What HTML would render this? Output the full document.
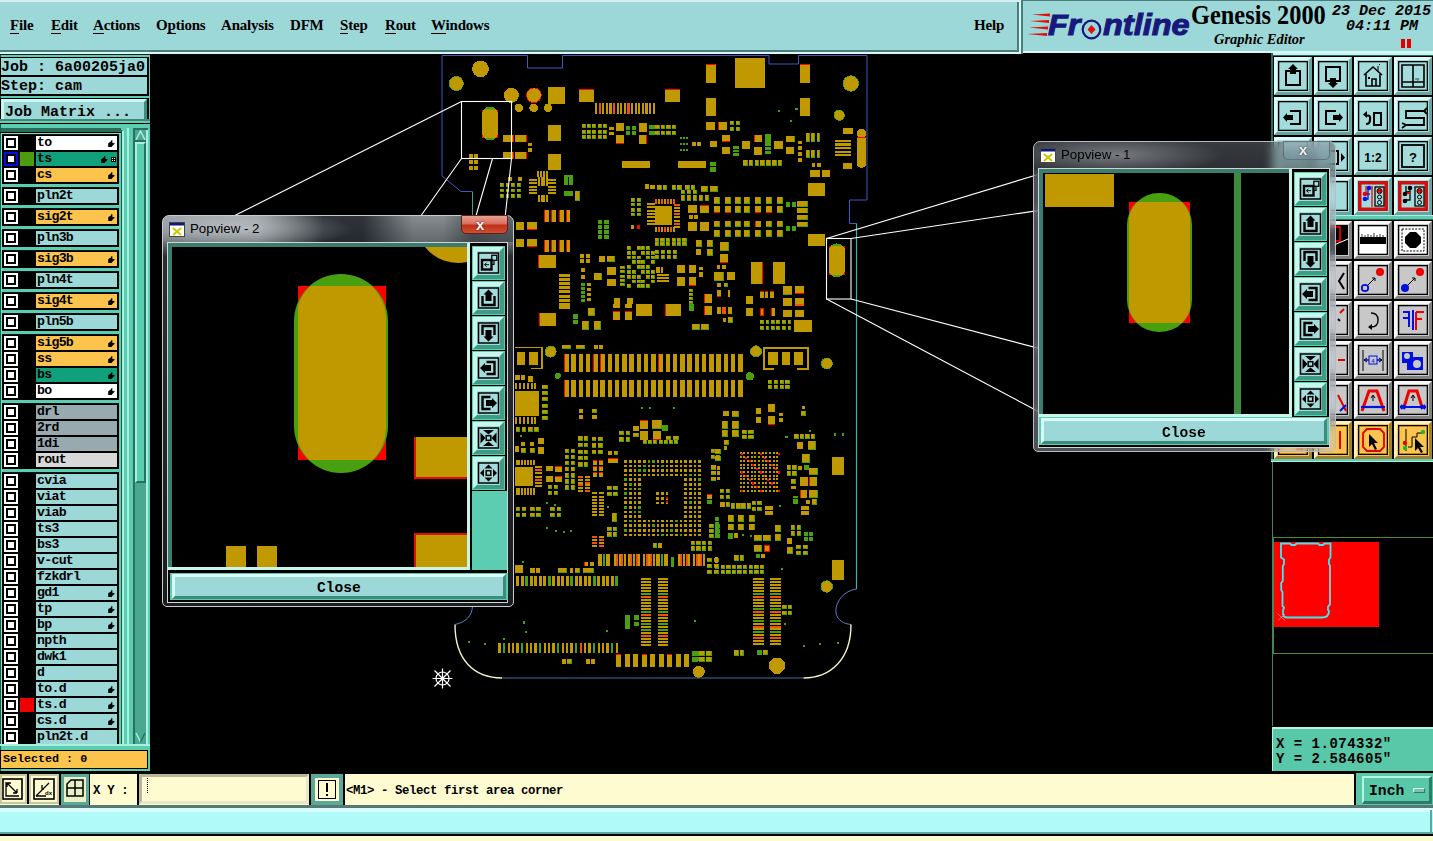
<!DOCTYPE html>
<html><head><meta charset="utf-8">
<style>

*{margin:0;padding:0;box-sizing:border-box}
html,body{width:1433px;height:841px;overflow:hidden;background:#000;position:relative}
.a{position:absolute}
.mono{font-family:"Liberation Mono",monospace;font-weight:bold}
.serif{font-family:"Liberation Serif",serif;font-weight:bold}
.menu span{position:absolute;top:17px;font-size:15px;color:#000;font-family:"Liberation Serif",serif;font-weight:bold;letter-spacing:-0.2px}
.menu u{text-decoration:none;border-bottom:1px solid #000}
.grp{position:absolute;left:2px;width:117px;background:#000;border-top:1px solid #111}
.row{position:absolute;left:0;width:117px;height:14px}
.cb{position:absolute;left:2px;top:0;width:14px;height:14px;background:#fff}
.cb:after{content:"";position:absolute;left:2px;top:2px;width:10px;height:10px;border:2px solid #000;box-sizing:border-box;background:#fff}
.sw{position:absolute;left:18px;top:0;width:14px;height:14px}
.nm{position:absolute;left:34px;top:0;width:81px;height:14px;font-family:"Liberation Mono",monospace;font-weight:bold;font-size:13.2px;letter-spacing:-0.7px;line-height:14px;padding-left:1px;color:#000}
.o{background:#fcc44c}.g{background:#10a07c}.w{background:#fff}.c{background:#9cd8d8}.gr{background:#98aab0}.lg{background:#d8d8d8}
.hand{position:absolute;right:2px;top:4px;width:7px;height:7px}
.tb{position:absolute;width:38px;height:38px;background:#a4dcd8;border-top:3px solid #e4fcfc;border-left:3px solid #e4fcfc;border-right:3px solid #4c9890;border-bottom:3px solid #4c9890}
.tb .in{position:absolute;left:2px;top:2px;width:28px;height:28px;border:2px solid #000}
.pvb{position:absolute;width:34px;height:34px;background:#5ccfb0;border-top:3px solid #c8fcf0;border-left:3px solid #c8fcf0;border-right:3px solid #2c8870;border-bottom:3px solid #2c8870}
.pvb .in{position:absolute;left:3px;top:3px;width:22px;height:22px;background:#a4dcdc;border:2px solid #000}

</style></head><body>


<!-- MENUBAR -->
<div class="a" style="left:0;top:0;width:1019px;height:54px;background:#9dd8d8;border-top:2px solid #d4f0f0"></div>
<div class="a" style="left:0;top:50px;width:1019px;height:2px;background:#4c7c7c"></div>
<div class="a" style="left:0;top:52px;width:1019px;height:2px;background:#d8f8f8"></div>
<div class="a" style="left:1017px;top:2px;width:2px;height:50px;background:#4c7c7c"></div>
<div class="a" style="left:1019px;top:0;width:2px;height:54px;background:#d8f8f8"></div>
<div class="a" style="left:1021px;top:0;width:2px;height:54px;background:#4c7c7c"></div>
<div class="menu">
<span style="left:10px"><u>F</u>ile</span>
<span style="left:51px"><u>E</u>dit</span>
<span style="left:93px"><u>A</u>ctions</span>
<span style="left:156px">O<u>p</u>tions</span>
<span style="left:221px">Analysis</span>
<span style="left:290px">DFM</span>
<span style="left:340px"><u>S</u>tep</span>
<span style="left:385px"><u>R</u>out</span>
<span style="left:431px"><u>W</u>indows</span>
<span style="left:974px">Help</span>
</div>


<!-- LOGO PANEL -->
<div class="a" style="left:1023px;top:0;width:410px;height:53px;background:#9dd8d8;border-top:1px solid #4c7c7c"></div>
<div class="a" style="left:1023px;top:51px;width:410px;height:2px;background:#d8f8f8"></div>
<svg class="a" style="left:1026px;top:12px" width="26" height="26" viewBox="0 0 26 26">
<path d="M6 2.5 L24 1.5 L24 4.5 Z" fill="#e01010"/>
<path d="M4 9 L23 8 L23 11 Z" fill="#e01010"/>
<path d="M3 15.5 L22 14.5 L22 17.5 Z" fill="#e01010"/>
<path d="M1 22 L21 21 L21 24 Z" fill="#e01010"/>
</svg>
<div class="a" style="left:1048px;top:8px;font-family:'Liberation Sans';font-weight:bold;font-style:italic;font-size:30px;color:#18187c;letter-spacing:0px;white-space:pre;-webkit-text-stroke:1.1px #18187c;transform-origin:0 0;transform:scaleX(1.08)">Fr<span style="display:inline-block;width:21px"></span>ntline</div>
<svg class="a" style="left:1080px;top:18px" width="23" height="23" viewBox="0 0 23 23"><circle cx="11.5" cy="11.5" r="8.8" fill="none" stroke="#18187c" stroke-width="2.2"/><path d="M11.5 7 L15.5 11.5 L11.5 16 L7.5 11.5 Z" fill="#e01010"/></svg>
<div class="a serif" style="left:1191px;top:0px;font-size:26.5px;color:#000;white-space:pre;transform-origin:0 0;transform:scaleX(0.92)">Genesis 2000</div>
<div class="a" style="left:1214px;top:31px;font-family:'Liberation Serif';font-weight:bold;font-style:italic;font-size:14.5px;color:#000;white-space:pre">Graphic Editor</div>
<div class="a" style="left:1332px;top:3px;font-family:'Liberation Mono';font-weight:bold;font-style:italic;font-size:15px;color:#000;white-space:pre">23 Dec 2015</div>
<div class="a" style="left:1346px;top:18px;font-family:'Liberation Mono';font-weight:bold;font-style:italic;font-size:15px;color:#000;white-space:pre">04:11 PM</div>
<div class="a" style="left:1401px;top:39px;width:4px;height:9px;background:#e00000"></div>
<div class="a" style="left:1407px;top:39px;width:4px;height:9px;background:#e00000"></div>

<!-- LEFT PANEL -->
<div class="a" style="left:0;top:54px;width:150px;height:717px;background:#5ccdb0"></div>
<div class="a" style="left:0;top:54px;width:1px;height:717px;background:#1c5c4c"></div>
<div class="a" style="left:0;top:54px;width:150px;height:1px;background:#102020"></div>
<!-- job/step -->
<div class="a" style="left:0;top:57px;width:149px;height:39px;background:#000"></div>
<div class="a mono" style="left:1px;top:58px;width:146px;height:17px;background:#9cd8d8;font-size:15px;line-height:19px;color:#000;white-space:pre">Job : 6a00205ja0</div>
<div class="a mono" style="left:1px;top:77px;width:146px;height:17px;background:#9cd8d8;font-size:15px;line-height:19px;color:#000;white-space:pre;overflow:hidden">Step: cam</div>
<!-- job matrix button -->
<div class="a" style="left:0;top:98px;width:149px;height:25px;background:#000"></div>
<div class="a mono" style="left:1px;top:99px;width:146px;height:23px;background:#9cd8d8;border-top:3px solid #c8f8f4;border-left:3px solid #c8f8f4;border-right:3px solid #3c8c80;border-bottom:3px solid #3c8c80;font-size:15px;line-height:21px;padding-left:1px;color:#000;white-space:pre;overflow:hidden">Job Matrix ...</div>
<!-- list frame -->
<div class="a" style="left:0;top:119px;width:150px;height:2px;background:#3c8a78"></div>
<div class="a" style="left:0;top:121px;width:150px;height:2px;background:#70c8b0"></div>
<div class="a" style="left:0;top:123px;width:150px;height:1px;background:#000"></div>
<div class="a" style="left:1px;top:128px;width:120px;height:4px;background:#2a6c58"></div>
<div class="a" style="left:0;top:132px;width:121px;height:1px;background:#000"></div>
<div class="a" style="left:1px;top:133px;width:120px;height:1px;background:#80d8c0"></div>
<div class="a" style="left:1px;top:133px;width:1px;height:611px;background:#80d8c0"></div>
<!-- separator strips -->
<div class="a" style="left:121px;top:130px;width:1px;height:614px;background:#1c5c4c"></div>
<div class="a" style="left:122px;top:131px;width:2px;height:613px;background:#a8f0e0"></div>
<div class="a" style="left:127px;top:128px;width:2px;height:616px;background:#a8f0e0"></div>
<div class="a" style="left:133px;top:128px;width:2px;height:616px;background:#2a7060"></div>
<div class="a" style="left:133px;top:128px;width:15px;height:2px;background:#2a7060"></div>
<div class="a" style="left:135px;top:130px;width:11px;height:614px;background:#48a890"></div>
<div class="a" style="left:146px;top:130px;width:2px;height:614px;background:#a8f0e0"></div>
<div class="a" style="left:0;top:744px;width:150px;height:2px;background:#a8f0e0"></div>
<!-- up arrow -->
<svg class="a" style="left:135px;top:130px" width="11" height="12" viewBox="0 0 11 12"><rect width="11" height="12" fill="#48a890"/><path d="M1 10 L5.5 1 L10 10" fill="none" stroke="#a8f0e0" stroke-width="1.5"/><rect x="0" y="10" width="11" height="2" fill="#2a7060"/></svg>
<!-- thumb -->
<div class="a" style="left:135px;top:142px;width:11px;height:341px;background:#5ccdb0;border-top:2px solid #a8f0e0;border-left:2px solid #a8f0e0;border-right:2px solid #2a7060;border-bottom:2px solid #2a7060"></div>
<!-- down arrow -->
<svg class="a" style="left:135px;top:731px" width="11" height="13" viewBox="0 0 11 13"><rect width="11" height="13" fill="#48a890"/><path d="M1 2 L5.5 11" stroke="#a8f0e0" stroke-width="1.5"/><path d="M5.5 11 L10 2" stroke="#2a7060" stroke-width="1.5"/></svg>
<!-- selected -->
<div class="a mono" style="left:0;top:750px;width:148px;height:19px;background:#fcc44c;border:1px solid #000;font-size:11.7px;line-height:17px;padding-left:2px;color:#000;white-space:pre">Selected : 0</div>
<div class="a" style="left:0;top:771px;width:150px;height:2px;background:#000"></div>

<div class="a" style="left:0;top:128px;width:150px;height:616px;overflow:hidden">
<div class="grp" style="top:6px;height:50px">
<div class="row" style="top:1px"><div class="cb"></div><div class="nm w">to<svg class="hand" viewBox="0 0 7 7"><path d="M0.2 3.3 L2.8 1.4 L3.6 0 L4.4 0.3 L4.3 2.7 L7 3.4 L5 5.3 L3.6 7 L0.2 7 Z" fill="#000"/></svg></div></div>
<div class="row" style="top:17px"><div class="cb" style="background:#0010e0"></div><div class="sw" style="background:#4c9c10"></div><div class="nm g">ts<svg class="hand" style="right:9px" viewBox="0 0 7 7"><path d="M0.2 3.3 L2.8 1.4 L3.6 0 L4.4 0.3 L4.3 2.7 L7 3.4 L5 5.3 L3.6 7 L0.2 7 Z" fill="#000"/></svg><div class="a" style="right:1px;top:5px;width:5px;height:5px;background:#000"><div class="a" style="left:1px;top:1px;width:1px;height:1px;background:#fff"></div><div class="a" style="left:3px;top:1px;width:1px;height:1px;background:#fff"></div><div class="a" style="left:1px;top:3px;width:1px;height:1px;background:#fff"></div><div class="a" style="left:3px;top:3px;width:1px;height:1px;background:#fff"></div></div></div></div>
<div class="row" style="top:33px"><div class="cb"></div><div class="nm o">cs<svg class="hand" viewBox="0 0 7 7"><path d="M0.2 3.3 L2.8 1.4 L3.6 0 L4.4 0.3 L4.3 2.7 L7 3.4 L5 5.3 L3.6 7 L0.2 7 Z" fill="#000"/></svg></div></div>
</div>
<div class="grp" style="top:59px;height:18px">
<div class="row" style="top:1px"><div class="cb"></div><div class="nm c">pln2t</div></div>
</div>
<div class="grp" style="top:80px;height:18px">
<div class="row" style="top:1px"><div class="cb"></div><div class="nm o">sig2t<svg class="hand" viewBox="0 0 7 7"><path d="M0.2 3.3 L2.8 1.4 L3.6 0 L4.4 0.3 L4.3 2.7 L7 3.4 L5 5.3 L3.6 7 L0.2 7 Z" fill="#000"/></svg></div></div>
</div>
<div class="grp" style="top:101px;height:18px">
<div class="row" style="top:1px"><div class="cb"></div><div class="nm c">pln3b</div></div>
</div>
<div class="grp" style="top:122px;height:18px">
<div class="row" style="top:1px"><div class="cb"></div><div class="nm o">sig3b<svg class="hand" viewBox="0 0 7 7"><path d="M0.2 3.3 L2.8 1.4 L3.6 0 L4.4 0.3 L4.3 2.7 L7 3.4 L5 5.3 L3.6 7 L0.2 7 Z" fill="#000"/></svg></div></div>
</div>
<div class="grp" style="top:143px;height:18px">
<div class="row" style="top:1px"><div class="cb"></div><div class="nm c">pln4t</div></div>
</div>
<div class="grp" style="top:164px;height:18px">
<div class="row" style="top:1px"><div class="cb"></div><div class="nm o">sig4t<svg class="hand" viewBox="0 0 7 7"><path d="M0.2 3.3 L2.8 1.4 L3.6 0 L4.4 0.3 L4.3 2.7 L7 3.4 L5 5.3 L3.6 7 L0.2 7 Z" fill="#000"/></svg></div></div>
</div>
<div class="grp" style="top:185px;height:18px">
<div class="row" style="top:1px"><div class="cb"></div><div class="nm c">pln5b</div></div>
</div>
<div class="grp" style="top:206px;height:66px">
<div class="row" style="top:1px"><div class="cb"></div><div class="nm o">sig5b<svg class="hand" viewBox="0 0 7 7"><path d="M0.2 3.3 L2.8 1.4 L3.6 0 L4.4 0.3 L4.3 2.7 L7 3.4 L5 5.3 L3.6 7 L0.2 7 Z" fill="#000"/></svg></div></div>
<div class="row" style="top:17px"><div class="cb"></div><div class="nm o">ss<svg class="hand" viewBox="0 0 7 7"><path d="M0.2 3.3 L2.8 1.4 L3.6 0 L4.4 0.3 L4.3 2.7 L7 3.4 L5 5.3 L3.6 7 L0.2 7 Z" fill="#000"/></svg></div></div>
<div class="row" style="top:33px"><div class="cb"></div><div class="nm g">bs<svg class="hand" viewBox="0 0 7 7"><path d="M0.2 3.3 L2.8 1.4 L3.6 0 L4.4 0.3 L4.3 2.7 L7 3.4 L5 5.3 L3.6 7 L0.2 7 Z" fill="#000"/></svg></div></div>
<div class="row" style="top:49px"><div class="cb"></div><div class="nm w">bo<svg class="hand" viewBox="0 0 7 7"><path d="M0.2 3.3 L2.8 1.4 L3.6 0 L4.4 0.3 L4.3 2.7 L7 3.4 L5 5.3 L3.6 7 L0.2 7 Z" fill="#000"/></svg></div></div>
</div>
<div class="grp" style="top:275px;height:66px">
<div class="row" style="top:1px"><div class="cb"></div><div class="nm gr">drl</div></div>
<div class="row" style="top:17px"><div class="cb"></div><div class="nm gr">2rd</div></div>
<div class="row" style="top:33px"><div class="cb"></div><div class="nm gr">1di</div></div>
<div class="row" style="top:49px"><div class="cb"></div><div class="nm lg">rout</div></div>
</div>
<div class="grp" style="top:344px;height:274px">
<div class="row" style="top:1px"><div class="cb"></div><div class="nm c">cvia</div></div>
<div class="row" style="top:17px"><div class="cb"></div><div class="nm c">viat</div></div>
<div class="row" style="top:33px"><div class="cb"></div><div class="nm c">viab</div></div>
<div class="row" style="top:49px"><div class="cb"></div><div class="nm c">ts3</div></div>
<div class="row" style="top:65px"><div class="cb"></div><div class="nm c">bs3</div></div>
<div class="row" style="top:81px"><div class="cb"></div><div class="nm c">v-cut</div></div>
<div class="row" style="top:97px"><div class="cb"></div><div class="nm c">fzkdrl</div></div>
<div class="row" style="top:113px"><div class="cb"></div><div class="nm c">gd1<svg class="hand" viewBox="0 0 7 7"><path d="M0.2 3.3 L2.8 1.4 L3.6 0 L4.4 0.3 L4.3 2.7 L7 3.4 L5 5.3 L3.6 7 L0.2 7 Z" fill="#000"/></svg></div></div>
<div class="row" style="top:129px"><div class="cb"></div><div class="nm c">tp<svg class="hand" viewBox="0 0 7 7"><path d="M0.2 3.3 L2.8 1.4 L3.6 0 L4.4 0.3 L4.3 2.7 L7 3.4 L5 5.3 L3.6 7 L0.2 7 Z" fill="#000"/></svg></div></div>
<div class="row" style="top:145px"><div class="cb"></div><div class="nm c">bp<svg class="hand" viewBox="0 0 7 7"><path d="M0.2 3.3 L2.8 1.4 L3.6 0 L4.4 0.3 L4.3 2.7 L7 3.4 L5 5.3 L3.6 7 L0.2 7 Z" fill="#000"/></svg></div></div>
<div class="row" style="top:161px"><div class="cb"></div><div class="nm c">npth</div></div>
<div class="row" style="top:177px"><div class="cb"></div><div class="nm c">dwk1</div></div>
<div class="row" style="top:193px"><div class="cb"></div><div class="nm c">d</div></div>
<div class="row" style="top:209px"><div class="cb"></div><div class="nm c">to.d<svg class="hand" viewBox="0 0 7 7"><path d="M0.2 3.3 L2.8 1.4 L3.6 0 L4.4 0.3 L4.3 2.7 L7 3.4 L5 5.3 L3.6 7 L0.2 7 Z" fill="#000"/></svg></div></div>
<div class="row" style="top:225px"><div class="cb"></div><div class="sw" style="background:#f00000"></div><div class="nm c">ts.d<svg class="hand" viewBox="0 0 7 7"><path d="M0.2 3.3 L2.8 1.4 L3.6 0 L4.4 0.3 L4.3 2.7 L7 3.4 L5 5.3 L3.6 7 L0.2 7 Z" fill="#000"/></svg></div></div>
<div class="row" style="top:241px"><div class="cb"></div><div class="nm c">cs.d<svg class="hand" viewBox="0 0 7 7"><path d="M0.2 3.3 L2.8 1.4 L3.6 0 L4.4 0.3 L4.3 2.7 L7 3.4 L5 5.3 L3.6 7 L0.2 7 Z" fill="#000"/></svg></div></div>
<div class="row" style="top:257px"><div class="cb"></div><div class="nm c">pln2t.d</div></div>
</div>
</div>
<!-- PCB -->
<svg class="a" style="left:0;top:0" width="1433" height="841" viewBox="0 0 1433 841" shape-rendering="crispEdges"><circle cx="480.5" cy="68.9" r="8.4" fill="#c09800"/><circle cx="456.3" cy="83.5" r="7.5" fill="#48a010"/><circle cx="456.3" cy="83.5" r="6.7" fill="#c09800"/><circle cx="511.4" cy="95.3" r="7.5" fill="#c09800"/><circle cx="533.9" cy="95.3" r="7.8" fill="#ff0000"/><circle cx="533.9" cy="95.3" r="7" fill="#c09800"/><rect x="548" y="87" width="17" height="16.6" fill="#c09800"/><rect x="579" y="89" width="15" height="12.6" fill="#c09800"/><rect x="579" y="89" width="15" height="1" fill="#ff0000"/><circle cx="518.8" cy="107.8" r="4" fill="#c09800"/><circle cx="533.6" cy="107.8" r="4.3" fill="#c09800"/><circle cx="548" cy="107.8" r="4" fill="#c09800"/><rect x="595" y="103" width="2" height="11" fill="#c09800"/><rect x="599" y="103" width="2" height="11" fill="#f05010"/><rect x="602" y="103" width="2" height="11" fill="#c09800"/><rect x="606" y="103" width="2" height="11" fill="#c09800"/><rect x="609" y="103" width="3" height="11" fill="#c09800"/><rect x="613" y="103" width="2" height="11" fill="#f05010"/><rect x="617" y="103" width="2" height="11" fill="#c09800"/><rect x="620" y="103" width="2" height="11" fill="#c09800"/><rect x="624" y="103" width="2" height="11" fill="#c09800"/><rect x="627" y="103" width="3" height="11" fill="#f05010"/><rect x="631" y="103" width="2" height="11" fill="#c09800"/><rect x="635" y="103" width="2" height="11" fill="#c09800"/><rect x="638" y="103" width="2" height="11" fill="#c09800"/><rect x="642" y="103" width="2" height="11" fill="#c09800"/><rect x="645" y="103" width="3" height="11" fill="#c09800"/><rect x="649" y="103" width="2" height="11" fill="#c09800"/><rect x="653" y="103" width="2" height="11" fill="#c09800"/><rect x="503" y="134.9" width="11" height="6.9" fill="#c09800"/><rect x="513" y="134.9" width="1" height="6.9" fill="#ff0000"/><rect x="515" y="134.9" width="12" height="6.9" fill="#c09800"/><rect x="526" y="134.9" width="1" height="6.9" fill="#ff0000"/><rect x="503" y="152" width="11" height="6.7" fill="#c09800"/><rect x="513" y="152" width="1" height="6.7" fill="#ff0000"/><rect x="515" y="152" width="12" height="6.7" fill="#c09800"/><rect x="526" y="152" width="1" height="6.7" fill="#ff0000"/><rect x="528" y="143" width="4" height="3" fill="#c09800"/><rect x="528" y="148" width="4" height="4" fill="#c09800"/><rect x="548" y="125" width="12.8" height="16" fill="#c09800"/><rect x="548" y="153.9" width="12.8" height="16.1" fill="#c09800"/><rect x="469" y="154" width="4" height="4" fill="#c09800"/><rect x="474" y="154" width="4" height="4" fill="#c09800"/><rect x="469" y="160" width="4" height="4" fill="#c09800"/><rect x="474" y="160" width="4" height="4" fill="#c09800"/><rect x="469" y="166" width="4" height="4" fill="#c09800"/><rect x="474" y="166" width="4" height="4" fill="#c09800"/><rect x="582" y="124" width="4" height="4" fill="#48a010"/><rect x="582" y="124" width="3.1" height="3.1" fill="#c09800"/><rect x="587" y="124" width="4" height="4" fill="#48a010"/><rect x="587" y="124" width="3.1" height="3.1" fill="#c09800"/><rect x="592" y="124" width="4" height="4" fill="#48a010"/><rect x="592" y="124" width="3.1" height="3.1" fill="#c09800"/><rect x="598" y="124" width="4" height="4" fill="#48a010"/><rect x="598" y="124" width="3.1" height="3.1" fill="#c09800"/><rect x="603" y="124" width="4" height="4" fill="#48a010"/><rect x="603" y="124" width="3.1" height="3.1" fill="#c09800"/><rect x="582" y="130" width="4" height="4" fill="#48a010"/><rect x="582" y="130" width="3.1" height="3.1" fill="#c09800"/><rect x="587" y="130" width="4" height="4" fill="#48a010"/><rect x="587" y="130" width="3.1" height="3.1" fill="#c09800"/><rect x="592" y="130" width="4" height="4" fill="#48a010"/><rect x="592" y="130" width="3.1" height="3.1" fill="#c09800"/><rect x="598" y="130" width="4" height="4" fill="#48a010"/><rect x="598" y="130" width="3.1" height="3.1" fill="#c09800"/><rect x="603" y="130" width="4" height="4" fill="#48a010"/><rect x="603" y="130" width="3.1" height="3.1" fill="#c09800"/><rect x="582" y="135" width="4" height="4" fill="#48a010"/><rect x="582" y="135" width="3.1" height="3.1" fill="#c09800"/><rect x="587" y="135" width="4" height="4" fill="#48a010"/><rect x="587" y="135" width="3.1" height="3.1" fill="#c09800"/><rect x="592" y="135" width="4" height="4" fill="#48a010"/><rect x="592" y="135" width="3.1" height="3.1" fill="#c09800"/><rect x="598" y="135" width="4" height="4" fill="#48a010"/><rect x="598" y="135" width="3.1" height="3.1" fill="#c09800"/><rect x="603" y="135" width="4" height="4" fill="#48a010"/><rect x="603" y="135" width="3.1" height="3.1" fill="#c09800"/><rect x="609" y="127" width="5" height="3" fill="#c09800"/><rect x="609" y="132" width="5" height="3" fill="#c09800"/><rect x="616.4" y="123.2" width="7.6" height="7.6" fill="#c09800"/><rect x="616.4" y="135.3" width="7.6" height="8.3" fill="#c09800"/><rect x="616.4" y="142.6" width="7.6" height="1" fill="#ff0000"/><rect x="626" y="126" width="4" height="4" fill="#48a010"/><rect x="632" y="126" width="4" height="4" fill="#48a010"/><rect x="626" y="131" width="4" height="4" fill="#48a010"/><rect x="632" y="131" width="4" height="4" fill="#48a010"/><rect x="639" y="123" width="8" height="9.3" fill="#c09800"/><rect x="639" y="135.3" width="8" height="8.3" fill="#c09800"/><rect x="646" y="135.3" width="1" height="8.3" fill="#ff0000"/><rect x="649" y="125" width="6" height="4" fill="#48a010"/><rect x="649" y="131" width="6" height="4" fill="#48a010"/><rect x="622" y="161.4" width="27.9" height="6.4" fill="#c09800"/><rect x="537" y="171" width="2" height="6" fill="#c09800"/><rect x="540" y="171" width="2" height="6" fill="#c09800"/><rect x="543" y="171" width="2" height="6" fill="#c09800"/><rect x="546" y="171" width="2" height="6" fill="#c09800"/><rect x="564" y="175" width="9" height="2" fill="#48a010"/><rect x="706" y="64.3" width="10.2" height="18.7" fill="#c09800"/><rect x="706" y="64.3" width="10.2" height="1" fill="#ff0000"/><rect x="735" y="57.9" width="30" height="29.8" fill="#c09800"/><rect x="800" y="64.3" width="10" height="18.7" fill="#c09800"/><rect x="800" y="64.3" width="10" height="1" fill="#ff0000"/><circle cx="850.8" cy="83.5" r="8.2" fill="#48a010"/><circle cx="850.8" cy="83.5" r="7.4" fill="#c09800"/><rect x="665" y="89" width="15" height="12.6" fill="#c09800"/><rect x="665" y="89" width="15" height="1" fill="#ff0000"/><rect x="706" y="98" width="10.2" height="18" fill="#c09800"/><rect x="800" y="98" width="10" height="18" fill="#c09800"/><circle cx="839.2" cy="115.2" r="5.6" fill="#48a010"/><circle cx="839.2" cy="115.2" r="4.8" fill="#c09800"/><rect x="778" y="110" width="2" height="2" fill="#48a010"/><rect x="795" y="108" width="3" height="2" fill="#48a010"/><rect x="790" y="120" width="2" height="2" fill="#48a010"/><rect x="655" y="125" width="5" height="4" fill="#48a010"/><rect x="655" y="125" width="4.1" height="3.1" fill="#c09800"/><rect x="661" y="125" width="4" height="4" fill="#48a010"/><rect x="661" y="125" width="3.1" height="3.1" fill="#c09800"/><rect x="666" y="125" width="5" height="4" fill="#48a010"/><rect x="666" y="125" width="4.1" height="3.1" fill="#c09800"/><rect x="672" y="125" width="4" height="4" fill="#48a010"/><rect x="672" y="125" width="3.1" height="3.1" fill="#c09800"/><rect x="655" y="131" width="5" height="4" fill="#48a010"/><rect x="655" y="131" width="4.1" height="3.1" fill="#c09800"/><rect x="661" y="131" width="4" height="4" fill="#48a010"/><rect x="661" y="131" width="3.1" height="3.1" fill="#c09800"/><rect x="666" y="131" width="5" height="4" fill="#48a010"/><rect x="666" y="131" width="4.1" height="3.1" fill="#c09800"/><rect x="672" y="131" width="4" height="4" fill="#48a010"/><rect x="672" y="131" width="3.1" height="3.1" fill="#c09800"/><rect x="706" y="122" width="9" height="8" fill="#c09800"/><rect x="718" y="122" width="9" height="8" fill="#c09800"/><rect x="718" y="122" width="1" height="8" fill="#ff0000"/><rect x="730" y="121" width="4" height="4" fill="#48a010"/><rect x="730" y="121" width="3.1" height="3.1" fill="#c09800"/><rect x="736" y="121" width="4" height="4" fill="#48a010"/><rect x="736" y="121" width="3.1" height="3.1" fill="#c09800"/><rect x="730" y="127" width="4" height="4" fill="#48a010"/><rect x="730" y="127" width="3.1" height="3.1" fill="#c09800"/><rect x="736" y="127" width="4" height="4" fill="#48a010"/><rect x="736" y="127" width="3.1" height="3.1" fill="#c09800"/><rect x="680" y="137" width="2" height="2" fill="#48a010"/><rect x="683" y="137" width="2" height="2" fill="#48a010"/><rect x="686" y="137" width="2" height="2" fill="#48a010"/><rect x="680" y="143" width="2" height="2" fill="#48a010"/><rect x="683" y="143" width="2" height="2" fill="#48a010"/><rect x="686" y="143" width="2" height="2" fill="#48a010"/><rect x="680" y="149" width="2" height="2" fill="#48a010"/><rect x="683" y="149" width="2" height="2" fill="#48a010"/><rect x="686" y="149" width="2" height="2" fill="#48a010"/><rect x="692" y="142" width="4" height="4" fill="#c09800"/><rect x="697" y="142" width="4" height="4" fill="#c09800"/><rect x="710" y="141" width="7" height="6" fill="#c09800"/><rect x="722" y="135" width="8" height="7" fill="#c09800"/><rect x="722" y="141" width="8" height="1" fill="#ff0000"/><rect x="722" y="147" width="8" height="7" fill="#c09800"/><rect x="733" y="146" width="6" height="3" fill="#48a010"/><rect x="733" y="150" width="6" height="2" fill="#48a010"/><rect x="733" y="153" width="6" height="3" fill="#48a010"/><rect x="742" y="141" width="8" height="8" fill="#c09800"/><rect x="754" y="135" width="8" height="7" fill="#c09800"/><rect x="754" y="135" width="1" height="7" fill="#ff0000"/><rect x="754" y="147" width="8" height="7.6" fill="#c09800"/><rect x="765" y="134" width="6" height="4" fill="#48a010"/><rect x="765" y="138" width="6" height="4" fill="#48a010"/><rect x="765" y="142" width="6" height="4" fill="#48a010"/><rect x="765" y="147" width="6" height="3" fill="#48a010"/><rect x="765" y="151" width="6" height="3" fill="#48a010"/><rect x="774" y="141" width="8.6" height="8" fill="#c09800"/><rect x="786" y="136" width="9" height="6.4" fill="#48a010"/><rect x="786" y="136" width="8.1" height="5.5" fill="#c09800"/><rect x="786" y="147" width="8" height="7" fill="#c09800"/><rect x="798" y="141" width="4" height="3" fill="#c09800"/><rect x="798" y="146" width="4" height="4" fill="#c09800"/><rect x="798" y="152" width="4" height="4" fill="#c09800"/><rect x="798" y="158" width="4" height="4" fill="#c09800"/><rect x="806" y="133" width="4" height="9" fill="#48a010"/><rect x="806" y="133" width="3.1" height="8.1" fill="#c09800"/><rect x="811" y="133" width="4" height="9" fill="#48a010"/><rect x="811" y="133" width="3.1" height="8.1" fill="#c09800"/><rect x="817" y="133" width="3" height="9" fill="#48a010"/><rect x="817" y="133" width="2.1" height="8.1" fill="#c09800"/><rect x="806" y="150" width="4" height="8" fill="#48a010"/><rect x="806" y="150" width="3.1" height="7.1" fill="#c09800"/><rect x="811" y="150" width="4" height="8" fill="#48a010"/><rect x="811" y="150" width="3.1" height="7.1" fill="#c09800"/><rect x="817" y="150" width="3" height="8" fill="#48a010"/><rect x="817" y="150" width="2.1" height="7.1" fill="#c09800"/><rect x="843" y="128" width="9.5" height="5.8" fill="#c09800"/><rect x="835" y="140" width="16" height="2" fill="#c09800"/><rect x="835" y="143" width="16" height="3" fill="#c09800"/><rect x="835" y="147" width="16" height="2" fill="#c09800"/><rect x="835" y="151" width="16" height="2" fill="#c09800"/><rect x="835" y="154" width="16" height="2" fill="#c09800"/><circle cx="861.5" cy="133.5" r="4.9" fill="#c09800"/><rect x="856.6" y="136.5" width="9.8" height="24.5" fill="#c09800"/><rect x="856.6" y="136.5" width="9.8" height="1" fill="#ff0000"/><circle cx="861.5" cy="163" r="4.9" fill="#c09800"/><rect x="843" y="162.5" width="9" height="6.5" fill="#c09800"/><rect x="812" y="163" width="3" height="4" fill="#c09800"/><rect x="817" y="163" width="4" height="4" fill="#c09800"/><rect x="810" y="170" width="10" height="7" fill="#c09800"/><rect x="822" y="170" width="8" height="7" fill="#c09800"/><rect x="678" y="161" width="27.6" height="6.8" fill="#c09800"/><rect x="710" y="162" width="6" height="4" fill="#48a010"/><rect x="710" y="167" width="6" height="4.5" fill="#48a010"/><rect x="743" y="160" width="4.5" height="5.5" fill="#48a010"/><rect x="743" y="160" width="3.6" height="4.6" fill="#c09800"/><rect x="748.8" y="160" width="4.5" height="5.5" fill="#48a010"/><rect x="748.8" y="160" width="3.6" height="4.6" fill="#c09800"/><rect x="754.6" y="160" width="4.5" height="5.5" fill="#48a010"/><rect x="754.6" y="160" width="3.6" height="4.6" fill="#c09800"/><rect x="760.4" y="160" width="4.5" height="5.5" fill="#48a010"/><rect x="760.4" y="160" width="3.6" height="4.6" fill="#c09800"/><rect x="766.2" y="160" width="4.5" height="5.5" fill="#48a010"/><rect x="766.2" y="160" width="3.6" height="4.6" fill="#c09800"/><rect x="772" y="160" width="4.5" height="5.5" fill="#48a010"/><rect x="772" y="160" width="3.6" height="4.6" fill="#c09800"/><rect x="777.8" y="160" width="4.5" height="5.5" fill="#48a010"/><rect x="777.8" y="160" width="3.6" height="4.6" fill="#c09800"/><rect x="500" y="183" width="4" height="4" fill="#48a010"/><rect x="500" y="183" width="3.1" height="3.1" fill="#c09800"/><rect x="506" y="183" width="3" height="4" fill="#48a010"/><rect x="506" y="183" width="2.1" height="3.1" fill="#c09800"/><rect x="511" y="183" width="4" height="4" fill="#48a010"/><rect x="511" y="183" width="3.1" height="3.1" fill="#c09800"/><rect x="517" y="183" width="4" height="4" fill="#48a010"/><rect x="517" y="183" width="3.1" height="3.1" fill="#c09800"/><rect x="500" y="189" width="4" height="3" fill="#48a010"/><rect x="500" y="189" width="3.1" height="2.1" fill="#c09800"/><rect x="506" y="189" width="3" height="3" fill="#48a010"/><rect x="506" y="189" width="2.1" height="2.1" fill="#c09800"/><rect x="511" y="189" width="4" height="3" fill="#48a010"/><rect x="511" y="189" width="3.1" height="2.1" fill="#c09800"/><rect x="517" y="189" width="4" height="3" fill="#48a010"/><rect x="517" y="189" width="3.1" height="2.1" fill="#c09800"/><rect x="500" y="194" width="4" height="4" fill="#48a010"/><rect x="500" y="194" width="3.1" height="3.1" fill="#c09800"/><rect x="506" y="194" width="3" height="4" fill="#48a010"/><rect x="506" y="194" width="2.1" height="3.1" fill="#c09800"/><rect x="511" y="194" width="4" height="4" fill="#48a010"/><rect x="511" y="194" width="3.1" height="3.1" fill="#c09800"/><rect x="517" y="194" width="4" height="4" fill="#48a010"/><rect x="517" y="194" width="3.1" height="3.1" fill="#c09800"/><rect x="508" y="177" width="4" height="4" fill="#c09800"/><rect x="518" y="177" width="4" height="4" fill="#c09800"/><rect x="529" y="179" width="8" height="2" fill="#c09800"/><rect x="529" y="182" width="8" height="2" fill="#c09800"/><rect x="529" y="186" width="8" height="2" fill="#c09800"/><rect x="529" y="189" width="8" height="2" fill="#c09800"/><rect x="529" y="192" width="8" height="2" fill="#c09800"/><rect x="538" y="177" width="2" height="9" fill="#c09800"/><rect x="541" y="177" width="2" height="9" fill="#c09800"/><rect x="543" y="177" width="2" height="9" fill="#c09800"/><rect x="546" y="177" width="2" height="9" fill="#c09800"/><rect x="538" y="195" width="2" height="7" fill="#c09800"/><rect x="541" y="195" width="2" height="7" fill="#c09800"/><rect x="543" y="195" width="2" height="7" fill="#c09800"/><rect x="546" y="195" width="2" height="7" fill="#c09800"/><rect x="548" y="179" width="8" height="2" fill="#c09800"/><rect x="548" y="182" width="8" height="2" fill="#c09800"/><rect x="548" y="186" width="8" height="2" fill="#c09800"/><rect x="548" y="189" width="8" height="2" fill="#c09800"/><rect x="548" y="192" width="8" height="2" fill="#c09800"/><rect x="564" y="177" width="4" height="4" fill="#48a010"/><rect x="569" y="177" width="4" height="4" fill="#48a010"/><rect x="564" y="181" width="4" height="4" fill="#48a010"/><rect x="569" y="181" width="4" height="4" fill="#48a010"/><rect x="564" y="191" width="9" height="5" fill="#48a010"/><rect x="575" y="191" width="5" height="10" fill="#48a010"/><rect x="575" y="191" width="4.1" height="9.1" fill="#c09800"/><rect x="544" y="210" width="4.6" height="12" fill="#c09800"/><rect x="544" y="210" width="1" height="12" fill="#ff0000"/><rect x="551.4" y="210" width="4.6" height="12" fill="#c09800"/><rect x="551.4" y="210" width="1" height="12" fill="#ff0000"/><rect x="559" y="210" width="4.6" height="12" fill="#c09800"/><rect x="559" y="210" width="1" height="12" fill="#ff0000"/><rect x="565.6" y="210" width="4.6" height="12" fill="#c09800"/><rect x="565.6" y="210" width="1" height="12" fill="#ff0000"/><rect x="544" y="240.4" width="4.6" height="12" fill="#c09800"/><rect x="544" y="240.4" width="1" height="12" fill="#ff0000"/><rect x="551.4" y="240.4" width="4.6" height="12" fill="#c09800"/><rect x="551.4" y="240.4" width="1" height="12" fill="#ff0000"/><rect x="559" y="240.4" width="4.6" height="12" fill="#c09800"/><rect x="559" y="240.4" width="1" height="12" fill="#ff0000"/><rect x="565.6" y="240.4" width="4.6" height="12" fill="#c09800"/><rect x="565.6" y="240.4" width="1" height="12" fill="#ff0000"/><rect x="515.5" y="222" width="8.3" height="7.8" fill="#c09800"/><rect x="526.8" y="222" width="9.8" height="7.8" fill="#c09800"/><rect x="526.8" y="228.8" width="9.8" height="1" fill="#ff0000"/><rect x="515.5" y="239" width="8.3" height="8.2" fill="#c09800"/><rect x="526.8" y="239" width="9.8" height="8.2" fill="#c09800"/><rect x="526.8" y="246.2" width="9.8" height="1" fill="#ff0000"/><rect x="538" y="254.8" width="18" height="12.8" fill="#c09800"/><rect x="538" y="254.8" width="1" height="12.8" fill="#ff0000"/><rect x="559" y="274" width="11" height="3" fill="#c09800"/><rect x="559" y="278" width="11" height="3" fill="#c09800"/><rect x="559" y="282" width="11" height="3" fill="#c09800"/><rect x="559" y="286" width="11" height="3" fill="#c09800"/><rect x="559" y="290" width="11" height="3" fill="#c09800"/><rect x="559" y="295" width="11" height="3" fill="#c09800"/><rect x="559" y="299" width="11" height="3" fill="#c09800"/><rect x="559" y="303" width="11" height="3" fill="#c09800"/><rect x="598" y="220" width="4" height="4" fill="#48a010"/><rect x="604" y="220" width="5" height="4" fill="#48a010"/><rect x="598" y="225" width="4" height="4" fill="#48a010"/><rect x="604" y="225" width="5" height="4" fill="#48a010"/><rect x="598" y="230" width="4" height="4" fill="#48a010"/><rect x="604" y="230" width="5" height="4" fill="#48a010"/><rect x="598" y="235" width="4" height="4" fill="#48a010"/><rect x="604" y="235" width="5" height="4" fill="#48a010"/><rect x="580" y="254" width="4" height="4" fill="#c09800"/><rect x="586" y="254" width="4" height="4" fill="#c09800"/><rect x="580" y="259" width="4" height="4" fill="#c09800"/><rect x="586" y="259" width="4" height="4" fill="#c09800"/><rect x="581" y="268" width="4" height="4" fill="#c09800"/><rect x="581" y="275" width="4" height="4" fill="#c09800"/><rect x="581" y="283" width="4" height="3" fill="#48a010"/><rect x="581" y="287" width="4" height="3" fill="#48a010"/><rect x="581" y="291" width="4" height="3" fill="#48a010"/><rect x="581" y="295" width="4" height="3" fill="#48a010"/><rect x="581" y="299" width="4" height="3" fill="#48a010"/><rect x="587" y="283" width="4" height="3" fill="#c09800"/><rect x="587" y="288" width="4" height="3" fill="#c09800"/><rect x="587" y="293" width="4" height="3" fill="#c09800"/><rect x="587" y="298" width="4" height="3" fill="#c09800"/><rect x="594" y="273" width="8" height="7.4" fill="#48a010"/><rect x="594" y="273" width="7.1" height="6.5" fill="#c09800"/><rect x="599" y="255.5" width="6" height="6.1" fill="#c09800"/><rect x="607" y="255.5" width="8" height="6.1" fill="#48a010"/><rect x="607" y="255.5" width="7.1" height="5.2" fill="#c09800"/><rect x="606.8" y="266.8" width="9.2" height="8.2" fill="#c09800"/><rect x="606.8" y="279" width="9.2" height="6.7" fill="#c09800"/><rect x="620" y="266" width="5" height="3" fill="#48a010"/><rect x="620" y="266" width="4.1" height="2.1" fill="#c09800"/><rect x="620" y="270" width="5" height="3" fill="#48a010"/><rect x="620" y="270" width="4.1" height="2.1" fill="#c09800"/><rect x="620" y="275" width="5" height="3" fill="#48a010"/><rect x="620" y="275" width="4.1" height="2.1" fill="#c09800"/><rect x="620" y="279" width="5" height="3" fill="#48a010"/><rect x="620" y="279" width="4.1" height="2.1" fill="#c09800"/><rect x="620" y="283" width="5" height="3" fill="#48a010"/><rect x="620" y="283" width="4.1" height="2.1" fill="#c09800"/><rect x="627" y="246" width="4" height="4" fill="#48a010"/><rect x="627" y="246" width="3.1" height="3.1" fill="#c09800"/><rect x="637" y="246" width="4" height="4" fill="#48a010"/><rect x="637" y="246" width="3.1" height="3.1" fill="#c09800"/><rect x="641" y="246" width="4" height="4" fill="#48a010"/><rect x="641" y="246" width="3.1" height="3.1" fill="#c09800"/><rect x="646" y="246" width="4" height="4" fill="#48a010"/><rect x="646" y="246" width="3.1" height="3.1" fill="#c09800"/><rect x="627" y="251" width="4" height="4" fill="#48a010"/><rect x="627" y="251" width="3.1" height="3.1" fill="#c09800"/><rect x="632" y="251" width="4" height="4" fill="#48a010"/><rect x="632" y="251" width="3.1" height="3.1" fill="#c09800"/><rect x="641" y="251" width="4" height="4" fill="#48a010"/><rect x="641" y="251" width="3.1" height="3.1" fill="#c09800"/><rect x="646" y="251" width="4" height="4" fill="#48a010"/><rect x="646" y="251" width="3.1" height="3.1" fill="#c09800"/><rect x="651" y="251" width="4" height="4" fill="#48a010"/><rect x="651" y="251" width="3.1" height="3.1" fill="#c09800"/><rect x="627" y="256" width="4" height="3" fill="#48a010"/><rect x="627" y="256" width="3.1" height="2.1" fill="#c09800"/><rect x="632" y="256" width="4" height="3" fill="#48a010"/><rect x="632" y="256" width="3.1" height="2.1" fill="#c09800"/><rect x="637" y="256" width="4" height="3" fill="#48a010"/><rect x="637" y="256" width="3.1" height="2.1" fill="#c09800"/><rect x="646" y="256" width="4" height="3" fill="#48a010"/><rect x="646" y="256" width="3.1" height="2.1" fill="#c09800"/><rect x="651" y="256" width="4" height="3" fill="#48a010"/><rect x="651" y="256" width="3.1" height="2.1" fill="#c09800"/><rect x="632" y="260" width="4" height="4" fill="#48a010"/><rect x="632" y="260" width="3.1" height="3.1" fill="#c09800"/><rect x="637" y="260" width="4" height="4" fill="#48a010"/><rect x="637" y="260" width="3.1" height="3.1" fill="#c09800"/><rect x="641" y="260" width="4" height="4" fill="#48a010"/><rect x="641" y="260" width="3.1" height="3.1" fill="#c09800"/><rect x="651" y="260" width="4" height="4" fill="#48a010"/><rect x="651" y="260" width="3.1" height="3.1" fill="#c09800"/><rect x="627" y="265" width="4" height="4" fill="#48a010"/><rect x="627" y="265" width="3.1" height="3.1" fill="#c09800"/><rect x="637" y="265" width="4" height="4" fill="#48a010"/><rect x="637" y="265" width="3.1" height="3.1" fill="#c09800"/><rect x="641" y="265" width="4" height="4" fill="#48a010"/><rect x="641" y="265" width="3.1" height="3.1" fill="#c09800"/><rect x="646" y="265" width="4" height="4" fill="#48a010"/><rect x="646" y="265" width="3.1" height="3.1" fill="#c09800"/><rect x="627" y="270" width="4" height="4" fill="#48a010"/><rect x="627" y="270" width="3.1" height="3.1" fill="#c09800"/><rect x="632" y="270" width="4" height="4" fill="#48a010"/><rect x="632" y="270" width="3.1" height="3.1" fill="#c09800"/><rect x="641" y="270" width="4" height="4" fill="#48a010"/><rect x="641" y="270" width="3.1" height="3.1" fill="#c09800"/><rect x="646" y="270" width="4" height="4" fill="#48a010"/><rect x="646" y="270" width="3.1" height="3.1" fill="#c09800"/><rect x="651" y="270" width="4" height="4" fill="#48a010"/><rect x="651" y="270" width="3.1" height="3.1" fill="#c09800"/><rect x="627" y="275" width="4" height="4" fill="#48a010"/><rect x="627" y="275" width="3.1" height="3.1" fill="#c09800"/><rect x="632" y="275" width="4" height="4" fill="#48a010"/><rect x="632" y="275" width="3.1" height="3.1" fill="#c09800"/><rect x="637" y="275" width="4" height="4" fill="#48a010"/><rect x="637" y="275" width="3.1" height="3.1" fill="#c09800"/><rect x="646" y="275" width="4" height="4" fill="#48a010"/><rect x="646" y="275" width="3.1" height="3.1" fill="#c09800"/><rect x="651" y="275" width="4" height="4" fill="#48a010"/><rect x="651" y="275" width="3.1" height="3.1" fill="#c09800"/><rect x="632" y="280" width="4" height="3" fill="#48a010"/><rect x="632" y="280" width="3.1" height="2.1" fill="#c09800"/><rect x="637" y="280" width="4" height="3" fill="#48a010"/><rect x="637" y="280" width="3.1" height="2.1" fill="#c09800"/><rect x="641" y="280" width="4" height="3" fill="#48a010"/><rect x="641" y="280" width="3.1" height="2.1" fill="#c09800"/><rect x="651" y="280" width="4" height="3" fill="#48a010"/><rect x="651" y="280" width="3.1" height="2.1" fill="#c09800"/><rect x="627" y="284" width="4" height="4" fill="#48a010"/><rect x="627" y="284" width="3.1" height="3.1" fill="#c09800"/><rect x="637" y="284" width="4" height="4" fill="#48a010"/><rect x="637" y="284" width="3.1" height="3.1" fill="#c09800"/><rect x="641" y="284" width="4" height="4" fill="#48a010"/><rect x="641" y="284" width="3.1" height="3.1" fill="#c09800"/><rect x="646" y="284" width="4" height="4" fill="#48a010"/><rect x="646" y="284" width="3.1" height="3.1" fill="#c09800"/><rect x="631" y="198" width="4" height="4" fill="#48a010"/><rect x="631" y="198" width="3.1" height="3.1" fill="#c09800"/><rect x="637" y="198" width="4" height="4" fill="#48a010"/><rect x="637" y="198" width="3.1" height="3.1" fill="#c09800"/><rect x="631" y="203" width="4" height="3" fill="#48a010"/><rect x="631" y="203" width="3.1" height="2.1" fill="#c09800"/><rect x="637" y="203" width="4" height="3" fill="#48a010"/><rect x="637" y="203" width="3.1" height="2.1" fill="#c09800"/><rect x="631" y="208" width="4" height="4" fill="#48a010"/><rect x="631" y="208" width="3.1" height="3.1" fill="#c09800"/><rect x="637" y="208" width="4" height="4" fill="#48a010"/><rect x="637" y="208" width="3.1" height="3.1" fill="#c09800"/><rect x="631" y="213" width="4" height="3" fill="#48a010"/><rect x="631" y="213" width="3.1" height="2.1" fill="#c09800"/><rect x="637" y="213" width="4" height="3" fill="#48a010"/><rect x="637" y="213" width="3.1" height="2.1" fill="#c09800"/><rect x="631" y="225" width="3" height="4" fill="#c09800"/><rect x="637" y="225" width="3" height="4" fill="#ff0000"/><rect x="647" y="203" width="8" height="2" fill="#c09800"/><rect x="647" y="206" width="8" height="2" fill="#c09800"/><rect x="647" y="210" width="8" height="2" fill="#c09800"/><rect x="647" y="213" width="8" height="2" fill="#c09800"/><rect x="647" y="216" width="8" height="2" fill="#c09800"/><rect x="647" y="220" width="8" height="2" fill="#c09800"/><rect x="647" y="223" width="8" height="2" fill="#c09800"/><rect x="645" y="184" width="4" height="5" fill="#c09800"/><rect x="650" y="184.5" width="5" height="4.5" fill="#c09800"/><rect x="614" y="297.8" width="6" height="6.2" fill="#c09800"/><rect x="627" y="297.8" width="5.5" height="6.2" fill="#c09800"/><rect x="482" y="109.5" width="16" height="28.5" fill="#ff0000"/><rect x="482" y="106.6" width="16" height="34.0" rx="8.0" ry="8.0" fill="#48a010"/><clipPath id="st482"><rect x="482" y="109.5" width="16" height="28.5"/></clipPath><rect x="482" y="106.6" width="16" height="34.0" rx="8.0" ry="8.0" fill="#c09800" clip-path="url(#st482)"/><rect x="828.6" y="246" width="16.600000000000023" height="29" fill="#ff0000"/><rect x="828.6" y="243.4" width="16.600000000000023" height="33.99999999999997" rx="8.300000000000011" ry="8.300000000000011" fill="#48a010"/><clipPath id="st828"><rect x="828.6" y="246" width="16.600000000000023" height="29"/></clipPath><rect x="828.6" y="243.4" width="16.600000000000023" height="33.99999999999997" rx="8.300000000000011" ry="8.300000000000011" fill="#c09800" clip-path="url(#st828)"/><rect x="655" y="205.7" width="17" height="18.9" fill="#c09800"/><rect x="655" y="199" width="2" height="5" fill="#f05010"/><rect x="655" y="227" width="2" height="5" fill="#c09800"/><rect x="658" y="199" width="2" height="5" fill="#c09800"/><rect x="658" y="227" width="2" height="5" fill="#f05010"/><rect x="661" y="199" width="2" height="5" fill="#f05010"/><rect x="661" y="227" width="2" height="5" fill="#c09800"/><rect x="664" y="199" width="2" height="5" fill="#c09800"/><rect x="664" y="227" width="2" height="5" fill="#f05010"/><rect x="667" y="199" width="2" height="5" fill="#f05010"/><rect x="667" y="227" width="2" height="5" fill="#c09800"/><rect x="670" y="199" width="2" height="5" fill="#c09800"/><rect x="670" y="227" width="2" height="5" fill="#f05010"/><rect x="673" y="199" width="2" height="5" fill="#f05010"/><rect x="673" y="227" width="2" height="5" fill="#c09800"/><rect x="674" y="204" width="6" height="2" fill="#f05010"/><rect x="674" y="207" width="6" height="2" fill="#c09800"/><rect x="674" y="210" width="6" height="2" fill="#c09800"/><rect x="674" y="213" width="6" height="2" fill="#f05010"/><rect x="674" y="216" width="6" height="2" fill="#c09800"/><rect x="674" y="220" width="6" height="2" fill="#c09800"/><rect x="674" y="223" width="6" height="2" fill="#f05010"/><rect x="674" y="226" width="6" height="2" fill="#c09800"/><rect x="657" y="184.5" width="4.5" height="5" fill="#48a010"/><rect x="657" y="184.5" width="3.6" height="4.1" fill="#c09800"/><rect x="662.5" y="184.5" width="4.5" height="5" fill="#48a010"/><rect x="662.5" y="184.5" width="3.6" height="4.1" fill="#c09800"/><rect x="671.6" y="184.5" width="4.5" height="5" fill="#48a010"/><rect x="671.6" y="184.5" width="3.6" height="4.1" fill="#c09800"/><rect x="677.1" y="184.5" width="4.5" height="5" fill="#48a010"/><rect x="677.1" y="184.5" width="3.6" height="4.1" fill="#c09800"/><rect x="685" y="184.5" width="4.5" height="5" fill="#48a010"/><rect x="685" y="184.5" width="3.6" height="4.1" fill="#c09800"/><rect x="690.5" y="184.5" width="4.5" height="5" fill="#48a010"/><rect x="690.5" y="184.5" width="3.6" height="4.1" fill="#c09800"/><rect x="701" y="186" width="7" height="6" fill="#48a010"/><rect x="701" y="186" width="6.1" height="5.1" fill="#c09800"/><rect x="710" y="186" width="7.7" height="6" fill="#48a010"/><rect x="710" y="186" width="6.8" height="5.1" fill="#c09800"/><rect x="681" y="190" width="4" height="4" fill="#48a010"/><rect x="681" y="190" width="3.1" height="3.1" fill="#c09800"/><rect x="687" y="190" width="4" height="4" fill="#48a010"/><rect x="687" y="190" width="3.1" height="3.1" fill="#c09800"/><rect x="693" y="190" width="4" height="4" fill="#48a010"/><rect x="693" y="190" width="3.1" height="3.1" fill="#c09800"/><rect x="680.7" y="195" width="4.5" height="6" fill="#48a010"/><rect x="680.7" y="195" width="3.6" height="5.1" fill="#c09800"/><rect x="686.7" y="195" width="4.5" height="6" fill="#48a010"/><rect x="686.7" y="195" width="3.6" height="5.1" fill="#c09800"/><rect x="692.7" y="195" width="4.5" height="6" fill="#48a010"/><rect x="692.7" y="195" width="3.6" height="5.1" fill="#c09800"/><rect x="698.7" y="195" width="4.5" height="6" fill="#48a010"/><rect x="698.7" y="195" width="3.6" height="5.1" fill="#c09800"/><rect x="704.7" y="195" width="4.5" height="6" fill="#48a010"/><rect x="704.7" y="195" width="3.6" height="5.1" fill="#c09800"/><rect x="688" y="205" width="9" height="7.5" fill="#c09800"/><rect x="700" y="205" width="9.4" height="7.5" fill="#c09800"/><rect x="700" y="205" width="9.4" height="1" fill="#ff0000"/><rect x="688" y="222.3" width="9" height="8.3" fill="#c09800"/><rect x="700" y="222.3" width="9.4" height="8.3" fill="#c09800"/><rect x="689" y="215" width="4" height="4" fill="#c09800"/><rect x="694" y="215" width="4" height="4" fill="#c09800"/><rect x="714" y="197.4" width="6" height="6.8" fill="#48a010"/><rect x="714" y="197.4" width="5.1" height="5.9" fill="#c09800"/><rect x="714" y="205.7" width="6" height="7.5" fill="#c09800"/><rect x="714" y="212.2" width="6" height="1" fill="#ff0000"/><rect x="714" y="220.8" width="6" height="6" fill="#48a010"/><rect x="714" y="220.8" width="5.1" height="5.1" fill="#c09800"/><rect x="714" y="229.8" width="6" height="6.8" fill="#48a010"/><rect x="714" y="229.8" width="5.1" height="5.9" fill="#c09800"/><rect x="724.8" y="197.4" width="6" height="6.8" fill="#48a010"/><rect x="724.8" y="197.4" width="5.1" height="5.9" fill="#c09800"/><rect x="724.8" y="205.7" width="6" height="7.5" fill="#c09800"/><rect x="724.8" y="212.2" width="6" height="1" fill="#ff0000"/><rect x="724.8" y="220.8" width="6" height="6" fill="#48a010"/><rect x="724.8" y="220.8" width="5.1" height="5.1" fill="#c09800"/><rect x="724.8" y="229.8" width="6" height="6.8" fill="#48a010"/><rect x="724.8" y="229.8" width="5.1" height="5.9" fill="#c09800"/><rect x="735" y="197.4" width="6" height="6.8" fill="#48a010"/><rect x="735" y="197.4" width="5.1" height="5.9" fill="#c09800"/><rect x="735" y="205.7" width="6" height="7.5" fill="#48a010"/><rect x="735" y="205.7" width="5.1" height="6.6" fill="#c09800"/><rect x="735" y="220.8" width="6" height="6" fill="#48a010"/><rect x="735" y="220.8" width="5.1" height="5.1" fill="#c09800"/><rect x="735" y="229.8" width="6" height="6.8" fill="#48a010"/><rect x="735" y="229.8" width="5.1" height="5.9" fill="#c09800"/><rect x="744" y="197.4" width="6" height="6.8" fill="#48a010"/><rect x="744" y="197.4" width="5.1" height="5.9" fill="#c09800"/><rect x="744" y="205.7" width="6" height="7.5" fill="#48a010"/><rect x="744" y="205.7" width="5.1" height="6.6" fill="#c09800"/><rect x="744" y="220.8" width="6" height="6" fill="#48a010"/><rect x="744" y="220.8" width="5.1" height="5.1" fill="#c09800"/><rect x="744" y="229.8" width="6" height="6.8" fill="#48a010"/><rect x="744" y="229.8" width="5.1" height="5.9" fill="#c09800"/><rect x="754.7" y="197.4" width="6" height="6.8" fill="#48a010"/><rect x="754.7" y="197.4" width="5.1" height="5.9" fill="#c09800"/><rect x="754.7" y="205.7" width="6" height="7.5" fill="#c09800"/><rect x="754.7" y="212.2" width="6" height="1" fill="#ff0000"/><rect x="754.7" y="220.8" width="6" height="6" fill="#c09800"/><rect x="754.7" y="220.8" width="1" height="6" fill="#ff0000"/><rect x="754.7" y="229.8" width="6" height="6.8" fill="#48a010"/><rect x="754.7" y="229.8" width="5.1" height="5.9" fill="#c09800"/><rect x="766" y="197.4" width="6" height="6.8" fill="#48a010"/><rect x="766" y="197.4" width="5.1" height="5.9" fill="#c09800"/><rect x="766" y="205.7" width="6" height="7.5" fill="#c09800"/><rect x="766" y="212.2" width="6" height="1" fill="#ff0000"/><rect x="766" y="220.8" width="6" height="6" fill="#48a010"/><rect x="766" y="220.8" width="5.1" height="5.1" fill="#c09800"/><rect x="766" y="229.8" width="6" height="6.8" fill="#48a010"/><rect x="766" y="229.8" width="5.1" height="5.9" fill="#c09800"/><rect x="776.5" y="197.4" width="6" height="6.8" fill="#48a010"/><rect x="776.5" y="197.4" width="5.1" height="5.9" fill="#c09800"/><rect x="776.5" y="205.7" width="6" height="7.5" fill="#48a010"/><rect x="776.5" y="205.7" width="5.1" height="6.6" fill="#c09800"/><rect x="776.5" y="220.8" width="6" height="6" fill="#48a010"/><rect x="776.5" y="220.8" width="5.1" height="5.1" fill="#c09800"/><rect x="776.5" y="229.8" width="6" height="6.8" fill="#48a010"/><rect x="776.5" y="229.8" width="5.1" height="5.9" fill="#c09800"/><rect x="786" y="202" width="4" height="5" fill="#48a010"/><rect x="791.5" y="202" width="4.5" height="5" fill="#48a010"/><rect x="797" y="201" width="10.5" height="5.5" fill="#48a010"/><rect x="797" y="201" width="9.6" height="4.6" fill="#c09800"/><rect x="797" y="207.9" width="10.5" height="5.5" fill="#48a010"/><rect x="797" y="207.9" width="9.6" height="4.6" fill="#c09800"/><rect x="797" y="214.8" width="10.5" height="5.5" fill="#48a010"/><rect x="797" y="214.8" width="9.6" height="4.6" fill="#c09800"/><rect x="797" y="221.7" width="10.5" height="5.5" fill="#48a010"/><rect x="797" y="221.7" width="9.6" height="4.6" fill="#c09800"/><rect x="786" y="226" width="4" height="5" fill="#48a010"/><rect x="791.5" y="226" width="4.5" height="4.6" fill="#48a010"/><rect x="808" y="183" width="17" height="13" fill="#c09800"/><rect x="808" y="234" width="17" height="11.7" fill="#c09800"/><rect x="655" y="238" width="4" height="4" fill="#48a010"/><rect x="655" y="238" width="3.1" height="3.1" fill="#c09800"/><rect x="660" y="238" width="5" height="4" fill="#48a010"/><rect x="660" y="238" width="4.1" height="3.1" fill="#c09800"/><rect x="666" y="238" width="4" height="4" fill="#48a010"/><rect x="666" y="238" width="3.1" height="3.1" fill="#c09800"/><rect x="672" y="238" width="4" height="4" fill="#48a010"/><rect x="672" y="238" width="3.1" height="3.1" fill="#c09800"/><rect x="677" y="238" width="4" height="4" fill="#48a010"/><rect x="677" y="238" width="3.1" height="3.1" fill="#c09800"/><rect x="682" y="238" width="5" height="4" fill="#48a010"/><rect x="682" y="238" width="4.1" height="3.1" fill="#c09800"/><rect x="655" y="242" width="4" height="4" fill="#48a010"/><rect x="655" y="242" width="3.1" height="3.1" fill="#c09800"/><rect x="660" y="242" width="5" height="4" fill="#48a010"/><rect x="660" y="242" width="4.1" height="3.1" fill="#c09800"/><rect x="666" y="242" width="4" height="4" fill="#48a010"/><rect x="666" y="242" width="3.1" height="3.1" fill="#c09800"/><rect x="672" y="242" width="4" height="4" fill="#48a010"/><rect x="672" y="242" width="3.1" height="3.1" fill="#c09800"/><rect x="677" y="242" width="4" height="4" fill="#48a010"/><rect x="677" y="242" width="3.1" height="3.1" fill="#c09800"/><rect x="682" y="242" width="5" height="4" fill="#48a010"/><rect x="682" y="242" width="4.1" height="3.1" fill="#c09800"/><rect x="655" y="250" width="4" height="4" fill="#48a010"/><rect x="655" y="250" width="3.1" height="3.1" fill="#c09800"/><rect x="661" y="250" width="4" height="4" fill="#48a010"/><rect x="661" y="250" width="3.1" height="3.1" fill="#c09800"/><rect x="667" y="250" width="4" height="4" fill="#48a010"/><rect x="667" y="250" width="3.1" height="3.1" fill="#c09800"/><rect x="673" y="250" width="4" height="4" fill="#48a010"/><rect x="673" y="250" width="3.1" height="3.1" fill="#c09800"/><rect x="655" y="255" width="4" height="4" fill="#48a010"/><rect x="655" y="255" width="3.1" height="3.1" fill="#c09800"/><rect x="661" y="255" width="4" height="4" fill="#48a010"/><rect x="661" y="255" width="3.1" height="3.1" fill="#c09800"/><rect x="667" y="255" width="4" height="4" fill="#48a010"/><rect x="667" y="255" width="3.1" height="3.1" fill="#c09800"/><rect x="673" y="255" width="4" height="4" fill="#48a010"/><rect x="673" y="255" width="3.1" height="3.1" fill="#c09800"/><rect x="695.8" y="240" width="6" height="6.5" fill="#48a010"/><rect x="695.8" y="240" width="5.1" height="5.6" fill="#c09800"/><rect x="707" y="240" width="6" height="6.5" fill="#48a010"/><rect x="707" y="240" width="5.1" height="5.6" fill="#c09800"/><rect x="695.8" y="249" width="5.2" height="5.8" fill="#c09800"/><rect x="707" y="249" width="6" height="6.5" fill="#48a010"/><rect x="707" y="249" width="5.1" height="5.6" fill="#c09800"/><rect x="720" y="242" width="9" height="9" fill="#48a010"/><rect x="720" y="242" width="8.1" height="8.1" fill="#c09800"/><rect x="720" y="254" width="8" height="9" fill="#c09800"/><rect x="720" y="262" width="8" height="1" fill="#ff0000"/><rect x="656" y="267" width="2" height="6" fill="#c09800"/><rect x="658" y="267" width="2" height="6" fill="#c09800"/><rect x="661" y="267" width="2" height="6" fill="#c09800"/><rect x="657" y="274" width="12" height="2" fill="#c09800"/><rect x="657" y="277" width="12" height="2" fill="#c09800"/><rect x="657" y="280" width="12" height="2" fill="#c09800"/><rect x="677" y="265" width="7.5" height="8" fill="#c09800"/><rect x="689" y="265" width="7" height="8" fill="#c09800"/><rect x="677" y="276.6" width="7.5" height="9.1" fill="#c09800"/><rect x="689" y="276.6" width="7" height="9.1" fill="#c09800"/><rect x="689" y="284.7" width="7" height="1" fill="#ff0000"/><rect x="699" y="267" width="4" height="3" fill="#c09800"/><rect x="699" y="272" width="4" height="5" fill="#c09800"/><rect x="717" y="265" width="3" height="4" fill="#c09800"/><rect x="722" y="265" width="4" height="4" fill="#c09800"/><rect x="714" y="272" width="9.7" height="9" fill="#48a010"/><rect x="714" y="272" width="8.8" height="8.1" fill="#c09800"/><rect x="727" y="272" width="8" height="8" fill="#c09800"/><rect x="717" y="283" width="4" height="4" fill="#c09800"/><rect x="724" y="283" width="4" height="4" fill="#48a010"/><rect x="724" y="283" width="3.1" height="3.1" fill="#c09800"/><rect x="717" y="290" width="4" height="7" fill="#c09800"/><rect x="717" y="296" width="4" height="1" fill="#ff0000"/><rect x="728" y="290" width="2" height="7" fill="#c09800"/><rect x="689" y="289" width="4" height="3" fill="#48a010"/><rect x="689" y="289" width="3.1" height="2.1" fill="#c09800"/><rect x="689" y="293" width="4" height="3" fill="#48a010"/><rect x="689" y="293" width="3.1" height="2.1" fill="#c09800"/><rect x="689" y="297" width="4" height="3" fill="#48a010"/><rect x="689" y="297" width="3.1" height="2.1" fill="#c09800"/><rect x="689" y="301" width="4" height="3" fill="#48a010"/><rect x="689" y="301" width="3.1" height="2.1" fill="#c09800"/><rect x="704" y="294" width="7.6" height="9" fill="#c09800"/><rect x="704" y="294" width="1" height="9" fill="#ff0000"/><rect x="751" y="262" width="12" height="22" fill="#c09800"/><rect x="762" y="262" width="1" height="22" fill="#ff0000"/><rect x="773" y="262" width="12" height="22" fill="#c09800"/><rect x="760" y="291" width="4" height="7" fill="#c09800"/><rect x="760" y="291" width="4" height="1" fill="#ff0000"/><rect x="765" y="291" width="3" height="7" fill="#c09800"/><rect x="765" y="291" width="3" height="1" fill="#ff0000"/><rect x="770" y="291" width="4" height="7" fill="#c09800"/><rect x="770" y="291" width="4" height="1" fill="#ff0000"/><rect x="783" y="285.7" width="9.4" height="9.1" fill="#48a010"/><rect x="783" y="285.7" width="8.5" height="8.2" fill="#c09800"/><rect x="795" y="285.7" width="8.7" height="8.3" fill="#c09800"/><rect x="795" y="293" width="8.7" height="1" fill="#ff0000"/><rect x="783" y="297.8" width="9.4" height="6.2" fill="#c09800"/><rect x="795" y="297.8" width="8.7" height="6.2" fill="#c09800"/><rect x="745.6" y="296" width="7.4" height="8" fill="#c09800"/><rect x="559" y="304" width="10.5" height="4.5" fill="#c09800"/><rect x="538.5" y="313" width="17.5" height="13" fill="#c09800"/><rect x="538.5" y="313" width="1" height="13" fill="#ff0000"/><rect x="573" y="314" width="5" height="4.5" fill="#48a010"/><rect x="573" y="319.5" width="5" height="4.5" fill="#48a010"/><rect x="588" y="308" width="7" height="8" fill="#48a010"/><rect x="588" y="308" width="6.1" height="7.1" fill="#c09800"/><rect x="582" y="321" width="7" height="9" fill="#48a010"/><rect x="582" y="321" width="6.1" height="8.1" fill="#c09800"/><rect x="593.6" y="321" width="7.4" height="9" fill="#48a010"/><rect x="593.6" y="321" width="6.5" height="8.1" fill="#c09800"/><rect x="613" y="304" width="7" height="4" fill="#c09800"/><rect x="625" y="304" width="7" height="4" fill="#c09800"/><rect x="613" y="311" width="7" height="9" fill="#c09800"/><rect x="613" y="311" width="7" height="1" fill="#ff0000"/><rect x="625" y="311" width="7" height="9" fill="#c09800"/><rect x="625" y="311" width="7" height="1" fill="#ff0000"/><rect x="636" y="304" width="15.7" height="12" fill="#c09800"/><rect x="665" y="304" width="16" height="12" fill="#c09800"/><rect x="665" y="304" width="1" height="12" fill="#ff0000"/><rect x="688.7" y="304" width="5.3" height="7" fill="#48a010"/><rect x="704" y="306" width="8" height="8.6" fill="#c09800"/><rect x="704" y="306" width="1" height="8.6" fill="#ff0000"/><rect x="692" y="323.6" width="8" height="6.1" fill="#48a010"/><rect x="692" y="323.6" width="7.1" height="5.2" fill="#c09800"/><rect x="701" y="323.6" width="8" height="6.1" fill="#48a010"/><rect x="701" y="323.6" width="7.1" height="5.2" fill="#c09800"/><rect x="562" y="344.8" width="9" height="4.5" fill="#48a010"/><rect x="562" y="344.8" width="8.1" height="3.6" fill="#c09800"/><rect x="575.5" y="344.8" width="9" height="4.5" fill="#48a010"/><rect x="575.5" y="344.8" width="8.1" height="3.6" fill="#c09800"/><rect x="594" y="345" width="4" height="4" fill="#c09800"/><rect x="599" y="345" width="4" height="4" fill="#c09800"/><circle cx="550.6" cy="351.6" r="6" fill="#48a010"/><circle cx="550.6" cy="351.6" r="5.2" fill="#c09800"/><rect x="564" y="353.8" width="4.5" height="18.2" fill="#c09800"/><rect x="564" y="353.8" width="1" height="18.2" fill="#ff0000"/><rect x="564" y="380.2" width="4.5" height="16.7" fill="#c09800"/><rect x="564" y="380.2" width="1" height="16.7" fill="#ff0000"/><rect x="571.2" y="353.8" width="4.5" height="18.2" fill="#c09800"/><rect x="571.2" y="380.2" width="4.5" height="16.7" fill="#c09800"/><rect x="578.5" y="353.8" width="4.5" height="18.2" fill="#c09800"/><rect x="578.5" y="380.2" width="4.5" height="16.7" fill="#c09800"/><rect x="585.8" y="353.8" width="4.5" height="18.2" fill="#c09800"/><rect x="585.8" y="380.2" width="4.5" height="16.7" fill="#c09800"/><rect x="593" y="353.8" width="4.5" height="18.2" fill="#c09800"/><rect x="593" y="353.8" width="1" height="18.2" fill="#ff0000"/><rect x="593" y="380.2" width="4.5" height="16.7" fill="#c09800"/><rect x="600.2" y="353.8" width="4.5" height="18.2" fill="#c09800"/><rect x="600.2" y="353.8" width="1" height="18.2" fill="#ff0000"/><rect x="600.2" y="380.2" width="4.5" height="16.7" fill="#c09800"/><rect x="607.5" y="353.8" width="4.5" height="18.2" fill="#c09800"/><rect x="607.5" y="380.2" width="4.5" height="16.7" fill="#c09800"/><rect x="614.8" y="353.8" width="4.5" height="18.2" fill="#c09800"/><rect x="614.8" y="380.2" width="4.5" height="16.7" fill="#c09800"/><rect x="622" y="353.8" width="4.5" height="18.2" fill="#c09800"/><rect x="622" y="380.2" width="4.5" height="16.7" fill="#c09800"/><rect x="629.2" y="353.8" width="4.5" height="18.2" fill="#c09800"/><rect x="629.2" y="380.2" width="4.5" height="16.7" fill="#c09800"/><rect x="636.5" y="353.8" width="4.5" height="18.2" fill="#c09800"/><rect x="636.5" y="380.2" width="4.5" height="16.7" fill="#c09800"/><rect x="643.8" y="353.8" width="4.5" height="18.2" fill="#c09800"/><rect x="643.8" y="380.2" width="4.5" height="16.7" fill="#c09800"/><rect x="651" y="353.8" width="4.5" height="18.2" fill="#c09800"/><rect x="651" y="380.2" width="4.5" height="16.7" fill="#c09800"/><rect x="658.2" y="353.8" width="4.5" height="18.2" fill="#c09800"/><rect x="658.2" y="353.8" width="1" height="18.2" fill="#ff0000"/><rect x="658.2" y="380.2" width="4.5" height="16.7" fill="#c09800"/><rect x="665.5" y="353.8" width="4.5" height="18.2" fill="#c09800"/><rect x="665.5" y="380.2" width="4.5" height="16.7" fill="#c09800"/><rect x="672.8" y="353.8" width="4.5" height="18.2" fill="#c09800"/><rect x="672.8" y="380.2" width="4.5" height="16.7" fill="#c09800"/><rect x="680" y="353.8" width="4.5" height="18.2" fill="#c09800"/><rect x="680" y="380.2" width="4.5" height="16.7" fill="#c09800"/><rect x="687.2" y="353.8" width="4.5" height="18.2" fill="#c09800"/><rect x="687.2" y="380.2" width="4.5" height="16.7" fill="#c09800"/><rect x="694.5" y="353.8" width="4.5" height="18.2" fill="#c09800"/><rect x="694.5" y="380.2" width="4.5" height="16.7" fill="#c09800"/><rect x="701.8" y="353.8" width="4.5" height="18.2" fill="#c09800"/><rect x="701.8" y="380.2" width="4.5" height="16.7" fill="#c09800"/><rect x="709" y="353.8" width="4.5" height="18.2" fill="#c09800"/><rect x="709" y="380.2" width="4.5" height="16.7" fill="#c09800"/><rect x="716.2" y="353.8" width="4.5" height="18.2" fill="#c09800"/><rect x="716.2" y="380.2" width="4.5" height="16.7" fill="#c09800"/><rect x="723.5" y="353.8" width="4.5" height="18.2" fill="#c09800"/><rect x="723.5" y="380.2" width="4.5" height="16.7" fill="#c09800"/><rect x="730.8" y="353.8" width="4.5" height="18.2" fill="#c09800"/><rect x="730.8" y="380.2" width="4.5" height="16.7" fill="#c09800"/><rect x="738" y="353.8" width="4.5" height="18.2" fill="#c09800"/><rect x="738" y="380.2" width="4.5" height="16.7" fill="#c09800"/><path d="M515 347.5 H542 V368.5 H531" fill="none" stroke="#c09800" stroke-width="1.6"/><rect x="516.6" y="352" width="8.4" height="13" fill="#c09800"/><rect x="528.7" y="352" width="9" height="13" fill="#c09800"/><circle cx="557.8" cy="375.7" r="3" fill="#48a010"/><rect x="515" y="375" width="4.5" height="4.5" fill="#c09800"/><rect x="520.5" y="375" width="4.5" height="4.5" fill="#c09800"/><rect x="528" y="375.7" width="5" height="6.1" fill="#c09800"/><rect x="515" y="391" width="23.5" height="24.7" fill="#c09800"/><rect x="515" y="383" width="2" height="6" fill="#c09800"/><rect x="519" y="383" width="2" height="6" fill="#c09800"/><rect x="523" y="383" width="2" height="6" fill="#c09800"/><rect x="527" y="383" width="2" height="6" fill="#c09800"/><rect x="531" y="383" width="2" height="6" fill="#c09800"/><rect x="534" y="383" width="2" height="6" fill="#c09800"/><rect x="515" y="417" width="2" height="7" fill="#c09800"/><rect x="519" y="417" width="2" height="7" fill="#c09800"/><rect x="523" y="417" width="2" height="7" fill="#c09800"/><rect x="527" y="417" width="2" height="7" fill="#c09800"/><rect x="531" y="417" width="2" height="7" fill="#c09800"/><rect x="534" y="417" width="2" height="7" fill="#c09800"/><rect x="542" y="385" width="6" height="4" fill="#48a010"/><rect x="542" y="385" width="5.1" height="3.1" fill="#c09800"/><rect x="542" y="391" width="6" height="4" fill="#48a010"/><rect x="542" y="391" width="5.1" height="3.1" fill="#c09800"/><rect x="542" y="397" width="6" height="4" fill="#48a010"/><rect x="542" y="397" width="5.1" height="3.1" fill="#c09800"/><rect x="542" y="404" width="6" height="4" fill="#48a010"/><rect x="542" y="404" width="5.1" height="3.1" fill="#c09800"/><rect x="542" y="410" width="6" height="4" fill="#48a010"/><rect x="542" y="410" width="5.1" height="3.1" fill="#c09800"/><rect x="542" y="416" width="6" height="4" fill="#48a010"/><rect x="542" y="416" width="5.1" height="3.1" fill="#c09800"/><rect x="579" y="409" width="4" height="4" fill="#c09800"/><rect x="579" y="415" width="4" height="4" fill="#c09800"/><rect x="592" y="409" width="5" height="4" fill="#48a010"/><rect x="592" y="409" width="4.1" height="3.1" fill="#c09800"/><rect x="592" y="415" width="5" height="4" fill="#c09800"/><rect x="641" y="407" width="2" height="2" fill="#48a010"/><rect x="649" y="407" width="2" height="2" fill="#48a010"/><rect x="673" y="407" width="2" height="2" fill="#48a010"/><rect x="639.7" y="420" width="8.3" height="9" fill="#c09800"/><rect x="639.7" y="420" width="8.3" height="1" fill="#ff0000"/><rect x="651.7" y="420" width="9.9" height="9" fill="#48a010"/><rect x="651.7" y="420" width="9" height="8.1" fill="#c09800"/><rect x="662" y="425" width="5.6" height="6" fill="#48a010"/><rect x="634" y="427" width="4" height="3" fill="#c09800"/><rect x="717" y="307" width="4" height="7" fill="#c09800"/><rect x="722" y="307" width="4" height="7" fill="#f05010"/><rect x="728" y="307" width="4" height="7" fill="#c09800"/><rect x="723" y="318" width="3" height="4" fill="#c09800"/><rect x="728" y="317" width="5" height="6" fill="#48a010"/><rect x="728" y="317" width="4.1" height="5.1" fill="#c09800"/><rect x="745.8" y="308" width="7.1" height="8" fill="#c09800"/><rect x="760" y="308" width="4" height="8" fill="#ff0000"/><rect x="760.8" y="308.8" width="2.4" height="6.4" fill="#c09800"/><rect x="771" y="308" width="4" height="8" fill="#c09800"/><rect x="771" y="308" width="1" height="8" fill="#ff0000"/><rect x="783" y="304" width="9" height="2" fill="#c09800"/><rect x="795" y="304" width="9" height="2" fill="#f05010"/><rect x="783" y="310" width="9" height="6.8" fill="#c09800"/><rect x="795" y="310" width="8.8" height="6.8" fill="#c09800"/><rect x="760" y="320" width="4" height="4" fill="#48a010"/><rect x="760" y="320" width="3.1" height="3.1" fill="#c09800"/><rect x="766" y="320" width="3" height="4" fill="#48a010"/><rect x="766" y="320" width="2.1" height="3.1" fill="#c09800"/><rect x="771" y="320" width="4" height="4" fill="#48a010"/><rect x="771" y="320" width="3.1" height="3.1" fill="#c09800"/><rect x="776" y="320" width="4" height="4" fill="#48a010"/><rect x="776" y="320" width="3.1" height="3.1" fill="#c09800"/><rect x="782" y="320" width="4" height="4" fill="#48a010"/><rect x="782" y="320" width="3.1" height="3.1" fill="#c09800"/><rect x="788" y="320" width="3" height="4" fill="#48a010"/><rect x="788" y="320" width="2.1" height="3.1" fill="#c09800"/><rect x="760" y="326" width="4" height="4" fill="#48a010"/><rect x="760" y="326" width="3.1" height="3.1" fill="#c09800"/><rect x="766" y="326" width="3" height="4" fill="#48a010"/><rect x="766" y="326" width="2.1" height="3.1" fill="#c09800"/><rect x="771" y="326" width="4" height="4" fill="#48a010"/><rect x="771" y="326" width="3.1" height="3.1" fill="#c09800"/><rect x="776" y="326" width="4" height="4" fill="#48a010"/><rect x="776" y="326" width="3.1" height="3.1" fill="#c09800"/><rect x="782" y="326" width="4" height="4" fill="#48a010"/><rect x="782" y="326" width="3.1" height="3.1" fill="#c09800"/><rect x="788" y="326" width="3" height="4" fill="#48a010"/><rect x="788" y="326" width="2.1" height="3.1" fill="#c09800"/><rect x="794" y="320" width="18" height="12" fill="#c09800"/><circle cx="756" cy="351.4" r="6" fill="#48a010"/><circle cx="756" cy="351.4" r="5.2" fill="#c09800"/><path d="M773.5 368.7 H764 V348.2 H807.8 V368.7 H797" fill="none" stroke="#c09800" stroke-width="1.8"/><rect x="768" y="352" width="9.8" height="12.6" fill="#c09800"/><rect x="782" y="352" width="8" height="12.6" fill="#c09800"/><rect x="794" y="352" width="9" height="12.6" fill="#c09800"/><circle cx="826.8" cy="363.5" r="6" fill="#48a010"/><circle cx="826.8" cy="363.5" r="5.2" fill="#c09800"/><circle cx="749.9" cy="376.3" r="4" fill="#48a010"/><rect x="768" y="380" width="4" height="4" fill="#48a010"/><rect x="768" y="380" width="3.1" height="3.1" fill="#c09800"/><rect x="774" y="380" width="4" height="4" fill="#48a010"/><rect x="774" y="380" width="3.1" height="3.1" fill="#c09800"/><rect x="780" y="380" width="4" height="4" fill="#48a010"/><rect x="780" y="380" width="3.1" height="3.1" fill="#c09800"/><rect x="785" y="380" width="5" height="4" fill="#48a010"/><rect x="785" y="380" width="4.1" height="3.1" fill="#c09800"/><rect x="768" y="385" width="4" height="4" fill="#48a010"/><rect x="768" y="385" width="3.1" height="3.1" fill="#c09800"/><rect x="774" y="385" width="4" height="4" fill="#48a010"/><rect x="774" y="385" width="3.1" height="3.1" fill="#c09800"/><rect x="780" y="385" width="4" height="4" fill="#48a010"/><rect x="780" y="385" width="3.1" height="3.1" fill="#c09800"/><rect x="785" y="385" width="5" height="4" fill="#48a010"/><rect x="785" y="385" width="4.1" height="3.1" fill="#c09800"/><rect x="624" y="460" width="3" height="3" fill="#c09800"/><rect x="629" y="460" width="3" height="3" fill="#c09800"/><rect x="634" y="460" width="2" height="3" fill="#c09800"/><rect x="638" y="460" width="3" height="3" fill="#c09800"/><rect x="643" y="460" width="3" height="3" fill="#c09800"/><rect x="648" y="460" width="2" height="3" fill="#48a010"/><rect x="652" y="460" width="3" height="3" fill="#48a010"/><rect x="657" y="460" width="2" height="3" fill="#c09800"/><rect x="661" y="460" width="3" height="3" fill="#c09800"/><rect x="666" y="460" width="2" height="3" fill="#c09800"/><rect x="670" y="460" width="3" height="3" fill="#c09800"/><rect x="675" y="460" width="3" height="3" fill="#c09800"/><rect x="680" y="460" width="2" height="3" fill="#c09800"/><rect x="684" y="460" width="3" height="3" fill="#c09800"/><rect x="689" y="460" width="3" height="3" fill="#c09800"/><rect x="694" y="460" width="2" height="3" fill="#c09800"/><rect x="698" y="460" width="3" height="3" fill="#c09800"/><rect x="624" y="465" width="3" height="2" fill="#c09800"/><rect x="629" y="465" width="3" height="2" fill="#c09800"/><rect x="634" y="465" width="2" height="2" fill="#c09800"/><rect x="638" y="465" width="3" height="2" fill="#c09800"/><rect x="643" y="465" width="3" height="2" fill="#48a010"/><rect x="648" y="465" width="2" height="2" fill="#c09800"/><rect x="652" y="465" width="3" height="2" fill="#c09800"/><rect x="657" y="465" width="2" height="2" fill="#c09800"/><rect x="661" y="465" width="3" height="2" fill="#48a010"/><rect x="666" y="465" width="2" height="2" fill="#c09800"/><rect x="670" y="465" width="3" height="2" fill="#c09800"/><rect x="675" y="465" width="3" height="2" fill="#c09800"/><rect x="680" y="465" width="2" height="2" fill="#c09800"/><rect x="684" y="465" width="3" height="2" fill="#c09800"/><rect x="689" y="465" width="3" height="2" fill="#c09800"/><rect x="694" y="465" width="2" height="2" fill="#c09800"/><rect x="698" y="465" width="3" height="2" fill="#c09800"/><rect x="624" y="469" width="3" height="3" fill="#c09800"/><rect x="629" y="469" width="3" height="3" fill="#c09800"/><rect x="634" y="469" width="2" height="3" fill="#c09800"/><rect x="638" y="469" width="3" height="3" fill="#48a010"/><rect x="643" y="469" width="3" height="3" fill="#48a010"/><rect x="648" y="469" width="2" height="3" fill="#c09800"/><rect x="652" y="469" width="3" height="3" fill="#c09800"/><rect x="657" y="469" width="2" height="3" fill="#c09800"/><rect x="661" y="469" width="3" height="3" fill="#c09800"/><rect x="666" y="469" width="2" height="3" fill="#c09800"/><rect x="670" y="469" width="3" height="3" fill="#c09800"/><rect x="675" y="469" width="3" height="3" fill="#c09800"/><rect x="680" y="469" width="2" height="3" fill="#c09800"/><rect x="684" y="469" width="3" height="3" fill="#c09800"/><rect x="689" y="469" width="3" height="3" fill="#c09800"/><rect x="694" y="469" width="2" height="3" fill="#c09800"/><rect x="698" y="469" width="3" height="3" fill="#c09800"/><rect x="624" y="474" width="3" height="2" fill="#c09800"/><rect x="629" y="474" width="3" height="2" fill="#c09800"/><rect x="634" y="474" width="2" height="2" fill="#c09800"/><rect x="638" y="474" width="3" height="2" fill="#c09800"/><rect x="643" y="474" width="3" height="2" fill="#c09800"/><rect x="648" y="474" width="2" height="2" fill="#c09800"/><rect x="652" y="474" width="3" height="2" fill="#c09800"/><rect x="657" y="474" width="2" height="2" fill="#c09800"/><rect x="661" y="474" width="3" height="2" fill="#c09800"/><rect x="666" y="474" width="2" height="2" fill="#c09800"/><rect x="670" y="474" width="3" height="2" fill="#c09800"/><rect x="675" y="474" width="3" height="2" fill="#c09800"/><rect x="680" y="474" width="2" height="2" fill="#c09800"/><rect x="684" y="474" width="3" height="2" fill="#c09800"/><rect x="689" y="474" width="3" height="2" fill="#48a010"/><rect x="694" y="474" width="2" height="2" fill="#c09800"/><rect x="698" y="474" width="3" height="2" fill="#c09800"/><rect x="624" y="478" width="3" height="3" fill="#48a010"/><rect x="629" y="478" width="3" height="3" fill="#c09800"/><rect x="634" y="478" width="2" height="3" fill="#c09800"/><rect x="638" y="478" width="3" height="3" fill="#c09800"/><rect x="684" y="478" width="3" height="3" fill="#c09800"/><rect x="689" y="478" width="3" height="3" fill="#c09800"/><rect x="694" y="478" width="2" height="3" fill="#c09800"/><rect x="698" y="478" width="3" height="3" fill="#48a010"/><rect x="624" y="483" width="3" height="3" fill="#c09800"/><rect x="629" y="483" width="3" height="3" fill="#48a010"/><rect x="634" y="483" width="2" height="3" fill="#c09800"/><rect x="638" y="483" width="3" height="3" fill="#c09800"/><rect x="684" y="483" width="3" height="3" fill="#c09800"/><rect x="689" y="483" width="3" height="3" fill="#c09800"/><rect x="694" y="483" width="2" height="3" fill="#c09800"/><rect x="698" y="483" width="3" height="3" fill="#c09800"/><rect x="624" y="488" width="3" height="2" fill="#c09800"/><rect x="629" y="488" width="3" height="2" fill="#48a010"/><rect x="634" y="488" width="2" height="2" fill="#c09800"/><rect x="638" y="488" width="3" height="2" fill="#48a010"/><rect x="684" y="488" width="3" height="2" fill="#c09800"/><rect x="689" y="488" width="3" height="2" fill="#c09800"/><rect x="694" y="488" width="2" height="2" fill="#c09800"/><rect x="698" y="488" width="3" height="2" fill="#c09800"/><rect x="624" y="492" width="3" height="3" fill="#48a010"/><rect x="629" y="492" width="3" height="3" fill="#c09800"/><rect x="634" y="492" width="2" height="3" fill="#c09800"/><rect x="638" y="492" width="3" height="3" fill="#c09800"/><rect x="684" y="492" width="3" height="3" fill="#c09800"/><rect x="689" y="492" width="3" height="3" fill="#c09800"/><rect x="694" y="492" width="2" height="3" fill="#c09800"/><rect x="698" y="492" width="3" height="3" fill="#c09800"/><rect x="624" y="497" width="3" height="2" fill="#c09800"/><rect x="629" y="497" width="3" height="2" fill="#c09800"/><rect x="634" y="497" width="2" height="2" fill="#c09800"/><rect x="638" y="497" width="3" height="2" fill="#c09800"/><rect x="684" y="497" width="3" height="2" fill="#c09800"/><rect x="689" y="497" width="3" height="2" fill="#c09800"/><rect x="694" y="497" width="2" height="2" fill="#c09800"/><rect x="698" y="497" width="3" height="2" fill="#c09800"/><rect x="624" y="501" width="3" height="3" fill="#c09800"/><rect x="629" y="501" width="3" height="3" fill="#c09800"/><rect x="634" y="501" width="2" height="3" fill="#c09800"/><rect x="638" y="501" width="3" height="3" fill="#c09800"/><rect x="684" y="501" width="3" height="3" fill="#c09800"/><rect x="689" y="501" width="3" height="3" fill="#48a010"/><rect x="694" y="501" width="2" height="3" fill="#c09800"/><rect x="698" y="501" width="3" height="3" fill="#c09800"/><rect x="624" y="506" width="3" height="3" fill="#48a010"/><rect x="629" y="506" width="3" height="3" fill="#c09800"/><rect x="634" y="506" width="2" height="3" fill="#c09800"/><rect x="638" y="506" width="3" height="3" fill="#48a010"/><rect x="684" y="506" width="3" height="3" fill="#c09800"/><rect x="689" y="506" width="3" height="3" fill="#c09800"/><rect x="694" y="506" width="2" height="3" fill="#c09800"/><rect x="698" y="506" width="3" height="3" fill="#c09800"/><rect x="624" y="511" width="3" height="2" fill="#c09800"/><rect x="629" y="511" width="3" height="2" fill="#c09800"/><rect x="634" y="511" width="2" height="2" fill="#48a010"/><rect x="638" y="511" width="3" height="2" fill="#48a010"/><rect x="684" y="511" width="3" height="2" fill="#c09800"/><rect x="689" y="511" width="3" height="2" fill="#c09800"/><rect x="694" y="511" width="2" height="2" fill="#c09800"/><rect x="698" y="511" width="3" height="2" fill="#c09800"/><rect x="624" y="515" width="3" height="3" fill="#c09800"/><rect x="629" y="515" width="3" height="3" fill="#c09800"/><rect x="634" y="515" width="2" height="3" fill="#c09800"/><rect x="638" y="515" width="3" height="3" fill="#c09800"/><rect x="684" y="515" width="3" height="3" fill="#c09800"/><rect x="689" y="515" width="3" height="3" fill="#c09800"/><rect x="694" y="515" width="2" height="3" fill="#c09800"/><rect x="698" y="515" width="3" height="3" fill="#c09800"/><rect x="624" y="520" width="3" height="2" fill="#c09800"/><rect x="629" y="520" width="3" height="2" fill="#48a010"/><rect x="634" y="520" width="2" height="2" fill="#c09800"/><rect x="638" y="520" width="3" height="2" fill="#c09800"/><rect x="643" y="520" width="3" height="2" fill="#c09800"/><rect x="648" y="520" width="2" height="2" fill="#c09800"/><rect x="652" y="520" width="3" height="2" fill="#c09800"/><rect x="657" y="520" width="2" height="2" fill="#c09800"/><rect x="661" y="520" width="3" height="2" fill="#c09800"/><rect x="666" y="520" width="2" height="2" fill="#c09800"/><rect x="670" y="520" width="3" height="2" fill="#c09800"/><rect x="675" y="520" width="3" height="2" fill="#48a010"/><rect x="680" y="520" width="2" height="2" fill="#c09800"/><rect x="684" y="520" width="3" height="2" fill="#c09800"/><rect x="689" y="520" width="3" height="2" fill="#c09800"/><rect x="694" y="520" width="2" height="2" fill="#c09800"/><rect x="698" y="520" width="3" height="2" fill="#c09800"/><rect x="624" y="524" width="3" height="3" fill="#c09800"/><rect x="629" y="524" width="3" height="3" fill="#c09800"/><rect x="634" y="524" width="2" height="3" fill="#c09800"/><rect x="638" y="524" width="3" height="3" fill="#c09800"/><rect x="643" y="524" width="3" height="3" fill="#c09800"/><rect x="648" y="524" width="2" height="3" fill="#c09800"/><rect x="652" y="524" width="3" height="3" fill="#48a010"/><rect x="657" y="524" width="2" height="3" fill="#c09800"/><rect x="661" y="524" width="3" height="3" fill="#c09800"/><rect x="666" y="524" width="2" height="3" fill="#c09800"/><rect x="670" y="524" width="3" height="3" fill="#c09800"/><rect x="675" y="524" width="3" height="3" fill="#c09800"/><rect x="680" y="524" width="2" height="3" fill="#c09800"/><rect x="684" y="524" width="3" height="3" fill="#c09800"/><rect x="689" y="524" width="3" height="3" fill="#c09800"/><rect x="694" y="524" width="2" height="3" fill="#c09800"/><rect x="698" y="524" width="3" height="3" fill="#c09800"/><rect x="624" y="529" width="3" height="3" fill="#48a010"/><rect x="629" y="529" width="3" height="3" fill="#c09800"/><rect x="634" y="529" width="2" height="3" fill="#c09800"/><rect x="638" y="529" width="3" height="3" fill="#c09800"/><rect x="643" y="529" width="3" height="3" fill="#c09800"/><rect x="648" y="529" width="2" height="3" fill="#c09800"/><rect x="652" y="529" width="3" height="3" fill="#c09800"/><rect x="657" y="529" width="2" height="3" fill="#c09800"/><rect x="661" y="529" width="3" height="3" fill="#c09800"/><rect x="666" y="529" width="2" height="3" fill="#c09800"/><rect x="670" y="529" width="3" height="3" fill="#48a010"/><rect x="675" y="529" width="3" height="3" fill="#c09800"/><rect x="680" y="529" width="2" height="3" fill="#c09800"/><rect x="684" y="529" width="3" height="3" fill="#c09800"/><rect x="689" y="529" width="3" height="3" fill="#c09800"/><rect x="694" y="529" width="2" height="3" fill="#c09800"/><rect x="698" y="529" width="3" height="3" fill="#c09800"/><rect x="624" y="534" width="3" height="2" fill="#c09800"/><rect x="629" y="534" width="3" height="2" fill="#c09800"/><rect x="634" y="534" width="2" height="2" fill="#c09800"/><rect x="638" y="534" width="3" height="2" fill="#c09800"/><rect x="643" y="534" width="3" height="2" fill="#c09800"/><rect x="648" y="534" width="2" height="2" fill="#c09800"/><rect x="652" y="534" width="3" height="2" fill="#c09800"/><rect x="657" y="534" width="2" height="2" fill="#c09800"/><rect x="661" y="534" width="3" height="2" fill="#48a010"/><rect x="666" y="534" width="2" height="2" fill="#c09800"/><rect x="670" y="534" width="3" height="2" fill="#c09800"/><rect x="675" y="534" width="3" height="2" fill="#c09800"/><rect x="680" y="534" width="2" height="2" fill="#48a010"/><rect x="684" y="534" width="3" height="2" fill="#c09800"/><rect x="689" y="534" width="3" height="2" fill="#c09800"/><rect x="694" y="534" width="2" height="2" fill="#c09800"/><rect x="698" y="534" width="3" height="2" fill="#c09800"/><rect x="656" y="492" width="3" height="3" fill="#c09800"/><rect x="661" y="492" width="3" height="3" fill="#c09800"/><rect x="666" y="492" width="2" height="3" fill="#c09800"/><rect x="656" y="497" width="3" height="3" fill="#c09800"/><rect x="661" y="497" width="3" height="3" fill="#c09800"/><rect x="666" y="497" width="2" height="3" fill="#c09800"/><rect x="656" y="502" width="3" height="2" fill="#c09800"/><rect x="661" y="502" width="3" height="2" fill="#c09800"/><rect x="666" y="502" width="2" height="2" fill="#c09800"/><rect x="666" y="497" width="2" height="2" fill="#ff0000"/><rect x="666" y="501" width="2" height="2" fill="#ff0000"/><rect x="515.6" y="426.7" width="4.5" height="5" fill="#48a010"/><rect x="515.6" y="426.7" width="3.6" height="4.1" fill="#c09800"/><rect x="521.8" y="426.7" width="4.5" height="5" fill="#48a010"/><rect x="521.8" y="426.7" width="3.6" height="4.1" fill="#c09800"/><rect x="528" y="426.7" width="4.5" height="5" fill="#48a010"/><rect x="528" y="426.7" width="3.6" height="4.1" fill="#c09800"/><rect x="534.2" y="426.7" width="4.5" height="5" fill="#48a010"/><rect x="534.2" y="426.7" width="3.6" height="4.1" fill="#c09800"/><rect x="520" y="435" width="2" height="2" fill="#48a010"/><rect x="521" y="442" width="4" height="4" fill="#c09800"/><rect x="530" y="442" width="4" height="4" fill="#c09800"/><rect x="537.5" y="438" width="6" height="6" fill="#c09800"/><rect x="515" y="446" width="4" height="6" fill="#c09800"/><rect x="521" y="447.8" width="5" height="5.2" fill="#48a010"/><rect x="521" y="447.8" width="4.1" height="4.3" fill="#c09800"/><rect x="530" y="447.8" width="5" height="5.2" fill="#48a010"/><rect x="530" y="447.8" width="4.1" height="4.3" fill="#c09800"/><rect x="538" y="447" width="6" height="7" fill="#c09800"/><rect x="515" y="466.7" width="18" height="18.9" fill="#c09800"/><rect x="516" y="460" width="2" height="5" fill="#c09800"/><rect x="518" y="460" width="2" height="5" fill="#c09800"/><rect x="521" y="460" width="2" height="5" fill="#c09800"/><rect x="524" y="460" width="2" height="5" fill="#c09800"/><rect x="527" y="460" width="2" height="5" fill="#c09800"/><rect x="530" y="460" width="2" height="5" fill="#c09800"/><rect x="533" y="460" width="2" height="5" fill="#c09800"/><rect x="516" y="488" width="2" height="7" fill="#c09800"/><rect x="518" y="488" width="2" height="7" fill="#c09800"/><rect x="521" y="488" width="2" height="7" fill="#c09800"/><rect x="524" y="488" width="2" height="7" fill="#c09800"/><rect x="527" y="488" width="2" height="7" fill="#c09800"/><rect x="530" y="488" width="2" height="7" fill="#c09800"/><rect x="533" y="488" width="2" height="7" fill="#c09800"/><rect x="535" y="466" width="7" height="2" fill="#c09800"/><rect x="535" y="469" width="7" height="2" fill="#f05010"/><rect x="535" y="472" width="7" height="2" fill="#c09800"/><rect x="535" y="476" width="7" height="2" fill="#c09800"/><rect x="535" y="479" width="7" height="2" fill="#f05010"/><rect x="535" y="482" width="7" height="2" fill="#c09800"/><rect x="535" y="485" width="7" height="2" fill="#c09800"/><rect x="545.8" y="466" width="7.5" height="5.2" fill="#c09800"/><rect x="554.8" y="466" width="7.6" height="6" fill="#c09800"/><rect x="554.8" y="466" width="7.6" height="1" fill="#ff0000"/><rect x="545.8" y="475.8" width="7.5" height="6" fill="#c09800"/><rect x="554.8" y="475.8" width="7.6" height="6" fill="#c09800"/><rect x="554.8" y="475.8" width="7.6" height="1" fill="#ff0000"/><rect x="548" y="485" width="4" height="4" fill="#48a010"/><rect x="548" y="485" width="3.1" height="3.1" fill="#c09800"/><rect x="554" y="485" width="4" height="4" fill="#48a010"/><rect x="554" y="485" width="3.1" height="3.1" fill="#c09800"/><rect x="548" y="491" width="4" height="4" fill="#48a010"/><rect x="548" y="491" width="3.1" height="3.1" fill="#c09800"/><rect x="554" y="491" width="4" height="4" fill="#48a010"/><rect x="554" y="491" width="3.1" height="3.1" fill="#c09800"/><rect x="564.6" y="448.6" width="4.5" height="4.5" fill="#48a010"/><rect x="564.6" y="448.6" width="3.6" height="3.6" fill="#c09800"/><rect x="570.6" y="448.6" width="4.5" height="4.5" fill="#48a010"/><rect x="570.6" y="448.6" width="3.6" height="3.6" fill="#c09800"/><rect x="564.6" y="454.7" width="4.5" height="4.5" fill="#48a010"/><rect x="564.6" y="454.7" width="3.6" height="3.6" fill="#c09800"/><rect x="570.6" y="454.7" width="4.5" height="4.5" fill="#48a010"/><rect x="570.6" y="454.7" width="3.6" height="3.6" fill="#c09800"/><rect x="564.6" y="460.8" width="4.5" height="4.5" fill="#48a010"/><rect x="564.6" y="460.8" width="3.6" height="3.6" fill="#c09800"/><rect x="570.6" y="460.8" width="4.5" height="4.5" fill="#48a010"/><rect x="570.6" y="460.8" width="3.6" height="3.6" fill="#c09800"/><rect x="564.6" y="466.9" width="4.5" height="4.5" fill="#48a010"/><rect x="564.6" y="466.9" width="3.6" height="3.6" fill="#c09800"/><rect x="570.6" y="466.9" width="4.5" height="4.5" fill="#48a010"/><rect x="570.6" y="466.9" width="3.6" height="3.6" fill="#c09800"/><rect x="564.6" y="473" width="4.5" height="4.5" fill="#48a010"/><rect x="564.6" y="473" width="3.6" height="3.6" fill="#c09800"/><rect x="570.6" y="473" width="4.5" height="4.5" fill="#48a010"/><rect x="570.6" y="473" width="3.6" height="3.6" fill="#c09800"/><rect x="564.6" y="479.1" width="4.5" height="4.5" fill="#48a010"/><rect x="564.6" y="479.1" width="3.6" height="3.6" fill="#c09800"/><rect x="570.6" y="479.1" width="4.5" height="4.5" fill="#48a010"/><rect x="570.6" y="479.1" width="3.6" height="3.6" fill="#c09800"/><rect x="564.6" y="485.2" width="4.5" height="4.5" fill="#48a010"/><rect x="564.6" y="485.2" width="3.6" height="3.6" fill="#c09800"/><rect x="570.6" y="485.2" width="4.5" height="4.5" fill="#48a010"/><rect x="570.6" y="485.2" width="3.6" height="3.6" fill="#c09800"/><rect x="578" y="436" width="5" height="5" fill="#48a010"/><rect x="578" y="436" width="4.1" height="4.1" fill="#c09800"/><rect x="584" y="436" width="4" height="5" fill="#48a010"/><rect x="584" y="436" width="3.1" height="4.1" fill="#c09800"/><rect x="578" y="443" width="5" height="4" fill="#48a010"/><rect x="578" y="443" width="4.1" height="3.1" fill="#c09800"/><rect x="584" y="443" width="4" height="4" fill="#48a010"/><rect x="584" y="443" width="3.1" height="3.1" fill="#c09800"/><rect x="578" y="450" width="5" height="4" fill="#48a010"/><rect x="578" y="450" width="4.1" height="3.1" fill="#c09800"/><rect x="584" y="450" width="4" height="4" fill="#48a010"/><rect x="584" y="450" width="3.1" height="3.1" fill="#c09800"/><rect x="578" y="456" width="5" height="4" fill="#48a010"/><rect x="578" y="456" width="4.1" height="3.1" fill="#c09800"/><rect x="584" y="456" width="4" height="4" fill="#48a010"/><rect x="584" y="456" width="3.1" height="3.1" fill="#c09800"/><rect x="578" y="462" width="5" height="5" fill="#48a010"/><rect x="578" y="462" width="4.1" height="4.1" fill="#c09800"/><rect x="584" y="462" width="4" height="5" fill="#48a010"/><rect x="584" y="462" width="3.1" height="4.1" fill="#c09800"/><rect x="591.8" y="436.5" width="4.6" height="4.5" fill="#48a010"/><rect x="591.8" y="436.5" width="3.7" height="3.6" fill="#c09800"/><rect x="598" y="436.5" width="4.6" height="4.5" fill="#48a010"/><rect x="598" y="436.5" width="3.7" height="3.6" fill="#c09800"/><rect x="591.8" y="443" width="4.6" height="4.5" fill="#48a010"/><rect x="591.8" y="443" width="3.7" height="3.6" fill="#c09800"/><rect x="598" y="443" width="4.6" height="4.5" fill="#48a010"/><rect x="598" y="443" width="3.7" height="3.6" fill="#c09800"/><rect x="591.8" y="449.5" width="4.6" height="4.5" fill="#48a010"/><rect x="591.8" y="449.5" width="3.7" height="3.6" fill="#c09800"/><rect x="598" y="449.5" width="4.6" height="4.5" fill="#48a010"/><rect x="598" y="449.5" width="3.7" height="3.6" fill="#c09800"/><rect x="592.6" y="460" width="4.6" height="4.5" fill="#c09800"/><rect x="592.6" y="460" width="4.6" height="1" fill="#ff0000"/><rect x="598.6" y="460" width="4.6" height="4.5" fill="#c09800"/><rect x="598.6" y="460" width="4.6" height="1" fill="#ff0000"/><rect x="592.6" y="466.2" width="4.6" height="4.5" fill="#c09800"/><rect x="592.6" y="466.2" width="4.6" height="1" fill="#ff0000"/><rect x="598.6" y="466.2" width="4.6" height="4.5" fill="#c09800"/><rect x="598.6" y="466.2" width="4.6" height="1" fill="#ff0000"/><rect x="592.6" y="472.4" width="4.6" height="4.5" fill="#c09800"/><rect x="592.6" y="472.4" width="4.6" height="1" fill="#ff0000"/><rect x="598.6" y="472.4" width="4.6" height="4.5" fill="#c09800"/><rect x="598.6" y="472.4" width="4.6" height="1" fill="#ff0000"/><rect x="578" y="476" width="5" height="2" fill="#f05010"/><rect x="585" y="476" width="5" height="2" fill="#c09800"/><rect x="578" y="479" width="5" height="2" fill="#c09800"/><rect x="585" y="479" width="5" height="2" fill="#c09800"/><rect x="578" y="482" width="5" height="2" fill="#c09800"/><rect x="585" y="482" width="5" height="2" fill="#f05010"/><rect x="578" y="484" width="5" height="2" fill="#f05010"/><rect x="585" y="484" width="5" height="2" fill="#c09800"/><rect x="578" y="487" width="5" height="2" fill="#c09800"/><rect x="585" y="487" width="5" height="2" fill="#c09800"/><rect x="578" y="490" width="5" height="2" fill="#c09800"/><rect x="585" y="490" width="5" height="2" fill="#f05010"/><rect x="592" y="492" width="5" height="2" fill="#c09800"/><rect x="599" y="492" width="5" height="2" fill="#c09800"/><rect x="592" y="496" width="5" height="2" fill="#c09800"/><rect x="599" y="496" width="5" height="2" fill="#c09800"/><rect x="592" y="499" width="5" height="2" fill="#c09800"/><rect x="599" y="499" width="5" height="2" fill="#c09800"/><rect x="592" y="502" width="5" height="2" fill="#c09800"/><rect x="599" y="502" width="5" height="2" fill="#c09800"/><rect x="592" y="505" width="5" height="2" fill="#c09800"/><rect x="599" y="505" width="5" height="2" fill="#c09800"/><rect x="592" y="508" width="5" height="2" fill="#c09800"/><rect x="599" y="508" width="5" height="2" fill="#c09800"/><rect x="592" y="511" width="5" height="2" fill="#c09800"/><rect x="599" y="511" width="5" height="2" fill="#c09800"/><rect x="592" y="514" width="5" height="2" fill="#c09800"/><rect x="599" y="514" width="5" height="2" fill="#c09800"/><rect x="608" y="451" width="4" height="4" fill="#c09800"/><rect x="614" y="451" width="4" height="4" fill="#48a010"/><rect x="614" y="451" width="3.1" height="3.1" fill="#c09800"/><rect x="607.7" y="458.4" width="10.5" height="4.6" fill="#c09800"/><rect x="607.7" y="458.4" width="10.5" height="1" fill="#ff0000"/><rect x="607" y="485.6" width="4.5" height="4.5" fill="#48a010"/><rect x="607" y="485.6" width="3.6" height="3.6" fill="#c09800"/><rect x="613" y="485.6" width="4.5" height="4.5" fill="#48a010"/><rect x="613" y="485.6" width="3.6" height="3.6" fill="#c09800"/><rect x="607" y="491.6" width="4.5" height="4.5" fill="#48a010"/><rect x="607" y="491.6" width="3.6" height="3.6" fill="#c09800"/><rect x="613" y="491.6" width="4.5" height="4.5" fill="#48a010"/><rect x="613" y="491.6" width="3.6" height="3.6" fill="#c09800"/><rect x="612.2" y="512.8" width="4.5" height="9.2" fill="#48a010"/><rect x="612.2" y="512.8" width="3.6" height="8.3" fill="#c09800"/><rect x="619" y="430.5" width="4.5" height="4.5" fill="#48a010"/><rect x="619" y="430.5" width="3.6" height="3.6" fill="#c09800"/><rect x="625.8" y="430.5" width="4.5" height="4.5" fill="#48a010"/><rect x="625.8" y="430.5" width="3.6" height="3.6" fill="#c09800"/><rect x="619" y="437.3" width="4.5" height="4.5" fill="#48a010"/><rect x="619" y="437.3" width="3.6" height="3.6" fill="#c09800"/><rect x="625.8" y="437.3" width="4.5" height="4.5" fill="#48a010"/><rect x="625.8" y="437.3" width="3.6" height="3.6" fill="#c09800"/><rect x="633.3" y="426" width="5.3" height="5" fill="#c09800"/><rect x="633.3" y="432.5" width="5.3" height="4.5" fill="#48a010"/><rect x="633.3" y="432.5" width="4.4" height="3.6" fill="#c09800"/><rect x="639.8" y="431.2" width="8.6" height="8.3" fill="#c09800"/><rect x="653" y="431" width="8.3" height="8.5" fill="#c09800"/><rect x="653" y="438.5" width="8.3" height="1" fill="#ff0000"/><rect x="643" y="440" width="4" height="4" fill="#48a010"/><rect x="643" y="440" width="3.1" height="3.1" fill="#c09800"/><rect x="648" y="440" width="4" height="4" fill="#48a010"/><rect x="648" y="440" width="3.1" height="3.1" fill="#c09800"/><rect x="653" y="440" width="4" height="4" fill="#48a010"/><rect x="653" y="440" width="3.1" height="3.1" fill="#c09800"/><rect x="659" y="440" width="4" height="4" fill="#48a010"/><rect x="659" y="440" width="3.1" height="3.1" fill="#c09800"/><rect x="664" y="440" width="4" height="4" fill="#48a010"/><rect x="664" y="440" width="3.1" height="3.1" fill="#c09800"/><rect x="669" y="440" width="4" height="4" fill="#48a010"/><rect x="669" y="440" width="3.1" height="3.1" fill="#c09800"/><rect x="674" y="440" width="4" height="4" fill="#48a010"/><rect x="674" y="440" width="3.1" height="3.1" fill="#c09800"/><rect x="665.8" y="435.8" width="5.2" height="4.5" fill="#48a010"/><rect x="665.8" y="435.8" width="4.3" height="3.6" fill="#c09800"/><rect x="673" y="435.8" width="5.6" height="4.5" fill="#48a010"/><rect x="673" y="435.8" width="4.7" height="3.6" fill="#c09800"/><rect x="711" y="449" width="4" height="4" fill="#48a010"/><rect x="711" y="449" width="3.1" height="3.1" fill="#c09800"/><rect x="716" y="449" width="4" height="4" fill="#48a010"/><rect x="716" y="449" width="3.1" height="3.1" fill="#c09800"/><rect x="711" y="455" width="4" height="4" fill="#48a010"/><rect x="711" y="455" width="3.1" height="3.1" fill="#c09800"/><rect x="716" y="455" width="4" height="4" fill="#48a010"/><rect x="716" y="455" width="3.1" height="3.1" fill="#c09800"/><rect x="711" y="465" width="5.4" height="4.5" fill="#48a010"/><rect x="711" y="465" width="4.5" height="3.6" fill="#c09800"/><rect x="711" y="470.8" width="5.4" height="4.5" fill="#48a010"/><rect x="711" y="470.8" width="4.5" height="3.6" fill="#c09800"/><rect x="711" y="476.6" width="5.4" height="4.5" fill="#48a010"/><rect x="711" y="476.6" width="4.5" height="3.6" fill="#c09800"/><rect x="706.6" y="494" width="5.4" height="4.5" fill="#c09800"/><rect x="706.6" y="494" width="5.4" height="1" fill="#ff0000"/><rect x="707" y="500" width="5" height="4" fill="#48a010"/><rect x="515.6" y="506.7" width="4.6" height="4.6" fill="#48a010"/><rect x="515.6" y="506.7" width="3.7" height="3.7" fill="#c09800"/><rect x="521.8" y="506.7" width="4.6" height="4.6" fill="#48a010"/><rect x="521.8" y="506.7" width="3.7" height="3.7" fill="#c09800"/><rect x="515.6" y="512.7" width="4.6" height="4.6" fill="#48a010"/><rect x="515.6" y="512.7" width="3.7" height="3.7" fill="#c09800"/><rect x="521.8" y="512.7" width="4.6" height="4.6" fill="#48a010"/><rect x="521.8" y="512.7" width="3.7" height="3.7" fill="#c09800"/><rect x="530" y="506.7" width="4.6" height="4.6" fill="#48a010"/><rect x="530" y="506.7" width="3.7" height="3.7" fill="#c09800"/><rect x="536.2" y="506.7" width="4.6" height="4.6" fill="#48a010"/><rect x="536.2" y="506.7" width="3.7" height="3.7" fill="#c09800"/><rect x="530" y="512.7" width="4.6" height="4.6" fill="#48a010"/><rect x="530" y="512.7" width="3.7" height="3.7" fill="#c09800"/><rect x="536.2" y="512.7" width="4.6" height="4.6" fill="#48a010"/><rect x="536.2" y="512.7" width="3.7" height="3.7" fill="#c09800"/><rect x="550.3" y="506.7" width="4.6" height="4.6" fill="#48a010"/><rect x="550.3" y="506.7" width="3.7" height="3.7" fill="#c09800"/><rect x="556.5" y="506.7" width="4.6" height="4.6" fill="#48a010"/><rect x="556.5" y="506.7" width="3.7" height="3.7" fill="#c09800"/><rect x="550.3" y="512.7" width="4.6" height="4.6" fill="#48a010"/><rect x="550.3" y="512.7" width="3.7" height="3.7" fill="#c09800"/><rect x="556.5" y="512.7" width="4.6" height="4.6" fill="#48a010"/><rect x="556.5" y="512.7" width="3.7" height="3.7" fill="#c09800"/><rect x="546" y="502" width="2" height="2" fill="#48a010"/><rect x="554" y="504" width="2" height="2" fill="#48a010"/><rect x="607" y="506" width="2" height="2" fill="#48a010"/><rect x="723" y="411" width="6" height="5" fill="#c09800"/><rect x="732.3" y="411" width="6.5" height="6" fill="#48a010"/><rect x="732.3" y="411" width="5.6" height="5.1" fill="#c09800"/><rect x="722" y="421" width="6" height="7.5" fill="#48a010"/><rect x="722" y="421" width="5.1" height="6.6" fill="#c09800"/><rect x="732.3" y="421" width="6.5" height="7.5" fill="#48a010"/><rect x="732.3" y="421" width="5.6" height="6.6" fill="#c09800"/><rect x="722" y="430" width="6" height="7" fill="#48a010"/><rect x="722" y="430" width="5.1" height="6.1" fill="#c09800"/><rect x="732.3" y="430" width="6.5" height="7" fill="#48a010"/><rect x="732.3" y="430" width="5.6" height="6.1" fill="#c09800"/><rect x="742" y="430" width="5" height="4" fill="#48a010"/><rect x="742" y="430" width="4.1" height="3.1" fill="#c09800"/><rect x="748" y="430" width="6" height="4" fill="#48a010"/><rect x="748" y="430" width="5.1" height="3.1" fill="#c09800"/><rect x="742" y="435" width="5" height="4" fill="#48a010"/><rect x="742" y="435" width="4.1" height="3.1" fill="#c09800"/><rect x="748" y="435" width="6" height="4" fill="#48a010"/><rect x="748" y="435" width="5.1" height="3.1" fill="#c09800"/><rect x="723.7" y="440" width="4.8" height="5" fill="#48a010"/><rect x="723.7" y="440" width="3.9" height="4.1" fill="#c09800"/><rect x="724" y="446" width="3" height="4" fill="#c09800"/><rect x="756" y="408" width="5" height="6" fill="#c09800"/><rect x="756" y="417" width="5" height="6" fill="#c09800"/><rect x="768" y="404" width="7" height="7.8" fill="#c09800"/><rect x="768" y="416" width="7" height="8.8" fill="#c09800"/><rect x="768" y="423.8" width="7" height="1" fill="#ff0000"/><rect x="779" y="413" width="4" height="3" fill="#c09800"/><rect x="779" y="418" width="4" height="4" fill="#c09800"/><rect x="802" y="406" width="3" height="3" fill="#c09800"/><rect x="801" y="411" width="5" height="5" fill="#48a010"/><rect x="801" y="411" width="4.1" height="4.1" fill="#c09800"/><rect x="809" y="430" width="2" height="2" fill="#48a010"/><rect x="785" y="436" width="3" height="2" fill="#48a010"/><rect x="834" y="433" width="2" height="3" fill="#48a010"/><rect x="842" y="433" width="2" height="3" fill="#48a010"/><rect x="794" y="434" width="4.5" height="5" fill="#48a010"/><rect x="794" y="434" width="3.6" height="4.1" fill="#c09800"/><rect x="799.6" y="434" width="4.5" height="5" fill="#48a010"/><rect x="799.6" y="434" width="3.6" height="4.1" fill="#c09800"/><rect x="805.2" y="434" width="4.5" height="5" fill="#48a010"/><rect x="805.2" y="434" width="3.6" height="4.1" fill="#c09800"/><rect x="810.8" y="434" width="4.5" height="5" fill="#48a010"/><rect x="810.8" y="434" width="3.6" height="4.1" fill="#c09800"/><rect x="797" y="442" width="6" height="7" fill="#c09800"/><rect x="808" y="441" width="8" height="8.7" fill="#48a010"/><rect x="808" y="441" width="7.1" height="7.8" fill="#c09800"/><rect x="802" y="454" width="8" height="8.6" fill="#48a010"/><rect x="802" y="454" width="7.1" height="7.7" fill="#c09800"/><rect x="832" y="457" width="12" height="18" fill="#c09800"/><rect x="715" y="449" width="6" height="5" fill="#48a010"/><rect x="715" y="449" width="5.1" height="4.1" fill="#c09800"/><rect x="715" y="455.5" width="6" height="5.5" fill="#48a010"/><rect x="715" y="455.5" width="5.1" height="4.6" fill="#c09800"/><rect x="717" y="466" width="3" height="4" fill="#c09800"/><rect x="717" y="471" width="3" height="4" fill="#c09800"/><rect x="717" y="477" width="3" height="3" fill="#c09800"/><rect x="740" y="452" width="2" height="2" fill="#c09800"/><rect x="741" y="453" width="2" height="2" fill="#ff0000"/><rect x="743" y="452" width="2" height="2" fill="#c09800"/><rect x="747" y="452" width="2" height="2" fill="#c09800"/><rect x="751" y="452" width="2" height="2" fill="#c09800"/><rect x="754" y="452" width="2" height="2" fill="#c09800"/><rect x="758" y="452" width="2" height="2" fill="#c09800"/><rect x="760" y="453" width="2" height="2" fill="#ff0000"/><rect x="762" y="452" width="2" height="2" fill="#c09800"/><rect x="765" y="452" width="2" height="2" fill="#c09800"/><rect x="769" y="452" width="2" height="2" fill="#c09800"/><rect x="773" y="452" width="2" height="2" fill="#c09800"/><rect x="776" y="452" width="2" height="2" fill="#c09800"/><rect x="778" y="453" width="2" height="2" fill="#ff0000"/><rect x="740" y="456" width="2" height="2" fill="#c09800"/><rect x="743" y="456" width="2" height="2" fill="#c09800"/><rect x="745" y="457" width="2" height="2" fill="#ff0000"/><rect x="747" y="456" width="2" height="2" fill="#c09800"/><rect x="751" y="456" width="2" height="2" fill="#c09800"/><rect x="754" y="456" width="2" height="2" fill="#c09800"/><rect x="758" y="456" width="2" height="2" fill="#c09800"/><rect x="762" y="456" width="2" height="2" fill="#c09800"/><rect x="764" y="457" width="2" height="2" fill="#ff0000"/><rect x="765" y="456" width="2" height="2" fill="#c09800"/><rect x="769" y="456" width="2" height="2" fill="#c09800"/><rect x="773" y="456" width="2" height="2" fill="#c09800"/><rect x="776" y="456" width="2" height="2" fill="#c09800"/><rect x="740" y="460" width="2" height="2" fill="#c09800"/><rect x="743" y="460" width="2" height="2" fill="#c09800"/><rect x="747" y="460" width="2" height="2" fill="#c09800"/><rect x="749" y="460" width="2" height="2" fill="#ff0000"/><rect x="751" y="460" width="2" height="2" fill="#c09800"/><rect x="754" y="460" width="2" height="2" fill="#c09800"/><rect x="758" y="460" width="2" height="2" fill="#c09800"/><rect x="762" y="460" width="2" height="2" fill="#c09800"/><rect x="765" y="460" width="2" height="2" fill="#c09800"/><rect x="767" y="460" width="2" height="2" fill="#ff0000"/><rect x="769" y="460" width="2" height="2" fill="#c09800"/><rect x="773" y="460" width="2" height="2" fill="#c09800"/><rect x="776" y="460" width="2" height="2" fill="#c09800"/><rect x="740" y="464" width="2" height="2" fill="#c09800"/><rect x="743" y="464" width="2" height="2" fill="#c09800"/><rect x="747" y="464" width="2" height="2" fill="#c09800"/><rect x="751" y="464" width="2" height="2" fill="#c09800"/><rect x="752" y="464" width="2" height="2" fill="#ff0000"/><rect x="754" y="464" width="2" height="2" fill="#c09800"/><rect x="758" y="464" width="2" height="2" fill="#c09800"/><rect x="762" y="464" width="2" height="2" fill="#c09800"/><rect x="765" y="464" width="2" height="2" fill="#c09800"/><rect x="769" y="464" width="2" height="2" fill="#c09800"/><rect x="771" y="464" width="2" height="2" fill="#ff0000"/><rect x="773" y="464" width="2" height="2" fill="#c09800"/><rect x="776" y="464" width="2" height="2" fill="#c09800"/><rect x="740" y="467" width="2" height="2" fill="#c09800"/><rect x="743" y="467" width="2" height="2" fill="#c09800"/><rect x="747" y="467" width="2" height="2" fill="#c09800"/><rect x="751" y="467" width="2" height="2" fill="#c09800"/><rect x="754" y="467" width="2" height="2" fill="#c09800"/><rect x="756" y="468" width="2" height="2" fill="#ff0000"/><rect x="758" y="467" width="2" height="2" fill="#c09800"/><rect x="762" y="467" width="2" height="2" fill="#c09800"/><rect x="765" y="467" width="2" height="2" fill="#c09800"/><rect x="769" y="467" width="2" height="2" fill="#c09800"/><rect x="773" y="467" width="2" height="2" fill="#c09800"/><rect x="775" y="468" width="2" height="2" fill="#ff0000"/><rect x="776" y="467" width="2" height="2" fill="#c09800"/><rect x="740" y="471" width="2" height="2" fill="#c09800"/><rect x="741" y="471" width="2" height="3" fill="#ff0000"/><rect x="743" y="471" width="2" height="2" fill="#c09800"/><rect x="747" y="471" width="2" height="2" fill="#c09800"/><rect x="751" y="471" width="2" height="2" fill="#c09800"/><rect x="754" y="471" width="2" height="2" fill="#c09800"/><rect x="758" y="471" width="2" height="2" fill="#c09800"/><rect x="760" y="471" width="2" height="3" fill="#ff0000"/><rect x="762" y="471" width="2" height="2" fill="#c09800"/><rect x="765" y="471" width="2" height="2" fill="#c09800"/><rect x="769" y="471" width="2" height="2" fill="#c09800"/><rect x="773" y="471" width="2" height="2" fill="#c09800"/><rect x="776" y="471" width="2" height="2" fill="#c09800"/><rect x="778" y="471" width="2" height="3" fill="#ff0000"/><rect x="740" y="475" width="2" height="2" fill="#c09800"/><rect x="743" y="475" width="2" height="2" fill="#c09800"/><rect x="745" y="475" width="2" height="2" fill="#ff0000"/><rect x="747" y="475" width="2" height="2" fill="#c09800"/><rect x="751" y="475" width="2" height="2" fill="#c09800"/><rect x="754" y="475" width="2" height="2" fill="#c09800"/><rect x="758" y="475" width="2" height="2" fill="#c09800"/><rect x="762" y="475" width="2" height="2" fill="#c09800"/><rect x="764" y="475" width="2" height="2" fill="#ff0000"/><rect x="765" y="475" width="2" height="2" fill="#c09800"/><rect x="769" y="475" width="2" height="2" fill="#c09800"/><rect x="773" y="475" width="2" height="2" fill="#c09800"/><rect x="776" y="475" width="2" height="2" fill="#c09800"/><rect x="740" y="478" width="2" height="2" fill="#c09800"/><rect x="743" y="478" width="2" height="2" fill="#c09800"/><rect x="747" y="478" width="2" height="2" fill="#c09800"/><rect x="749" y="479" width="2" height="2" fill="#ff0000"/><rect x="751" y="478" width="2" height="2" fill="#c09800"/><rect x="754" y="478" width="2" height="2" fill="#c09800"/><rect x="758" y="478" width="2" height="2" fill="#c09800"/><rect x="762" y="478" width="2" height="2" fill="#c09800"/><rect x="765" y="478" width="2" height="2" fill="#c09800"/><rect x="767" y="479" width="2" height="2" fill="#ff0000"/><rect x="769" y="478" width="2" height="2" fill="#c09800"/><rect x="773" y="478" width="2" height="2" fill="#c09800"/><rect x="776" y="478" width="2" height="2" fill="#c09800"/><rect x="740" y="482" width="2" height="2" fill="#c09800"/><rect x="743" y="482" width="2" height="2" fill="#c09800"/><rect x="747" y="482" width="2" height="2" fill="#c09800"/><rect x="751" y="482" width="2" height="2" fill="#c09800"/><rect x="752" y="482" width="2" height="3" fill="#ff0000"/><rect x="754" y="482" width="2" height="2" fill="#c09800"/><rect x="758" y="482" width="2" height="2" fill="#c09800"/><rect x="762" y="482" width="2" height="2" fill="#c09800"/><rect x="765" y="482" width="2" height="2" fill="#c09800"/><rect x="769" y="482" width="2" height="2" fill="#c09800"/><rect x="771" y="482" width="2" height="3" fill="#ff0000"/><rect x="773" y="482" width="2" height="2" fill="#c09800"/><rect x="776" y="482" width="2" height="2" fill="#c09800"/><rect x="740" y="486" width="2" height="2" fill="#c09800"/><rect x="743" y="486" width="2" height="2" fill="#c09800"/><rect x="747" y="486" width="2" height="2" fill="#c09800"/><rect x="751" y="486" width="2" height="2" fill="#c09800"/><rect x="754" y="486" width="2" height="2" fill="#c09800"/><rect x="756" y="486" width="2" height="2" fill="#ff0000"/><rect x="758" y="486" width="2" height="2" fill="#c09800"/><rect x="762" y="486" width="2" height="2" fill="#c09800"/><rect x="765" y="486" width="2" height="2" fill="#c09800"/><rect x="769" y="486" width="2" height="2" fill="#c09800"/><rect x="773" y="486" width="2" height="2" fill="#c09800"/><rect x="775" y="486" width="2" height="2" fill="#ff0000"/><rect x="776" y="486" width="2" height="2" fill="#c09800"/><rect x="740" y="490" width="2" height="2" fill="#c09800"/><rect x="741" y="490" width="2" height="2" fill="#ff0000"/><rect x="743" y="490" width="2" height="2" fill="#c09800"/><rect x="747" y="490" width="2" height="2" fill="#c09800"/><rect x="751" y="490" width="2" height="2" fill="#c09800"/><rect x="754" y="490" width="2" height="2" fill="#c09800"/><rect x="758" y="490" width="2" height="2" fill="#c09800"/><rect x="760" y="490" width="2" height="2" fill="#ff0000"/><rect x="762" y="490" width="2" height="2" fill="#c09800"/><rect x="765" y="490" width="2" height="2" fill="#c09800"/><rect x="769" y="490" width="2" height="2" fill="#c09800"/><rect x="773" y="490" width="2" height="2" fill="#c09800"/><rect x="776" y="490" width="2" height="2" fill="#c09800"/><rect x="778" y="490" width="2" height="2" fill="#ff0000"/><rect x="787" y="465" width="4" height="5" fill="#48a010"/><rect x="787" y="465" width="3.1" height="4.1" fill="#c09800"/><rect x="792" y="465" width="5" height="5" fill="#48a010"/><rect x="792" y="465" width="4.1" height="4.1" fill="#c09800"/><rect x="787" y="471" width="4" height="5" fill="#48a010"/><rect x="787" y="471" width="3.1" height="4.1" fill="#c09800"/><rect x="792" y="471" width="5" height="5" fill="#48a010"/><rect x="792" y="471" width="4.1" height="4.1" fill="#c09800"/><rect x="798" y="466" width="4" height="4" fill="#c09800"/><rect x="803.8" y="465" width="5.2" height="5" fill="#48a010"/><rect x="809" y="468" width="8.8" height="6.5" fill="#48a010"/><rect x="809" y="468" width="7.9" height="5.6" fill="#c09800"/><rect x="800" y="477" width="8" height="9" fill="#c09800"/><rect x="809" y="477" width="7.7" height="9" fill="#c09800"/><rect x="809" y="477" width="1" height="9" fill="#ff0000"/><rect x="790.8" y="479" width="4.8" height="5" fill="#48a010"/><rect x="790.8" y="479" width="3.9" height="4.1" fill="#c09800"/><rect x="592" y="536" width="5" height="2" fill="#f05010"/><rect x="599" y="536" width="5" height="2" fill="#c09800"/><rect x="592" y="539" width="5" height="2" fill="#c09800"/><rect x="599" y="539" width="5" height="2" fill="#f05010"/><rect x="592" y="542" width="5" height="2" fill="#f05010"/><rect x="599" y="542" width="5" height="2" fill="#c09800"/><rect x="592" y="545" width="5" height="2" fill="#c09800"/><rect x="599" y="545" width="5" height="2" fill="#f05010"/><rect x="607" y="526.5" width="4.6" height="4.6" fill="#48a010"/><rect x="607" y="526.5" width="3.7" height="3.7" fill="#c09800"/><rect x="612.5" y="526.5" width="4.6" height="4.6" fill="#48a010"/><rect x="612.5" y="526.5" width="3.7" height="3.7" fill="#c09800"/><rect x="607" y="532" width="4.6" height="4.6" fill="#48a010"/><rect x="607" y="532" width="3.7" height="3.7" fill="#c09800"/><rect x="612.5" y="532" width="4.6" height="4.6" fill="#48a010"/><rect x="612.5" y="532" width="3.7" height="3.7" fill="#c09800"/><rect x="709" y="524" width="5" height="4" fill="#48a010"/><rect x="709" y="524" width="4.1" height="3.1" fill="#c09800"/><rect x="709" y="529" width="5" height="4" fill="#48a010"/><rect x="709" y="529" width="4.1" height="3.1" fill="#c09800"/><rect x="709" y="534" width="5" height="4" fill="#48a010"/><rect x="709" y="534" width="4.1" height="3.1" fill="#c09800"/><rect x="715" y="524" width="5" height="4" fill="#48a010"/><rect x="715" y="529" width="5" height="4" fill="#48a010"/><rect x="715" y="534" width="5" height="4" fill="#48a010"/><rect x="653" y="543" width="4" height="5" fill="#48a010"/><rect x="653" y="543" width="3.1" height="4.1" fill="#c09800"/><rect x="658" y="543" width="4" height="5" fill="#c09800"/><rect x="691" y="541" width="4" height="4" fill="#48a010"/><rect x="691" y="541" width="3.1" height="3.1" fill="#c09800"/><rect x="696" y="541" width="5" height="4" fill="#48a010"/><rect x="696" y="541" width="4.1" height="3.1" fill="#c09800"/><rect x="702" y="541" width="4" height="4" fill="#48a010"/><rect x="702" y="541" width="3.1" height="3.1" fill="#c09800"/><rect x="708" y="541" width="4" height="4" fill="#48a010"/><rect x="708" y="541" width="3.1" height="3.1" fill="#c09800"/><rect x="691" y="546" width="4" height="5" fill="#48a010"/><rect x="691" y="546" width="3.1" height="4.1" fill="#c09800"/><rect x="696" y="546" width="5" height="5" fill="#48a010"/><rect x="696" y="546" width="4.1" height="4.1" fill="#c09800"/><rect x="702" y="546" width="4" height="5" fill="#48a010"/><rect x="702" y="546" width="3.1" height="4.1" fill="#c09800"/><rect x="708" y="546" width="4" height="5" fill="#48a010"/><rect x="708" y="546" width="3.1" height="4.1" fill="#c09800"/><rect x="707" y="557.5" width="5" height="4.5" fill="#48a010"/><rect x="707" y="557.5" width="4.1" height="3.6" fill="#c09800"/><rect x="714" y="557.5" width="5" height="4.5" fill="#48a010"/><rect x="714" y="557.5" width="4.1" height="3.6" fill="#c09800"/><rect x="707" y="563.5" width="5" height="4.5" fill="#48a010"/><rect x="707" y="563.5" width="4.1" height="3.6" fill="#c09800"/><rect x="714" y="563.5" width="5" height="4.5" fill="#48a010"/><rect x="714" y="563.5" width="4.1" height="3.6" fill="#c09800"/><rect x="707" y="569.5" width="5" height="4.5" fill="#48a010"/><rect x="707" y="569.5" width="4.1" height="3.6" fill="#c09800"/><rect x="714" y="569.5" width="5" height="4.5" fill="#48a010"/><rect x="714" y="569.5" width="4.1" height="3.6" fill="#c09800"/><rect x="598" y="554" width="2" height="12" fill="#c09800"/><rect x="600" y="554" width="2" height="12" fill="#c09800"/><rect x="603" y="554" width="2" height="12" fill="#48a010"/><rect x="606" y="554" width="2" height="12" fill="#c09800"/><rect x="608" y="554" width="2" height="12" fill="#c09800"/><rect x="614" y="554" width="2" height="12" fill="#c09800"/><rect x="616" y="554" width="2" height="12" fill="#f05010"/><rect x="619" y="554" width="2" height="12" fill="#c09800"/><rect x="621" y="554" width="2" height="12" fill="#f05010"/><rect x="624" y="554" width="2" height="12" fill="#c09800"/><rect x="628" y="554" width="2" height="12" fill="#c09800"/><rect x="630" y="554" width="2" height="12" fill="#f05010"/><rect x="633" y="554" width="2" height="12" fill="#c09800"/><rect x="636" y="554" width="2" height="12" fill="#f05010"/><rect x="638" y="554" width="2" height="12" fill="#c09800"/><rect x="643" y="554" width="2" height="12" fill="#c09800"/><rect x="646" y="554" width="2" height="12" fill="#f05010"/><rect x="648" y="554" width="2" height="12" fill="#c09800"/><rect x="650" y="554" width="2" height="12" fill="#f05010"/><rect x="653" y="554" width="2" height="12" fill="#c09800"/><rect x="656" y="554" width="2" height="12" fill="#c09800"/><rect x="658" y="554" width="2" height="12" fill="#c09800"/><rect x="661" y="554" width="2" height="12" fill="#48a010"/><rect x="664" y="554" width="2" height="12" fill="#c09800"/><rect x="666" y="554" width="2" height="12" fill="#c09800"/><rect x="678" y="554" width="2" height="12" fill="#c09800"/><rect x="680" y="554" width="2" height="12" fill="#f05010"/><rect x="683" y="554" width="2" height="12" fill="#c09800"/><rect x="686" y="554" width="2" height="12" fill="#f05010"/><rect x="688" y="554" width="2" height="12" fill="#c09800"/><rect x="693" y="554" width="2" height="12" fill="#c09800"/><rect x="696" y="554" width="2" height="12" fill="#f05010"/><rect x="698" y="554" width="2" height="12" fill="#c09800"/><rect x="700" y="554" width="2" height="12" fill="#f05010"/><rect x="703" y="554" width="2" height="12" fill="#c09800"/><rect x="671" y="557" width="3" height="5" fill="#48a010"/><rect x="671" y="562" width="3" height="5" fill="#48a010"/><rect x="584" y="562" width="4" height="4" fill="#c09800"/><rect x="584" y="562" width="1" height="4" fill="#ff0000"/><rect x="590" y="562" width="4" height="4" fill="#c09800"/><rect x="514.8" y="565" width="8.2" height="7.6" fill="#c09800"/><rect x="530" y="568" width="4.5" height="4.6" fill="#c09800"/><rect x="536" y="568" width="4" height="5" fill="#c09800"/><rect x="558" y="568" width="9" height="4.6" fill="#48a010"/><rect x="558" y="568" width="8.1" height="3.7" fill="#c09800"/><rect x="570" y="568" width="3" height="5" fill="#c09800"/><rect x="574.5" y="568" width="5.5" height="4.6" fill="#48a010"/><rect x="574.5" y="568" width="4.6" height="3.7" fill="#c09800"/><rect x="583" y="568" width="11" height="4.6" fill="#48a010"/><rect x="583" y="568" width="10.1" height="3.7" fill="#c09800"/><rect x="516" y="576" width="3" height="10" fill="#c09800"/><rect x="521" y="576" width="3" height="10" fill="#c09800"/><rect x="525" y="576" width="3" height="10" fill="#48a010"/><rect x="530" y="576" width="3" height="10" fill="#c09800"/><rect x="534" y="576" width="3" height="10" fill="#c09800"/><rect x="539" y="576" width="3" height="10" fill="#c09800"/><rect x="543" y="576" width="3" height="10" fill="#c09800"/><rect x="548" y="576" width="3" height="10" fill="#48a010"/><rect x="552" y="576" width="3" height="10" fill="#c09800"/><rect x="557" y="576" width="3" height="10" fill="#c09800"/><rect x="561" y="576" width="3" height="10" fill="#c09800"/><rect x="566" y="576" width="3" height="10" fill="#c09800"/><rect x="570" y="576" width="3" height="10" fill="#48a010"/><rect x="575" y="576" width="3" height="10" fill="#c09800"/><rect x="579" y="576" width="3" height="10" fill="#c09800"/><rect x="584" y="576" width="3" height="10" fill="#c09800"/><rect x="588" y="576" width="3" height="10" fill="#c09800"/><rect x="593" y="576" width="3" height="10" fill="#48a010"/><rect x="597" y="576" width="3" height="10" fill="#c09800"/><rect x="602" y="576" width="3" height="10" fill="#c09800"/><rect x="606" y="576" width="3" height="10" fill="#c09800"/><rect x="611" y="576" width="3" height="10" fill="#c09800"/><rect x="615" y="576" width="3" height="10" fill="#48a010"/><rect x="522" y="561" width="2" height="2" fill="#48a010"/><rect x="546" y="527" width="2" height="2" fill="#48a010"/><rect x="555" y="530" width="2" height="2" fill="#48a010"/><rect x="563" y="531" width="2" height="2" fill="#48a010"/><rect x="570" y="530" width="2" height="2" fill="#48a010"/><rect x="523" y="621" width="2" height="2" fill="#48a010"/><rect x="525" y="631" width="2" height="2" fill="#48a010"/><rect x="606" y="630" width="2" height="2" fill="#48a010"/><rect x="694" y="620" width="2" height="2" fill="#48a010"/><rect x="641" y="578" width="10" height="2" fill="#c09800"/><rect x="641" y="581" width="10" height="2" fill="#c09800"/><rect x="641" y="584" width="10" height="2" fill="#c09800"/><rect x="641" y="587" width="10" height="2" fill="#c09800"/><rect x="641" y="590" width="10" height="2" fill="#c09800"/><rect x="641" y="593" width="10" height="2" fill="#48a010"/><rect x="641" y="596" width="10" height="2" fill="#f05010"/><rect x="641" y="599" width="10" height="2" fill="#c09800"/><rect x="641" y="602" width="10" height="2" fill="#c09800"/><rect x="641" y="605" width="10" height="2" fill="#c09800"/><rect x="641" y="608" width="10" height="2" fill="#c09800"/><rect x="641" y="611" width="10" height="2" fill="#48a010"/><rect x="641" y="614" width="10" height="2" fill="#f05010"/><rect x="641" y="617" width="10" height="2" fill="#c09800"/><rect x="641" y="620" width="10" height="2" fill="#c09800"/><rect x="641" y="623" width="10" height="2" fill="#48a010"/><rect x="641" y="626" width="10" height="2" fill="#c09800"/><rect x="641" y="629" width="10" height="2" fill="#48a010"/><rect x="641" y="632" width="10" height="2" fill="#c09800"/><rect x="641" y="635" width="10" height="2" fill="#f05010"/><rect x="641" y="638" width="10" height="2" fill="#c09800"/><rect x="641" y="641" width="10" height="2" fill="#c09800"/><rect x="641" y="644" width="10" height="2" fill="#c09800"/><rect x="658" y="578" width="10" height="2" fill="#c09800"/><rect x="658" y="581" width="10" height="2" fill="#c09800"/><rect x="658" y="584" width="10" height="2" fill="#c09800"/><rect x="658" y="587" width="10" height="2" fill="#c09800"/><rect x="658" y="590" width="10" height="2" fill="#c09800"/><rect x="658" y="593" width="10" height="2" fill="#48a010"/><rect x="658" y="596" width="10" height="2" fill="#f05010"/><rect x="658" y="599" width="10" height="2" fill="#c09800"/><rect x="658" y="602" width="10" height="2" fill="#c09800"/><rect x="658" y="605" width="10" height="2" fill="#c09800"/><rect x="658" y="608" width="10" height="2" fill="#c09800"/><rect x="658" y="611" width="10" height="2" fill="#48a010"/><rect x="658" y="614" width="10" height="2" fill="#f05010"/><rect x="658" y="617" width="10" height="2" fill="#c09800"/><rect x="658" y="620" width="10" height="2" fill="#c09800"/><rect x="658" y="623" width="10" height="2" fill="#48a010"/><rect x="658" y="626" width="10" height="2" fill="#c09800"/><rect x="658" y="629" width="10" height="2" fill="#48a010"/><rect x="658" y="632" width="10" height="2" fill="#c09800"/><rect x="658" y="635" width="10" height="2" fill="#f05010"/><rect x="658" y="638" width="10" height="2" fill="#c09800"/><rect x="658" y="641" width="10" height="2" fill="#c09800"/><rect x="658" y="644" width="10" height="2" fill="#c09800"/><rect x="625" y="618" width="5" height="4.5" fill="#48a010"/><rect x="625" y="624" width="5" height="4.5" fill="#48a010"/><rect x="634" y="615" width="5.4" height="5" fill="#48a010"/><rect x="634" y="621.5" width="5.4" height="4.5" fill="#48a010"/><rect x="720" y="489" width="4" height="4" fill="#48a010"/><rect x="720" y="489" width="3.1" height="3.1" fill="#c09800"/><rect x="726" y="489" width="4" height="4" fill="#48a010"/><rect x="726" y="489" width="3.1" height="3.1" fill="#c09800"/><rect x="720" y="495" width="4" height="4" fill="#48a010"/><rect x="720" y="495" width="3.1" height="3.1" fill="#c09800"/><rect x="726" y="495" width="4" height="4" fill="#48a010"/><rect x="726" y="495" width="3.1" height="3.1" fill="#c09800"/><rect x="720" y="501.7" width="4.5" height="4.9" fill="#c09800"/><rect x="725.5" y="501.7" width="4.5" height="4.9" fill="#48a010"/><rect x="725.5" y="501.7" width="3.6" height="4" fill="#c09800"/><rect x="730.7" y="502.8" width="4.5" height="5.9" fill="#48a010"/><rect x="730.7" y="502.8" width="3.6" height="5" fill="#c09800"/><rect x="736" y="502.8" width="4.5" height="5.9" fill="#48a010"/><rect x="736" y="502.8" width="3.6" height="5" fill="#c09800"/><rect x="741.3" y="502.8" width="4.5" height="5.9" fill="#48a010"/><rect x="741.3" y="502.8" width="3.6" height="5" fill="#c09800"/><rect x="746.6" y="502.8" width="4.5" height="5.9" fill="#48a010"/><rect x="746.6" y="502.8" width="3.6" height="5" fill="#c09800"/><rect x="752" y="501" width="4" height="4" fill="#48a010"/><rect x="752" y="501" width="3.1" height="3.1" fill="#c09800"/><rect x="757" y="501" width="5" height="4" fill="#48a010"/><rect x="757" y="501" width="4.1" height="3.1" fill="#c09800"/><rect x="752" y="507" width="4" height="4" fill="#48a010"/><rect x="752" y="507" width="3.1" height="3.1" fill="#c09800"/><rect x="757" y="507" width="5" height="4" fill="#48a010"/><rect x="757" y="507" width="4.1" height="3.1" fill="#c09800"/><rect x="765" y="506" width="8" height="4" fill="#c09800"/><rect x="765" y="511" width="8" height="4" fill="#c09800"/><rect x="779" y="505" width="2" height="2" fill="#48a010"/><rect x="791" y="486" width="5" height="3" fill="#c09800"/><rect x="800" y="490.3" width="7" height="7.7" fill="#c09800"/><rect x="800" y="490.3" width="1" height="7.7" fill="#ff0000"/><rect x="809" y="490.3" width="8.8" height="7.7" fill="#48a010"/><rect x="809" y="490.3" width="7.9" height="6.8" fill="#c09800"/><rect x="793" y="496" width="5" height="2" fill="#48a010"/><rect x="793" y="499" width="5" height="3" fill="#48a010"/><rect x="793" y="502" width="5" height="2" fill="#48a010"/><rect x="806" y="500" width="4" height="4" fill="#c09800"/><rect x="812" y="499" width="5" height="6" fill="#48a010"/><rect x="812" y="499" width="4.1" height="5.1" fill="#c09800"/><rect x="801" y="506" width="8" height="4" fill="#c09800"/><rect x="801" y="511" width="8" height="4" fill="#c09800"/><rect x="728" y="515" width="6" height="6.7" fill="#48a010"/><rect x="728" y="515" width="5.1" height="5.8" fill="#c09800"/><rect x="728" y="524" width="6" height="6.4" fill="#48a010"/><rect x="728" y="524" width="5.1" height="5.5" fill="#c09800"/><rect x="738.3" y="515" width="6" height="6.7" fill="#48a010"/><rect x="738.3" y="515" width="5.1" height="5.8" fill="#c09800"/><rect x="738.3" y="524" width="6" height="6.4" fill="#48a010"/><rect x="738.3" y="524" width="5.1" height="5.5" fill="#c09800"/><rect x="749" y="515" width="6" height="6.7" fill="#48a010"/><rect x="749" y="515" width="5.1" height="5.8" fill="#c09800"/><rect x="749" y="524" width="6" height="6.4" fill="#48a010"/><rect x="749" y="524" width="5.1" height="5.5" fill="#c09800"/><rect x="715" y="517" width="4" height="4" fill="#48a010"/><rect x="715" y="522" width="4" height="4" fill="#48a010"/><rect x="715" y="528" width="4" height="3" fill="#48a010"/><rect x="715" y="533" width="4" height="4" fill="#48a010"/><rect x="728" y="533" width="5" height="5.5" fill="#48a010"/><rect x="734" y="533" width="4" height="5" fill="#c09800"/><rect x="742" y="534" width="2" height="2" fill="#48a010"/><rect x="750" y="535" width="2" height="2" fill="#48a010"/><rect x="754" y="534.7" width="7.5" height="6.5" fill="#48a010"/><rect x="754" y="534.7" width="6.6" height="5.6" fill="#c09800"/><rect x="762.5" y="534.7" width="8.2" height="6.5" fill="#48a010"/><rect x="762.5" y="534.7" width="7.3" height="5.6" fill="#c09800"/><rect x="775" y="525" width="6" height="6.5" fill="#48a010"/><rect x="775" y="525" width="5.1" height="5.6" fill="#c09800"/><rect x="775" y="534" width="6" height="6.7" fill="#48a010"/><rect x="775" y="534" width="5.1" height="5.8" fill="#c09800"/><rect x="787" y="538" width="5" height="6" fill="#c09800"/><rect x="787" y="547" width="6" height="6.6" fill="#48a010"/><rect x="787" y="547" width="5.1" height="5.7" fill="#c09800"/><rect x="790.8" y="525" width="4.5" height="4.5" fill="#48a010"/><rect x="790.8" y="525" width="3.6" height="3.6" fill="#c09800"/><rect x="796.6" y="525" width="4.5" height="4.5" fill="#48a010"/><rect x="796.6" y="525" width="3.6" height="3.6" fill="#c09800"/><rect x="790.8" y="531.3" width="4.5" height="4.5" fill="#48a010"/><rect x="790.8" y="531.3" width="3.6" height="3.6" fill="#c09800"/><rect x="796.6" y="531.3" width="4.5" height="4.5" fill="#48a010"/><rect x="796.6" y="531.3" width="3.6" height="3.6" fill="#c09800"/><rect x="804" y="532" width="4" height="4" fill="#48a010"/><rect x="809" y="532" width="4" height="4" fill="#48a010"/><rect x="804" y="537" width="4" height="4" fill="#48a010"/><rect x="809" y="537" width="4" height="4" fill="#48a010"/><rect x="754" y="545" width="7.5" height="7" fill="#48a010"/><rect x="754" y="545" width="6.6" height="6.1" fill="#c09800"/><rect x="764" y="545" width="6" height="6.5" fill="#ff0000"/><rect x="764.8" y="545.8" width="4.4" height="4.9" fill="#c09800"/><rect x="756" y="554" width="4" height="4" fill="#48a010"/><rect x="761" y="554" width="4" height="4" fill="#c09800"/><rect x="734" y="555" width="4.5" height="5.7" fill="#48a010"/><rect x="734" y="555" width="3.6" height="4.8" fill="#c09800"/><rect x="739.5" y="555" width="4.5" height="5.7" fill="#48a010"/><rect x="739.5" y="555" width="3.6" height="4.8" fill="#c09800"/><rect x="796" y="545" width="5" height="4" fill="#48a010"/><rect x="796" y="545" width="4.1" height="3.1" fill="#c09800"/><rect x="803" y="545" width="5" height="4" fill="#48a010"/><rect x="803" y="545" width="4.1" height="3.1" fill="#c09800"/><rect x="796" y="551" width="5" height="4" fill="#48a010"/><rect x="796" y="551" width="4.1" height="3.1" fill="#c09800"/><rect x="803" y="551" width="5" height="4" fill="#48a010"/><rect x="803" y="551" width="4.1" height="3.1" fill="#c09800"/><rect x="715" y="557" width="3" height="6" fill="#c09800"/><rect x="715" y="565" width="4" height="4" fill="#48a010"/><rect x="715" y="565" width="3.1" height="3.1" fill="#c09800"/><rect x="721" y="565" width="4" height="4" fill="#48a010"/><rect x="721" y="565" width="3.1" height="3.1" fill="#c09800"/><rect x="726" y="565" width="5" height="4" fill="#48a010"/><rect x="726" y="565" width="4.1" height="3.1" fill="#c09800"/><rect x="732" y="565" width="4" height="4" fill="#48a010"/><rect x="732" y="565" width="3.1" height="3.1" fill="#c09800"/><rect x="737" y="565" width="5" height="4" fill="#48a010"/><rect x="737" y="565" width="4.1" height="3.1" fill="#c09800"/><rect x="743" y="565" width="4" height="4" fill="#48a010"/><rect x="743" y="565" width="3.1" height="3.1" fill="#c09800"/><rect x="749" y="565" width="4" height="4" fill="#48a010"/><rect x="749" y="565" width="3.1" height="3.1" fill="#c09800"/><rect x="754" y="565" width="5" height="4" fill="#48a010"/><rect x="754" y="565" width="4.1" height="3.1" fill="#c09800"/><rect x="760" y="565" width="4" height="4" fill="#48a010"/><rect x="760" y="565" width="3.1" height="3.1" fill="#c09800"/><rect x="715" y="570" width="4" height="4" fill="#48a010"/><rect x="715" y="570" width="3.1" height="3.1" fill="#c09800"/><rect x="721" y="570" width="4" height="4" fill="#48a010"/><rect x="721" y="570" width="3.1" height="3.1" fill="#c09800"/><rect x="726" y="570" width="5" height="4" fill="#48a010"/><rect x="726" y="570" width="4.1" height="3.1" fill="#c09800"/><rect x="732" y="570" width="4" height="4" fill="#48a010"/><rect x="732" y="570" width="3.1" height="3.1" fill="#c09800"/><rect x="737" y="570" width="5" height="4" fill="#48a010"/><rect x="737" y="570" width="4.1" height="3.1" fill="#c09800"/><rect x="743" y="570" width="4" height="4" fill="#48a010"/><rect x="743" y="570" width="3.1" height="3.1" fill="#c09800"/><rect x="749" y="570" width="4" height="4" fill="#48a010"/><rect x="749" y="570" width="3.1" height="3.1" fill="#c09800"/><rect x="754" y="570" width="5" height="4" fill="#48a010"/><rect x="754" y="570" width="4.1" height="3.1" fill="#c09800"/><rect x="760" y="570" width="4" height="4" fill="#48a010"/><rect x="760" y="570" width="3.1" height="3.1" fill="#c09800"/><rect x="781" y="568" width="2" height="2" fill="#48a010"/><rect x="832" y="560" width="12" height="20" fill="#c09800"/><rect x="753" y="578" width="11" height="2" fill="#c09800"/><rect x="753" y="581" width="11" height="2" fill="#c09800"/><rect x="753" y="584" width="11" height="2" fill="#c09800"/><rect x="753" y="587" width="11" height="2" fill="#c09800"/><rect x="753" y="590" width="11" height="2" fill="#c09800"/><rect x="753" y="593" width="11" height="2" fill="#48a010"/><rect x="753" y="596" width="11" height="2" fill="#f05010"/><rect x="753" y="599" width="11" height="2" fill="#c09800"/><rect x="753" y="602" width="11" height="2" fill="#c09800"/><rect x="753" y="605" width="11" height="2" fill="#c09800"/><rect x="753" y="608" width="11" height="2" fill="#48a010"/><rect x="753" y="611" width="11" height="2" fill="#f05010"/><rect x="753" y="614" width="11" height="2" fill="#c09800"/><rect x="753" y="617" width="11" height="2" fill="#c09800"/><rect x="753" y="620" width="11" height="2" fill="#48a010"/><rect x="753" y="623" width="11" height="2" fill="#c09800"/><rect x="753" y="626" width="11" height="2" fill="#f05010"/><rect x="753" y="628" width="11" height="2" fill="#c09800"/><rect x="753" y="631" width="11" height="2" fill="#48a010"/><rect x="753" y="634" width="11" height="2" fill="#c09800"/><rect x="753" y="637" width="11" height="2" fill="#f05010"/><rect x="753" y="640" width="11" height="2" fill="#c09800"/><rect x="753" y="643" width="11" height="2" fill="#c09800"/><rect x="770" y="578" width="11" height="2" fill="#c09800"/><rect x="770" y="581" width="11" height="2" fill="#c09800"/><rect x="770" y="584" width="11" height="2" fill="#c09800"/><rect x="770" y="587" width="11" height="2" fill="#c09800"/><rect x="770" y="590" width="11" height="2" fill="#c09800"/><rect x="770" y="593" width="11" height="2" fill="#48a010"/><rect x="770" y="596" width="11" height="2" fill="#f05010"/><rect x="770" y="599" width="11" height="2" fill="#c09800"/><rect x="770" y="602" width="11" height="2" fill="#c09800"/><rect x="770" y="605" width="11" height="2" fill="#c09800"/><rect x="770" y="608" width="11" height="2" fill="#48a010"/><rect x="770" y="611" width="11" height="2" fill="#f05010"/><rect x="770" y="614" width="11" height="2" fill="#c09800"/><rect x="770" y="617" width="11" height="2" fill="#c09800"/><rect x="770" y="620" width="11" height="2" fill="#48a010"/><rect x="770" y="623" width="11" height="2" fill="#c09800"/><rect x="770" y="626" width="11" height="2" fill="#f05010"/><rect x="770" y="628" width="11" height="2" fill="#c09800"/><rect x="770" y="631" width="11" height="2" fill="#48a010"/><rect x="770" y="634" width="11" height="2" fill="#c09800"/><rect x="770" y="637" width="11" height="2" fill="#f05010"/><rect x="770" y="640" width="11" height="2" fill="#c09800"/><rect x="770" y="643" width="11" height="2" fill="#c09800"/><rect x="782" y="604.7" width="4.6" height="4.5" fill="#48a010"/><rect x="782" y="604.7" width="3.7" height="3.6" fill="#c09800"/><rect x="787.6" y="604.7" width="4.6" height="4.5" fill="#48a010"/><rect x="787.6" y="604.7" width="3.7" height="3.6" fill="#c09800"/><rect x="782" y="610.5" width="4.6" height="4.5" fill="#48a010"/><rect x="782" y="610.5" width="3.7" height="3.6" fill="#c09800"/><rect x="787.6" y="610.5" width="4.6" height="4.5" fill="#48a010"/><rect x="787.6" y="610.5" width="3.7" height="3.6" fill="#c09800"/><rect x="784" y="623" width="2" height="2" fill="#48a010"/><rect x="803" y="645" width="2" height="2" fill="#48a010"/><rect x="819" y="643" width="2" height="2" fill="#48a010"/><rect x="837" y="642" width="2" height="2" fill="#48a010"/><circle cx="826.8" cy="586.5" r="6.2" fill="#48a010"/><circle cx="826.8" cy="586.5" r="5.4" fill="#c09800"/><rect x="692" y="651.4" width="5.5" height="4.5" fill="#48a010"/><rect x="692" y="651.4" width="4.6" height="3.6" fill="#c09800"/><rect x="699" y="651.4" width="5.5" height="4.5" fill="#48a010"/><rect x="699" y="651.4" width="4.6" height="3.6" fill="#c09800"/><rect x="706" y="651.4" width="5.5" height="4.5" fill="#48a010"/><rect x="706" y="651.4" width="4.6" height="3.6" fill="#c09800"/><rect x="692" y="657" width="5.5" height="4.5" fill="#48a010"/><rect x="692" y="657" width="4.6" height="3.6" fill="#c09800"/><rect x="699" y="657" width="5.5" height="4.5" fill="#48a010"/><rect x="699" y="657" width="4.6" height="3.6" fill="#c09800"/><rect x="706" y="657" width="5.5" height="4.5" fill="#48a010"/><rect x="706" y="657" width="4.6" height="3.6" fill="#c09800"/><rect x="734" y="650" width="4.5" height="6" fill="#48a010"/><rect x="734" y="650" width="3.6" height="5.1" fill="#c09800"/><rect x="739.5" y="650" width="4.5" height="6" fill="#48a010"/><rect x="739.5" y="650" width="3.6" height="5.1" fill="#c09800"/><rect x="756.8" y="650" width="4.7" height="5" fill="#48a010"/><rect x="763" y="650" width="5" height="5" fill="#48a010"/><rect x="763" y="650" width="4.1" height="4.1" fill="#c09800"/><path d="M769.2 658.1 H784.8 L777 658.1 Z" fill="none"/><polygon points="773.8,658.1 780.2,658.1 784.8,662.7 784.8,669.1 780.2,673.7 773.8,673.7 769.2,669.1 769.2,662.7" fill="#c09800"/><circle cx="698.8" cy="671.8" r="6" fill="#c09800"/><rect x="498" y="643" width="3" height="10" fill="#c09800"/><rect x="503" y="643" width="2" height="10" fill="#48a010"/><rect x="508" y="643" width="2" height="10" fill="#c09800"/><rect x="512" y="643" width="2" height="10" fill="#c09800"/><rect x="516" y="643" width="3" height="10" fill="#c09800"/><rect x="521" y="643" width="2" height="10" fill="#48a010"/><rect x="526" y="643" width="2" height="10" fill="#c09800"/><rect x="530" y="643" width="2" height="10" fill="#c09800"/><rect x="534" y="643" width="3" height="10" fill="#c09800"/><rect x="539" y="643" width="2" height="10" fill="#48a010"/><rect x="544" y="643" width="2" height="10" fill="#c09800"/><rect x="548" y="643" width="2" height="10" fill="#c09800"/><rect x="552" y="643" width="3" height="10" fill="#c09800"/><rect x="557" y="643" width="2" height="10" fill="#48a010"/><rect x="562" y="643" width="2" height="10" fill="#c09800"/><rect x="566" y="643" width="2" height="10" fill="#c09800"/><rect x="570" y="643" width="3" height="10" fill="#c09800"/><rect x="575" y="643" width="2" height="10" fill="#48a010"/><rect x="580" y="643" width="2" height="10" fill="#f05010"/><rect x="584" y="643" width="2" height="10" fill="#c09800"/><rect x="588" y="643" width="3" height="10" fill="#c09800"/><rect x="593" y="643" width="2" height="10" fill="#48a010"/><rect x="598" y="643" width="2" height="10" fill="#c09800"/><rect x="602" y="643" width="2" height="10" fill="#c09800"/><rect x="606" y="643" width="3" height="10" fill="#c09800"/><rect x="611" y="643" width="2" height="10" fill="#48a010"/><rect x="616" y="643" width="2" height="10" fill="#c09800"/><rect x="562" y="659" width="4" height="5" fill="#c09800"/><rect x="567" y="658.6" width="4.5" height="4.9" fill="#48a010"/><rect x="567" y="658.6" width="3.6" height="4" fill="#c09800"/><rect x="586" y="659" width="4" height="5" fill="#c09800"/><rect x="591" y="659" width="4" height="5" fill="#c09800"/><rect x="616" y="654.4" width="5.4" height="12.6" fill="#c09800"/><rect x="616" y="654.4" width="5.4" height="1" fill="#ff0000"/><rect x="624.5" y="654.4" width="5.4" height="12.6" fill="#c09800"/><rect x="633" y="654.4" width="5.4" height="12.6" fill="#c09800"/><rect x="641.5" y="654.4" width="5.4" height="12.6" fill="#c09800"/><rect x="641.5" y="654.4" width="5.4" height="1" fill="#ff0000"/><rect x="650" y="654.4" width="5.4" height="12.6" fill="#c09800"/><rect x="658.5" y="654.4" width="5.4" height="12.6" fill="#c09800"/><rect x="667" y="654.4" width="5.4" height="12.6" fill="#c09800"/><rect x="667" y="654.4" width="5.4" height="1" fill="#ff0000"/><rect x="675.5" y="654.4" width="5.4" height="12.6" fill="#c09800"/><rect x="684" y="654.4" width="5.4" height="12.6" fill="#c09800"/><rect x="692" y="651" width="6.5" height="4.5" fill="#48a010"/><rect x="692" y="656.5" width="6.5" height="4.5" fill="#48a010"/><rect x="625" y="615.4" width="5" height="5.6" fill="#48a010"/><rect x="625" y="623" width="5" height="5.5" fill="#48a010"/><rect x="523" y="622" width="2" height="2" fill="#48a010"/><rect x="525" y="631" width="2" height="2" fill="#48a010"/><rect x="503" y="638" width="2" height="2" fill="#48a010"/><rect x="468" y="641" width="2" height="2" fill="#48a010"/><rect x="484" y="643" width="2" height="2" fill="#48a010"/></svg>
<svg class="a" style="left:0;top:0" width="1433" height="841" viewBox="0 0 1433 841"><path d="M442 55.5 H527.5 V68 H562.5 V55.5 H769 V64 H798.5 V55.5 H867 V200 H849.5 V223.5 H856.5" fill="none" stroke="#4058c0" stroke-width="1"/>
<path d="M442 55.5 V176 L461 191.5 H472.5 V606" fill="none" stroke="#4058c0" stroke-width="1"/>
<path d="M472.5 192 V606" fill="none" stroke="#40a0a0" stroke-width="1"/>
<path d="M856.5 223.5 V589" fill="none" stroke="#50a8b0" stroke-width="1.2"/>
<path d="M856.5 589 C 835 592, 826 622, 851 624.5" fill="none" stroke="#6080d0" stroke-width="1"/>
<path d="M851 624.5 C 851 660, 830 678, 803.5 678" fill="none" stroke="#f4f4c4" stroke-width="1.4"/>
<path d="M803.5 678 H502" fill="none" stroke="#4070a0" stroke-width="1.2"/>
<path d="M502 678 C 474 678, 455 660, 455 624.5" fill="none" stroke="#f4f4c4" stroke-width="1.4"/>
<path d="M455 624.5 C 466 622, 472 616, 472.5 606" fill="none" stroke="#6080d0" stroke-width="1"/>
<rect x="461.5" y="101.5" width="50" height="57" fill="none" stroke="#fff" stroke-width="1.1"/>
<path d="M461.5 101.5 L172 247 M461.5 158.5 L172 567 M492.5 158.5 L467 247 M511.5 158.5 L467 567" stroke="#fff" stroke-width="1.1"/>
<rect x="826.5" y="238.5" width="24.5" height="60.5" fill="none" stroke="#fff" stroke-width="1.1"/>
<path d="M826.5 238.5 L1043 173 M851 238.5 L1289 173 M826.5 299 L1043 414 M851 299 L1289 414" stroke="#fff" stroke-width="1.1"/>
<g transform="translate(442.5 678.5)" stroke="#fff" stroke-width="1.2" fill="none"><circle r="6.5"/><path d="M-10 0 H10 M0 -10 V10 M-8 -8 L8 8 M-8 8 L8 -8"/></g>
</svg>

<!-- RIGHT PANEL -->
<div class="a" style="left:1271px;top:53px;width:162px;height:409px;background:#000"></div>
<div class="a" style="left:1271px;top:53px;width:162px;height:2px;background:#c8f4f0"></div>
<div class="a" style="left:1271px;top:55px;width:162px;height:1px;background:#2c6c60"></div>
<div class="a" style="left:1271px;top:53px;width:2px;height:409px;background:#2c6c60"></div>
<div class="a" style="left:1271px;top:215px;width:162px;height:5px;background:#5ccdb0;border-top:1px solid #a8f0e0;border-bottom:1px solid #2c6c60"></div>
<div class="a" style="left:1271px;top:459px;width:162px;height:3px;background:#5ccdb0;border-bottom:1px solid #a8f0e0"></div>
<svg class="a" style="left:1274px;top:57px" width="38" height="38" viewBox="0 0 38 38"><rect width="38" height="38" fill="#a4dcdc"/><path d="M0 0 H38 L35 3 H3 V35 L0 38 Z" fill="#dcfcfc"/><path d="M38 0 V38 H0 L3 35 H35 V3 Z" fill="#68a4a0"/><rect x="4.65" y="4.65" width="28.7" height="28.7" fill="none" stroke="#000" stroke-width="1.3"/><path d="M12 14 H26 V28 H12 Z" fill="none" stroke="#000" stroke-width="2"/><path d="M19 7 L24 12 H22 V17 H16 V12 H14 Z" fill="#000"/></svg>
<svg class="a" style="left:1314px;top:57px" width="38" height="38" viewBox="0 0 38 38"><rect width="38" height="38" fill="#a4dcdc"/><path d="M0 0 H38 L35 3 H3 V35 L0 38 Z" fill="#dcfcfc"/><path d="M38 0 V38 H0 L3 35 H35 V3 Z" fill="#68a4a0"/><rect x="4.65" y="4.65" width="28.7" height="28.7" fill="none" stroke="#000" stroke-width="1.3"/><path d="M12 10 H26 V24 H12 Z" fill="none" stroke="#000" stroke-width="2"/><path d="M19 31 L24 26 H22 V21 H16 V26 H14 Z" fill="#000"/></svg>
<svg class="a" style="left:1354px;top:57px" width="38" height="38" viewBox="0 0 38 38"><rect width="38" height="38" fill="#a4dcdc"/><path d="M0 0 H38 L35 3 H3 V35 L0 38 Z" fill="#dcfcfc"/><path d="M38 0 V38 H0 L3 35 H35 V3 Z" fill="#68a4a0"/><rect x="4.65" y="4.65" width="28.7" height="28.7" fill="none" stroke="#000" stroke-width="1.3"/><path d="M10 18 L19 10 L28 18 M12 17 V29 H26 V17 M18 29 V22 H22 V29" fill="none" stroke="#000" stroke-width="1.6"/><rect x="14" y="20" width="2" height="2" fill="#000"/><path d="M24 9 V14 M25 8 L26 7" stroke="#000" stroke-width="1"/></svg>
<svg class="a" style="left:1394px;top:57px" width="38" height="38" viewBox="0 0 38 38"><rect width="38" height="38" fill="#a4dcdc"/><path d="M0 0 H38 L35 3 H3 V35 L0 38 Z" fill="#dcfcfc"/><path d="M38 0 V38 H0 L3 35 H35 V3 Z" fill="#68a4a0"/><rect x="4.65" y="4.65" width="28.7" height="28.7" fill="none" stroke="#000" stroke-width="1.3"/><path d="M8 8 H30 V30 H8 Z M19 8 V30 M8 25 H30" fill="none" stroke="#000" stroke-width="1.6"/><text x="21" y="23" font-size="4" font-family="Liberation Sans">xy</text></svg>
<svg class="a" style="left:1274px;top:97px" width="38" height="38" viewBox="0 0 38 38"><rect width="38" height="38" fill="#a4dcdc"/><path d="M0 0 H38 L35 3 H3 V35 L0 38 Z" fill="#dcfcfc"/><path d="M38 0 V38 H0 L3 35 H35 V3 Z" fill="#68a4a0"/><rect x="4.65" y="4.65" width="28.7" height="28.7" fill="none" stroke="#000" stroke-width="1.3"/><path d="M16 14 H26 V27 H16" fill="none" stroke="#000" stroke-width="2"/><path d="M9 20.5 L13 16 V18 H19 V23 H13 V25 Z" fill="#000"/></svg>
<svg class="a" style="left:1314px;top:97px" width="38" height="38" viewBox="0 0 38 38"><rect width="38" height="38" fill="#a4dcdc"/><path d="M0 0 H38 L35 3 H3 V35 L0 38 Z" fill="#dcfcfc"/><path d="M38 0 V38 H0 L3 35 H35 V3 Z" fill="#68a4a0"/><rect x="4.65" y="4.65" width="28.7" height="28.7" fill="none" stroke="#000" stroke-width="1.3"/><path d="M22 14 H12 V27 H22" fill="none" stroke="#000" stroke-width="2"/><path d="M29 20.5 L25 16 V18 H19 V23 H25 V25 Z" fill="#000"/></svg>
<svg class="a" style="left:1354px;top:97px" width="38" height="38" viewBox="0 0 38 38"><rect width="38" height="38" fill="#a4dcdc"/><path d="M0 0 H38 L35 3 H3 V35 L0 38 Z" fill="#dcfcfc"/><path d="M38 0 V38 H0 L3 35 H35 V3 Z" fill="#68a4a0"/><rect x="4.65" y="4.65" width="28.7" height="28.7" fill="none" stroke="#000" stroke-width="1.3"/><path d="M20 16 H27 V28 H20 Z" fill="none" stroke="#000" stroke-width="2"/><path d="M12 19 Q17 17 16 23 Q16 27 12 27" fill="none" stroke="#000" stroke-width="2.2"/><path d="M9 17.5 L13 14 V21 Z" fill="#000"/></svg>
<svg class="a" style="left:1394px;top:97px" width="38" height="38" viewBox="0 0 38 38"><rect width="38" height="38" fill="#a4dcdc"/><path d="M0 0 H38 L35 3 H3 V35 L0 38 Z" fill="#dcfcfc"/><path d="M38 0 V38 H0 L3 35 H35 V3 Z" fill="#68a4a0"/><rect x="4.65" y="4.65" width="28.7" height="28.7" fill="none" stroke="#000" stroke-width="1.3"/><path d="M32 14 H12 V21 H30 V28 H12 M8 26 L12 28 L8 31 M33 11 L30 14 L33 17" fill="none" stroke="#000" stroke-width="1.8"/></svg>
<svg class="a" style="left:1274px;top:137px" width="38" height="38" viewBox="0 0 38 38"><rect width="38" height="38" fill="#a4dcdc"/><path d="M0 0 H38 L35 3 H3 V35 L0 38 Z" fill="#dcfcfc"/><path d="M38 0 V38 H0 L3 35 H35 V3 Z" fill="#68a4a0"/><rect x="4.65" y="4.65" width="28.7" height="28.7" fill="none" stroke="#000" stroke-width="1.3"/><path d="M12 14 H26 V28 H12 Z" fill="none" stroke="#000" stroke-width="2"/></svg>
<svg class="a" style="left:1314px;top:137px" width="38" height="38" viewBox="0 0 38 38"><rect width="38" height="38" fill="#a4dcdc"/><path d="M0 0 H38 L35 3 H3 V35 L0 38 Z" fill="#dcfcfc"/><path d="M38 0 V38 H0 L3 35 H35 V3 Z" fill="#68a4a0"/><rect x="4.65" y="4.65" width="28.7" height="28.7" fill="none" stroke="#000" stroke-width="1.3"/><path d="M12 14 H24 V27 H12" fill="none" stroke="#000" stroke-width="2"/><path d="M31 20.5 L27 16 V25 Z" fill="#000"/></svg>
<svg class="a" style="left:1354px;top:137px" width="38" height="38" viewBox="0 0 38 38"><rect width="38" height="38" fill="#a4dcdc"/><path d="M0 0 H38 L35 3 H3 V35 L0 38 Z" fill="#dcfcfc"/><path d="M38 0 V38 H0 L3 35 H35 V3 Z" fill="#68a4a0"/><rect x="4.65" y="4.65" width="28.7" height="28.7" fill="none" stroke="#000" stroke-width="1.3"/><text x="19" y="25" text-anchor="middle" font-size="12" font-weight="bold" font-family="Liberation Sans">1:2</text></svg>
<svg class="a" style="left:1394px;top:137px" width="38" height="38" viewBox="0 0 38 38"><rect width="38" height="38" fill="#a4dcdc"/><path d="M0 0 H38 L35 3 H3 V35 L0 38 Z" fill="#dcfcfc"/><path d="M38 0 V38 H0 L3 35 H35 V3 Z" fill="#68a4a0"/><rect x="4.65" y="4.65" width="28.7" height="28.7" fill="none" stroke="#000" stroke-width="1.3"/><rect x="8" y="8" width="22" height="22" fill="none" stroke="#000" stroke-width="1.8"/><text x="19" y="25" text-anchor="middle" font-size="13" font-weight="bold" font-family="Liberation Sans">?</text></svg>
<svg class="a" style="left:1274px;top:177px" width="38" height="38" viewBox="0 0 38 38"><rect width="38" height="38" fill="#a4dcdc"/><path d="M0 0 H38 L35 3 H3 V35 L0 38 Z" fill="#dcfcfc"/><path d="M38 0 V38 H0 L3 35 H35 V3 Z" fill="#68a4a0"/><rect x="4.65" y="4.65" width="28.7" height="28.7" fill="none" stroke="#000" stroke-width="1.3"/></svg>
<svg class="a" style="left:1314px;top:177px" width="38" height="38" viewBox="0 0 38 38"><rect width="38" height="38" fill="#a4dcdc"/><path d="M0 0 H38 L35 3 H3 V35 L0 38 Z" fill="#dcfcfc"/><path d="M38 0 V38 H0 L3 35 H35 V3 Z" fill="#68a4a0"/><rect x="4.65" y="4.65" width="28.7" height="28.7" fill="none" stroke="#000" stroke-width="1.3"/></svg>
<svg class="a" style="left:1354px;top:177px" width="38" height="38" viewBox="0 0 38 38"><rect width="38" height="38" fill="#a4dcdc"/><path d="M0 0 H38 L35 3 H3 V35 L0 38 Z" fill="#dcfcfc"/><path d="M38 0 V38 H0 L3 35 H35 V3 Z" fill="#68a4a0"/><rect x="5.75" y="5.75" width="26.5" height="26.5" fill="none" stroke="#d01010" stroke-width="3.5"/><path d="M12 9 V17 H16 M18 9 V30" fill="none" stroke="#f00000" stroke-width="1.3"/><path d="M14 11 V22 H12" fill="none" stroke="#0010e0" stroke-width="1.3"/><circle cx="15" cy="11" r="2.3" fill="#0010e0"/><circle cx="11" cy="17" r="2.3" fill="#f00000"/><circle cx="11" cy="22" r="2.3" fill="#0010e0"/><rect x="21" y="10" width="9" height="19" fill="none" stroke="#000" stroke-width="1.3"/><circle cx="25.5" cy="14" r="2.6" fill="#f00000" stroke="#000" stroke-width="0.8"/><circle cx="25.5" cy="20" r="2" fill="none" stroke="#000" stroke-width="1"/><circle cx="25.5" cy="25.5" r="2" fill="none" stroke="#000" stroke-width="1"/></svg>
<svg class="a" style="left:1394px;top:177px" width="38" height="38" viewBox="0 0 38 38"><rect width="38" height="38" fill="#a4dcdc"/><path d="M0 0 H38 L35 3 H3 V35 L0 38 Z" fill="#dcfcfc"/><path d="M38 0 V38 H0 L3 35 H35 V3 Z" fill="#68a4a0"/><rect x="5.75" y="5.75" width="26.5" height="26.5" fill="none" stroke="#d01010" stroke-width="3.5"/><path d="M12 9 V18 M16 12 V23 H12 M12 16 H16 M13 14 V16 M14.5 14 V16" fill="none" stroke="#000" stroke-width="1.3"/><path d="M13 16 H16" stroke="#f00000" stroke-width="2"/><circle cx="16" cy="11" r="2.3" fill="#000"/><circle cx="11" cy="17" r="2.3" fill="#000"/><circle cx="11" cy="24" r="2.3" fill="#000"/><rect x="21" y="10" width="9" height="19" fill="none" stroke="#000" stroke-width="1.3"/><circle cx="25.5" cy="14" r="2.6" fill="#f00000" stroke="#000" stroke-width="0.8"/><circle cx="25.5" cy="20" r="2" fill="none" stroke="#000" stroke-width="1"/><circle cx="25.5" cy="25.5" r="2" fill="none" stroke="#000" stroke-width="1"/></svg>
<svg class="a" style="left:1274px;top:221px" width="38" height="38" viewBox="0 0 38 38"><rect width="38" height="38" fill="#c8c8c8"/><path d="M0 0 H38 L35 3 H3 V35 L0 38 Z" fill="#f8f8f8"/><path d="M38 0 V38 H0 L3 35 H35 V3 Z" fill="#808080"/><rect x="4.65" y="4.65" width="28.7" height="28.7" fill="none" stroke="#000" stroke-width="1.3"/></svg>
<svg class="a" style="left:1314px;top:221px" width="38" height="38" viewBox="0 0 38 38"><rect width="38" height="38" fill="#c8c8c8"/><path d="M0 0 H38 L35 3 H3 V35 L0 38 Z" fill="#f8f8f8"/><path d="M38 0 V38 H0 L3 35 H35 V3 Z" fill="#808080"/><rect x="4" y="4" width="30" height="30" fill="#000"/><rect x="4.65" y="4.65" width="28.7" height="28.7" fill="none" stroke="#000" stroke-width="1.3"/><path d="M4 6 H26 V20 H20" fill="none" stroke="#d00000" stroke-width="2"/><path d="M20 24 L34 18" stroke="#fff" stroke-width="1"/></svg>
<svg class="a" style="left:1354px;top:221px" width="38" height="38" viewBox="0 0 38 38"><rect width="38" height="38" fill="#c8c8c8"/><path d="M0 0 H38 L35 3 H3 V35 L0 38 Z" fill="#f8f8f8"/><path d="M38 0 V38 H0 L3 35 H35 V3 Z" fill="#808080"/><rect x="4" y="4" width="30" height="30" fill="#fff"/><rect x="4.65" y="4.65" width="28.7" height="28.7" fill="none" stroke="#000" stroke-width="1.3"/><rect x="6" y="16" width="26" height="7" fill="#000"/><path d="M8 13 V16 M11 14 V16 M14 13 V16 M17 14 V16 M20 12 V16 M23 14 V16 M26 13 V16 M29 14 V16" stroke="#000" stroke-width="0.8"/></svg>
<svg class="a" style="left:1394px;top:221px" width="38" height="38" viewBox="0 0 38 38"><rect width="38" height="38" fill="#c8c8c8"/><path d="M0 0 H38 L35 3 H3 V35 L0 38 Z" fill="#f8f8f8"/><path d="M38 0 V38 H0 L3 35 H35 V3 Z" fill="#808080"/><rect x="4" y="4" width="30" height="30" fill="#fff"/><rect x="4.65" y="4.65" width="28.7" height="28.7" fill="none" stroke="#000" stroke-width="1.3"/><rect x="8" y="8" width="22" height="22" fill="none" stroke="#000" stroke-width="1" stroke-dasharray="2,1.3"/><path d="M16 11 H22 L27 16 V22 L22 27 H16 L11 22 V16 Z" fill="#000"/></svg>
<svg class="a" style="left:1274px;top:261px" width="38" height="38" viewBox="0 0 38 38"><rect width="38" height="38" fill="#c8c8c8"/><path d="M0 0 H38 L35 3 H3 V35 L0 38 Z" fill="#f8f8f8"/><path d="M38 0 V38 H0 L3 35 H35 V3 Z" fill="#808080"/><rect x="4.65" y="4.65" width="28.7" height="28.7" fill="none" stroke="#000" stroke-width="1.3"/></svg>
<svg class="a" style="left:1314px;top:261px" width="38" height="38" viewBox="0 0 38 38"><rect width="38" height="38" fill="#c8c8c8"/><path d="M0 0 H38 L35 3 H3 V35 L0 38 Z" fill="#f8f8f8"/><path d="M38 0 V38 H0 L3 35 H35 V3 Z" fill="#808080"/><rect x="4.65" y="4.65" width="28.7" height="28.7" fill="none" stroke="#000" stroke-width="1.3"/><path d="M30 12 L25 20 L30 28" stroke="#000" stroke-width="2" fill="none"/></svg>
<svg class="a" style="left:1354px;top:261px" width="38" height="38" viewBox="0 0 38 38"><rect width="38" height="38" fill="#c8c8c8"/><path d="M0 0 H38 L35 3 H3 V35 L0 38 Z" fill="#f8f8f8"/><path d="M38 0 V38 H0 L3 35 H35 V3 Z" fill="#808080"/><rect x="4.65" y="4.65" width="28.7" height="28.7" fill="none" stroke="#000" stroke-width="1.3"/><circle cx="26" cy="11" r="4" fill="#f00000"/><circle cx="11" cy="27" r="3.2" fill="none" stroke="#0010e0" stroke-width="1.8"/><path d="M14 24 L21 17 M18 17 H21 V20" stroke="#000" stroke-width="1" fill="none"/></svg>
<svg class="a" style="left:1394px;top:261px" width="38" height="38" viewBox="0 0 38 38"><rect width="38" height="38" fill="#c8c8c8"/><path d="M0 0 H38 L35 3 H3 V35 L0 38 Z" fill="#f8f8f8"/><path d="M38 0 V38 H0 L3 35 H35 V3 Z" fill="#808080"/><rect x="4.65" y="4.65" width="28.7" height="28.7" fill="none" stroke="#000" stroke-width="1.3"/><circle cx="26" cy="11" r="4" fill="#f00000"/><circle cx="11" cy="27" r="4" fill="#0010e0"/><path d="M14 24 L21 17 M18 17 H21 V20" stroke="#000" stroke-width="1" fill="none"/></svg>
<svg class="a" style="left:1274px;top:301px" width="38" height="38" viewBox="0 0 38 38"><rect width="38" height="38" fill="#c8c8c8"/><path d="M0 0 H38 L35 3 H3 V35 L0 38 Z" fill="#f8f8f8"/><path d="M38 0 V38 H0 L3 35 H35 V3 Z" fill="#808080"/><rect x="4.65" y="4.65" width="28.7" height="28.7" fill="none" stroke="#000" stroke-width="1.3"/></svg>
<svg class="a" style="left:1314px;top:301px" width="38" height="38" viewBox="0 0 38 38"><rect width="38" height="38" fill="#c8c8c8"/><path d="M0 0 H38 L35 3 H3 V35 L0 38 Z" fill="#f8f8f8"/><path d="M38 0 V38 H0 L3 35 H35 V3 Z" fill="#808080"/><rect x="4.65" y="4.65" width="28.7" height="28.7" fill="none" stroke="#000" stroke-width="1.3"/><path d="M26 12 L30 8" stroke="#e00000" stroke-width="2"/><path d="M24 18 L26 20" stroke="#000" stroke-width="2"/></svg>
<svg class="a" style="left:1354px;top:301px" width="38" height="38" viewBox="0 0 38 38"><rect width="38" height="38" fill="#c8c8c8"/><path d="M0 0 H38 L35 3 H3 V35 L0 38 Z" fill="#f8f8f8"/><path d="M38 0 V38 H0 L3 35 H35 V3 Z" fill="#808080"/><rect x="4.65" y="4.65" width="28.7" height="28.7" fill="none" stroke="#000" stroke-width="1.3"/><path d="M17 12 Q24 12 24 19 Q24 26 17 26" fill="none" stroke="#000" stroke-width="1.4"/><path d="M14 26 L18 23 V29 Z" fill="#000"/></svg>
<svg class="a" style="left:1394px;top:301px" width="38" height="38" viewBox="0 0 38 38"><rect width="38" height="38" fill="#c8c8c8"/><path d="M0 0 H38 L35 3 H3 V35 L0 38 Z" fill="#f8f8f8"/><path d="M38 0 V38 H0 L3 35 H35 V3 Z" fill="#808080"/><rect x="4.65" y="4.65" width="28.7" height="28.7" fill="none" stroke="#000" stroke-width="1.3"/><path d="M9 11 H16 M9 17 H15 M15 11 V26 M19 9 V29" stroke="#0010e0" stroke-width="2" fill="none"/><path d="M22 11 V29 M22 11 H30 M22 18 H28" stroke="#f00000" stroke-width="2" fill="none"/></svg>
<svg class="a" style="left:1274px;top:341px" width="38" height="38" viewBox="0 0 38 38"><rect width="38" height="38" fill="#c8c8c8"/><path d="M0 0 H38 L35 3 H3 V35 L0 38 Z" fill="#f8f8f8"/><path d="M38 0 V38 H0 L3 35 H35 V3 Z" fill="#808080"/><rect x="4.65" y="4.65" width="28.7" height="28.7" fill="none" stroke="#000" stroke-width="1.3"/></svg>
<svg class="a" style="left:1314px;top:341px" width="38" height="38" viewBox="0 0 38 38"><rect width="38" height="38" fill="#c8c8c8"/><path d="M0 0 H38 L35 3 H3 V35 L0 38 Z" fill="#f8f8f8"/><path d="M38 0 V38 H0 L3 35 H35 V3 Z" fill="#808080"/><rect x="4.65" y="4.65" width="28.7" height="28.7" fill="none" stroke="#000" stroke-width="1.3"/><path d="M24 19 H31" stroke="#e00000" stroke-width="2"/></svg>
<svg class="a" style="left:1354px;top:341px" width="38" height="38" viewBox="0 0 38 38"><rect width="38" height="38" fill="#c8c8c8"/><path d="M0 0 H38 L35 3 H3 V35 L0 38 Z" fill="#f8f8f8"/><path d="M38 0 V38 H0 L3 35 H35 V3 Z" fill="#808080"/><rect x="4.65" y="4.65" width="28.7" height="28.7" fill="none" stroke="#000" stroke-width="1.3"/><path d="M9 9 V30 M29 9 V30 M10 19 H28 M10 19 L13 17 M10 19 L13 21 M28 19 L25 17 M28 19 L25 21" stroke="#000" stroke-width="1" fill="none"/><path d="M10 19 H28" stroke="#0010e0" stroke-width="1"/><rect x="15" y="15" width="8" height="8" fill="#c8c8c8" stroke="#0010e0" stroke-width="1"/><text x="19" y="22" text-anchor="middle" font-size="6" fill="#0010e0" font-family="Liberation Sans">4</text></svg>
<svg class="a" style="left:1394px;top:341px" width="38" height="38" viewBox="0 0 38 38"><rect width="38" height="38" fill="#c8c8c8"/><path d="M0 0 H38 L35 3 H3 V35 L0 38 Z" fill="#f8f8f8"/><path d="M38 0 V38 H0 L3 35 H35 V3 Z" fill="#808080"/><rect x="4.65" y="4.65" width="28.7" height="28.7" fill="none" stroke="#000" stroke-width="1.3"/><path d="M8 11 H19 V16 H29 V29 H13 V22 H8 Z" fill="#0010e0"/><circle cx="13" cy="15" r="3" fill="#c8c8c8"/><circle cx="23" cy="23" r="4" fill="#c8c8c8"/></svg>
<svg class="a" style="left:1274px;top:381px" width="38" height="38" viewBox="0 0 38 38"><rect width="38" height="38" fill="#c8c8c8"/><path d="M0 0 H38 L35 3 H3 V35 L0 38 Z" fill="#f8f8f8"/><path d="M38 0 V38 H0 L3 35 H35 V3 Z" fill="#808080"/><rect x="4.65" y="4.65" width="28.7" height="28.7" fill="none" stroke="#000" stroke-width="1.3"/></svg>
<svg class="a" style="left:1314px;top:381px" width="38" height="38" viewBox="0 0 38 38"><rect width="38" height="38" fill="#c8c8c8"/><path d="M0 0 H38 L35 3 H3 V35 L0 38 Z" fill="#f8f8f8"/><path d="M38 0 V38 H0 L3 35 H35 V3 Z" fill="#808080"/><rect x="4.65" y="4.65" width="28.7" height="28.7" fill="none" stroke="#000" stroke-width="1.3"/><path d="M24 14 L32 30" stroke="#e00000" stroke-width="2"/><path d="M26 30 L32 24" stroke="#0010e0" stroke-width="2"/></svg>
<svg class="a" style="left:1354px;top:381px" width="38" height="38" viewBox="0 0 38 38"><rect width="38" height="38" fill="#c8c8c8"/><path d="M0 0 H38 L35 3 H3 V35 L0 38 Z" fill="#f8f8f8"/><path d="M38 0 V38 H0 L3 35 H35 V3 Z" fill="#808080"/><rect x="4.65" y="4.65" width="28.7" height="28.7" fill="none" stroke="#000" stroke-width="1.3"/><path d="M8 30 L15 10 H23 L30 30" fill="none" stroke="#f00000" stroke-width="3"/><path d="M7 26 H31" stroke="#0010e0" stroke-width="2.2"/><path d="M19 20 V15 M17 17 L19 14 L21 17" stroke="#000" stroke-width="1" fill="none"/></svg>
<svg class="a" style="left:1394px;top:381px" width="38" height="38" viewBox="0 0 38 38"><rect width="38" height="38" fill="#c8c8c8"/><path d="M0 0 H38 L35 3 H3 V35 L0 38 Z" fill="#f8f8f8"/><path d="M38 0 V38 H0 L3 35 H35 V3 Z" fill="#808080"/><rect x="4.65" y="4.65" width="28.7" height="28.7" fill="none" stroke="#000" stroke-width="1.3"/><path d="M10 26 L15 10 H23 L28 26" fill="none" stroke="#f00000" stroke-width="3"/><path d="M6 26 H32 M7 24 L11 28 M11 24 L7 28 M27 24 L31 28 M31 24 L27 28" stroke="#0010e0" stroke-width="2"/><path d="M19 20 V15 M17 17 L19 14 L21 17" stroke="#000" stroke-width="1" fill="none"/></svg>
<svg class="a" style="left:1274px;top:421px" width="38" height="38" viewBox="0 0 38 38"><rect width="38" height="38" fill="#fcc44c"/><path d="M0 0 H38 L35 3 H3 V35 L0 38 Z" fill="#fff0c0"/><path d="M38 0 V38 H0 L3 35 H35 V3 Z" fill="#a08030"/><rect x="4.65" y="4.65" width="28.7" height="28.7" fill="none" stroke="#000" stroke-width="1.3"/><path d="M22 10 H28 V28 H22" fill="none" stroke="#e00000" stroke-width="2"/></svg>
<svg class="a" style="left:1314px;top:421px" width="38" height="38" viewBox="0 0 38 38"><rect width="38" height="38" fill="#fcc44c"/><path d="M0 0 H38 L35 3 H3 V35 L0 38 Z" fill="#fff0c0"/><path d="M38 0 V38 H0 L3 35 H35 V3 Z" fill="#a08030"/><rect x="4.65" y="4.65" width="28.7" height="28.7" fill="none" stroke="#000" stroke-width="1.3"/><path d="M26 10 V28" stroke="#e00000" stroke-width="2"/></svg>
<svg class="a" style="left:1354px;top:421px" width="38" height="38" viewBox="0 0 38 38"><rect width="38" height="38" fill="#fcc44c"/><path d="M0 0 H38 L35 3 H3 V35 L0 38 Z" fill="#fff0c0"/><path d="M38 0 V38 H0 L3 35 H35 V3 Z" fill="#a08030"/><rect x="4.65" y="4.65" width="28.7" height="28.7" fill="none" stroke="#000" stroke-width="1.3"/><path d="M13 8 H26 L30 12 V26 L26 30 H13 L9 26 V12 Z" fill="none" stroke="#e00000" stroke-width="1.8"/><path d="M15 13 L15 26 L18 23 L21 29 L23 28 L20 22 L24 22 Z" fill="#000"/></svg>
<svg class="a" style="left:1394px;top:421px" width="38" height="38" viewBox="0 0 38 38"><rect width="38" height="38" fill="#fcc44c"/><path d="M0 0 H38 L35 3 H3 V35 L0 38 Z" fill="#fff0c0"/><path d="M38 0 V38 H0 L3 35 H35 V3 Z" fill="#a08030"/><rect x="4.65" y="4.65" width="28.7" height="28.7" fill="none" stroke="#000" stroke-width="1.3"/><path d="M12 8 V20 M12 24 V30 M14 26 H18 V16 H23 V12 H28" fill="none" stroke="#000" stroke-width="1"/><circle cx="11" cy="22" r="2.2" fill="#e00000"/><circle cx="11" cy="27" r="2.2" fill="#20c020"/><circle cx="29" cy="11" r="2.2" fill="#20c020"/><path d="M21 17 L21 30 L24 27 L27 32 L29 31 L26 26 L30 26 Z" fill="#000"/></svg>
<div class="a" style="left:1272px;top:462px;width:1px;height:264px;background:#4c7c74"></div>
<div class="a" style="left:1272px;top:537px;width:161px;height:1px;background:#4a8a30"></div>
<div class="a" style="left:1272px;top:653px;width:161px;height:1px;background:#4a8a30"></div>
<div class="a" style="left:1273px;top:538px;width:1px;height:115px;background:#4a8a30"></div>
<div class="a" style="left:1274px;top:542px;width:105px;height:85px;background:#ff0000"></div>
<svg class="a" style="left:0;top:0" width="1433" height="841" viewBox="0 0 1433 841"><path d="M1281 543.5 H1290 L1291.5 545 H1295 L1296.5 543.5 H1318 L1319.5 545 H1323 L1324.5 543.5 H1330.5 V557.5 L1329 559.5 V564 L1330 565.5 V604.5 L1328 606.5 V610 L1329 611 Q1329 617.5 1322 617.5 H1287 Q1283 617.5 1283 613 V610 L1284 608 V607.5 L1282.5 606 V592 L1281.2 590 V583 L1282.8 581 V566 L1284 564 V559.5 L1281 557.5 Z" fill="none" stroke="#40e8f0" stroke-width="1.8"/><path d="M1330.2 566 V604" stroke="#b0b0b0" stroke-width="1.3"/><path d="M1278 614 L1285 620.5 M1285 614 L1278 620.5" stroke="#e0a0a0" stroke-width="0.8"/></svg>
<div class="a" style="left:1271px;top:726px;width:162px;height:47px;background:#000"></div>
<div class="a mono" style="left:1272px;top:727px;width:161px;height:44px;background:#58c8a8;border-top:2px solid #b8f4e4;border-left:1px solid #b8f4e4;font-size:14px;letter-spacing:0.5px;line-height:15px;padding:8px 0 0 3px;color:#000;white-space:pre">X = 1.074332"
Y = 2.584605"</div>
<!-- POPUPS -->
<div class="a" style="left:162px;top:215px;width:352px;height:392px;border-radius:7px 7px 5px 5px;border:1px solid #c8ccd0;background:linear-gradient(180deg,#9aa0a4 0px,#6c7276 26px,#2a2e32 40px,#1a1d20 100%)"></div>
<div class="a" style="left:163px;top:216px;width:350px;height:26px;border-radius:6px 6px 0 0;background:radial-gradient(ellipse 120px 20px at 70px 13px,rgba(220,224,228,0.6),rgba(200,205,210,0) 100%),linear-gradient(90deg,rgba(0,0,0,0) 0px,rgba(0,0,0,0) 95px,rgba(20,24,30,0.8) 160px,rgba(20,24,30,0.8) 200px,rgba(60,64,70,0.2) 250px,rgba(60,64,70,0.2) 280px,rgba(20,24,30,0.5) 310px,rgba(20,24,30,0.4) 350px)"></div>
<svg class="a" style="left:169px;top:222px" width="16" height="15" viewBox="0 0 16 15"><rect x="0.5" y="0.5" width="15" height="14" fill="#fff" stroke="#444" stroke-width="1"/><rect x="1" y="1" width="14" height="2.5" fill="#101880"/><path d="M4 6 L12 13 M12 6 L4 13" stroke="#c8c800" stroke-width="2"/></svg>
<div class="a" style="left:190px;top:221px;font-family:'Liberation Sans';font-size:13.3px;color:#000;white-space:pre">Popview - 2</div>
<div class="a" style="left:167px;top:242px;width:341px;height:361px;background:#000;border-left:1px solid #d0d4d8;border-top:1px solid #d0d4d8;border-right:1px solid #d0d4d8;border-bottom:1px solid #d0d4d8"></div>
<div class="a" style="left:168px;top:243px;width:299px;height:324px;background:#3c7c6c"></div>
<div class="a" style="left:168px;top:567px;width:302px;height:3px;background:#c8f4ec"></div>
<div class="a" style="left:467px;top:243px;width:3px;height:327px;background:#c8f4ec"></div>
<svg class="a" style="left:172px;top:247px" width="295" height="320" viewBox="0 0 295 320"><rect width="100%" height="100%" fill="#000"/><path d="M253 0 A42 42 0 0 0 295 15 V0 Z" fill="#c09800"/><rect x="126" y="39" width="88" height="174" fill="#ff0000"/><rect x="122" y="27" width="94" height="199" rx="47" ry="47" fill="#48a010"/><clipPath id="cp2"><rect x="126" y="39" width="88" height="174"/></clipPath><rect x="124" y="27" width="90" height="199" rx="45" ry="45" fill="#c09800" clip-path="url(#cp2)"/><rect x="242" y="190" width="53" height="42" fill="#e01000"/><rect x="244" y="190" width="51" height="40" fill="#c09800"/><rect x="242" y="286" width="53" height="34" fill="#e01000"/><rect x="244" y="288" width="51" height="32" fill="#c09800"/><rect x="54" y="299" width="20" height="21" fill="#c09800"/><rect x="85" y="299" width="20" height="21" fill="#c09800"/></svg>
<svg class="a" style="left:472px;top:246px" width="33" height="34" viewBox="0 0 33 34"><rect width="33" height="34" fill="#5ccdb0"/><path d="M1 1 H32 L28 5 H5 V29 L1 33 Z" fill="#c8f8ec"/><path d="M32 1 V33 H1 L5 29 H28 V5 Z" fill="#3c9c84"/><rect x="5" y="5" width="23" height="24" fill="#a4dcdc"/><rect x="6.5" y="7" width="20" height="20" fill="none" stroke="#000" stroke-width="1.5"/><rect x="10" y="14" width="9.5" height="9.5" fill="none" stroke="#000" stroke-width="2.4"/><path d="M12.5 18.7 H17 M12.5 18.7 L14.5 16.7 M12.5 18.7 L14.5 20.7" stroke="#000" stroke-width="1" fill="none"/><rect x="19.8" y="9.3" width="5" height="5" fill="none" stroke="#000" stroke-width="1.3"/><path d="M19.5 18.5 H22 V14.5" stroke="#000" stroke-width="1.2" fill="none"/></svg>
<svg class="a" style="left:472px;top:281px" width="33" height="34" viewBox="0 0 33 34"><rect width="33" height="34" fill="#5ccdb0"/><path d="M1 1 H32 L28 5 H5 V29 L1 33 Z" fill="#c8f8ec"/><path d="M32 1 V33 H1 L5 29 H28 V5 Z" fill="#3c9c84"/><rect x="5" y="5" width="23" height="24" fill="#a4dcdc"/><rect x="6.5" y="7" width="20" height="20" fill="none" stroke="#000" stroke-width="1.5"/><path d="M10.5 15 V24 H22.5 V15" fill="none" stroke="#000" stroke-width="2.4"/><path d="M16.5 8.5 L21.5 13.5 H19.5 V20 H13.5 V13.5 H11.5 Z" fill="#000"/></svg>
<svg class="a" style="left:472px;top:316px" width="33" height="34" viewBox="0 0 33 34"><rect width="33" height="34" fill="#5ccdb0"/><path d="M1 1 H32 L28 5 H5 V29 L1 33 Z" fill="#c8f8ec"/><path d="M32 1 V33 H1 L5 29 H28 V5 Z" fill="#3c9c84"/><rect x="5" y="5" width="23" height="24" fill="#a4dcdc"/><rect x="6.5" y="7" width="20" height="20" fill="none" stroke="#000" stroke-width="1.5"/><path d="M10.5 19 V10 H22.5 V19" fill="none" stroke="#000" stroke-width="2.4"/><path d="M16.5 25.5 L21.5 20.5 H19.5 V14 H13.5 V20.5 H11.5 Z" fill="#000"/></svg>
<svg class="a" style="left:472px;top:351px" width="33" height="34" viewBox="0 0 33 34"><rect width="33" height="34" fill="#5ccdb0"/><path d="M1 1 H32 L28 5 H5 V29 L1 33 Z" fill="#c8f8ec"/><path d="M32 1 V33 H1 L5 29 H28 V5 Z" fill="#3c9c84"/><rect x="5" y="5" width="23" height="24" fill="#a4dcdc"/><rect x="6.5" y="7" width="20" height="20" fill="none" stroke="#000" stroke-width="1.5"/><path d="M14.5 11 H22.5 V23 H14.5" fill="none" stroke="#000" stroke-width="2.4"/><path d="M8 17 L13 12 V14 H19 V20 H13 V22 Z" fill="#000"/></svg>
<svg class="a" style="left:472px;top:386px" width="33" height="34" viewBox="0 0 33 34"><rect width="33" height="34" fill="#5ccdb0"/><path d="M1 1 H32 L28 5 H5 V29 L1 33 Z" fill="#c8f8ec"/><path d="M32 1 V33 H1 L5 29 H28 V5 Z" fill="#3c9c84"/><rect x="5" y="5" width="23" height="24" fill="#a4dcdc"/><rect x="6.5" y="7" width="20" height="20" fill="none" stroke="#000" stroke-width="1.5"/><path d="M18.5 11 H10.5 V23 H18.5" fill="none" stroke="#000" stroke-width="2.4"/><path d="M25 17 L20 12 V14 H14 V20 H20 V22 Z" fill="#000"/></svg>
<svg class="a" style="left:472px;top:421px" width="33" height="34" viewBox="0 0 33 34"><rect width="33" height="34" fill="#5ccdb0"/><path d="M1 1 H32 L28 5 H5 V29 L1 33 Z" fill="#c8f8ec"/><path d="M32 1 V33 H1 L5 29 H28 V5 Z" fill="#3c9c84"/><rect x="5" y="5" width="23" height="24" fill="#a4dcdc"/><rect x="6.5" y="7" width="20" height="20" fill="none" stroke="#000" stroke-width="1.5"/><rect x="14.2" y="14.7" width="4.6" height="4.6" fill="none" stroke="#000" stroke-width="1.5"/><path d="M8.5 11.5 L13.5 17 L8.5 22.5 Z M24.5 11.5 L19.5 17 L24.5 22.5 Z M11 9 L16.5 13.5 L22 9 Z M11 25 L16.5 20.5 L22 25 Z" fill="#000"/></svg>
<svg class="a" style="left:472px;top:456px" width="33" height="34" viewBox="0 0 33 34"><rect width="33" height="34" fill="#5ccdb0"/><path d="M1 1 H32 L28 5 H5 V29 L1 33 Z" fill="#c8f8ec"/><path d="M32 1 V33 H1 L5 29 H28 V5 Z" fill="#3c9c84"/><rect x="5" y="5" width="23" height="24" fill="#a4dcdc"/><rect x="6.5" y="7" width="20" height="20" fill="none" stroke="#000" stroke-width="1.5"/><rect x="14.2" y="14.7" width="4.6" height="4.6" fill="none" stroke="#000" stroke-width="1.5"/><path d="M16.5 8.5 L20.5 12.5 H12.5 Z M16.5 25.5 L20.5 21.5 H12.5 Z M8 17 L12 13 V21 Z M25 17 L21 13 V21 Z" fill="#000"/></svg>
<div class="a" style="left:472px;top:491px;width:35px;height:79px;background:#5ccdb0"></div>
<div class="a" style="left:170px;top:573px;width:338px;height:27px;background:#5ccdb0"></div>
<div class="a mono" style="left:172px;top:574px;width:334px;height:25px;background:#9cd8d8;border-top:3px solid #d8fcf8;border-left:3px solid #d8fcf8;border-right:3px solid #3c8c7c;border-bottom:3px solid #3c8c7c;font-size:14.6px;line-height:23px;text-align:center;color:#000;overflow:hidden">Close</div>
<div class="a" style="left:1033px;top:141px;width:303px;height:311px;border-radius:7px 7px 5px 5px;border:1px solid #b8bcc0;backdrop-filter:blur(5px);-webkit-backdrop-filter:blur(5px);background:linear-gradient(180deg,rgba(110,116,124,0.5) 0px,rgba(100,106,114,0.45) 26px,rgba(185,195,210,0.42) 40px,rgba(185,195,210,0.42) 100%)"></div>
<div class="a" style="left:1034px;top:142px;width:301px;height:26px;border-radius:6px 6px 0 0;background:radial-gradient(ellipse 110px 20px at 80px 13px,rgba(150,154,158,0.7),rgba(120,124,128,0) 100%)"></div>
<svg class="a" style="left:1040px;top:148px" width="16" height="15" viewBox="0 0 16 15"><rect x="0.5" y="0.5" width="15" height="14" fill="#fff" stroke="#444" stroke-width="1"/><rect x="1" y="1" width="14" height="2.5" fill="#101880"/><path d="M4 6 L12 13 M12 6 L4 13" stroke="#c8c800" stroke-width="2"/></svg>
<div class="a" style="left:1061px;top:147px;font-family:'Liberation Sans';font-size:13.3px;color:#000;white-space:pre">Popview - 1</div>
<div class="a" style="left:1038px;top:168px;width:292px;height:280px;background:#000;border-left:1px solid #d0d4d8;border-top:1px solid #d0d4d8;border-right:1px solid #d0d4d8;border-bottom:1px solid #d0d4d8"></div>
<div class="a" style="left:1039px;top:169px;width:250px;height:245px;background:#3c7c6c"></div>
<div class="a" style="left:1039px;top:414px;width:253px;height:3px;background:#c8f4ec"></div>
<div class="a" style="left:1289px;top:169px;width:3px;height:248px;background:#c8f4ec"></div>
<svg class="a" style="left:1043px;top:173px" width="246" height="241" viewBox="0 0 246 241"><rect width="100%" height="100%" fill="#000"/><rect x="2" y="1" width="69" height="33" fill="#c09800"/><rect x="86" y="29" width="61" height="121" fill="#ff0000"/><rect x="84" y="20" width="65" height="139" rx="32" ry="32" fill="#48a010"/><clipPath id="cp1"><rect x="86" y="29" width="61" height="121"/></clipPath><rect x="85" y="20" width="63" height="139" rx="31" ry="31" fill="#c09800" clip-path="url(#cp1)"/><rect x="191" y="0" width="7" height="241" fill="#3c8c3c"/></svg>
<svg class="a" style="left:1294px;top:172px" width="33" height="34" viewBox="0 0 33 34"><rect width="33" height="34" fill="#5ccdb0"/><path d="M1 1 H32 L28 5 H5 V29 L1 33 Z" fill="#c8f8ec"/><path d="M32 1 V33 H1 L5 29 H28 V5 Z" fill="#3c9c84"/><rect x="5" y="5" width="23" height="24" fill="#a4dcdc"/><rect x="6.5" y="7" width="20" height="20" fill="none" stroke="#000" stroke-width="1.5"/><rect x="10" y="14" width="9.5" height="9.5" fill="none" stroke="#000" stroke-width="2.4"/><path d="M12.5 18.7 H17 M12.5 18.7 L14.5 16.7 M12.5 18.7 L14.5 20.7" stroke="#000" stroke-width="1" fill="none"/><rect x="19.8" y="9.3" width="5" height="5" fill="none" stroke="#000" stroke-width="1.3"/><path d="M19.5 18.5 H22 V14.5" stroke="#000" stroke-width="1.2" fill="none"/></svg>
<svg class="a" style="left:1294px;top:207px" width="33" height="34" viewBox="0 0 33 34"><rect width="33" height="34" fill="#5ccdb0"/><path d="M1 1 H32 L28 5 H5 V29 L1 33 Z" fill="#c8f8ec"/><path d="M32 1 V33 H1 L5 29 H28 V5 Z" fill="#3c9c84"/><rect x="5" y="5" width="23" height="24" fill="#a4dcdc"/><rect x="6.5" y="7" width="20" height="20" fill="none" stroke="#000" stroke-width="1.5"/><path d="M10.5 15 V24 H22.5 V15" fill="none" stroke="#000" stroke-width="2.4"/><path d="M16.5 8.5 L21.5 13.5 H19.5 V20 H13.5 V13.5 H11.5 Z" fill="#000"/></svg>
<svg class="a" style="left:1294px;top:242px" width="33" height="34" viewBox="0 0 33 34"><rect width="33" height="34" fill="#5ccdb0"/><path d="M1 1 H32 L28 5 H5 V29 L1 33 Z" fill="#c8f8ec"/><path d="M32 1 V33 H1 L5 29 H28 V5 Z" fill="#3c9c84"/><rect x="5" y="5" width="23" height="24" fill="#a4dcdc"/><rect x="6.5" y="7" width="20" height="20" fill="none" stroke="#000" stroke-width="1.5"/><path d="M10.5 19 V10 H22.5 V19" fill="none" stroke="#000" stroke-width="2.4"/><path d="M16.5 25.5 L21.5 20.5 H19.5 V14 H13.5 V20.5 H11.5 Z" fill="#000"/></svg>
<svg class="a" style="left:1294px;top:277px" width="33" height="34" viewBox="0 0 33 34"><rect width="33" height="34" fill="#5ccdb0"/><path d="M1 1 H32 L28 5 H5 V29 L1 33 Z" fill="#c8f8ec"/><path d="M32 1 V33 H1 L5 29 H28 V5 Z" fill="#3c9c84"/><rect x="5" y="5" width="23" height="24" fill="#a4dcdc"/><rect x="6.5" y="7" width="20" height="20" fill="none" stroke="#000" stroke-width="1.5"/><path d="M14.5 11 H22.5 V23 H14.5" fill="none" stroke="#000" stroke-width="2.4"/><path d="M8 17 L13 12 V14 H19 V20 H13 V22 Z" fill="#000"/></svg>
<svg class="a" style="left:1294px;top:312px" width="33" height="34" viewBox="0 0 33 34"><rect width="33" height="34" fill="#5ccdb0"/><path d="M1 1 H32 L28 5 H5 V29 L1 33 Z" fill="#c8f8ec"/><path d="M32 1 V33 H1 L5 29 H28 V5 Z" fill="#3c9c84"/><rect x="5" y="5" width="23" height="24" fill="#a4dcdc"/><rect x="6.5" y="7" width="20" height="20" fill="none" stroke="#000" stroke-width="1.5"/><path d="M18.5 11 H10.5 V23 H18.5" fill="none" stroke="#000" stroke-width="2.4"/><path d="M25 17 L20 12 V14 H14 V20 H20 V22 Z" fill="#000"/></svg>
<svg class="a" style="left:1294px;top:347px" width="33" height="34" viewBox="0 0 33 34"><rect width="33" height="34" fill="#5ccdb0"/><path d="M1 1 H32 L28 5 H5 V29 L1 33 Z" fill="#c8f8ec"/><path d="M32 1 V33 H1 L5 29 H28 V5 Z" fill="#3c9c84"/><rect x="5" y="5" width="23" height="24" fill="#a4dcdc"/><rect x="6.5" y="7" width="20" height="20" fill="none" stroke="#000" stroke-width="1.5"/><rect x="14.2" y="14.7" width="4.6" height="4.6" fill="none" stroke="#000" stroke-width="1.5"/><path d="M8.5 11.5 L13.5 17 L8.5 22.5 Z M24.5 11.5 L19.5 17 L24.5 22.5 Z M11 9 L16.5 13.5 L22 9 Z M11 25 L16.5 20.5 L22 25 Z" fill="#000"/></svg>
<svg class="a" style="left:1294px;top:382px" width="33" height="34" viewBox="0 0 33 34"><rect width="33" height="34" fill="#5ccdb0"/><path d="M1 1 H32 L28 5 H5 V29 L1 33 Z" fill="#c8f8ec"/><path d="M32 1 V33 H1 L5 29 H28 V5 Z" fill="#3c9c84"/><rect x="5" y="5" width="23" height="24" fill="#a4dcdc"/><rect x="6.5" y="7" width="20" height="20" fill="none" stroke="#000" stroke-width="1.5"/><rect x="14.2" y="14.7" width="4.6" height="4.6" fill="none" stroke="#000" stroke-width="1.5"/><path d="M16.5 8.5 L20.5 12.5 H12.5 Z M16.5 25.5 L20.5 21.5 H12.5 Z M8 17 L12 13 V21 Z M25 17 L21 13 V21 Z" fill="#000"/></svg>
<div class="a" style="left:1039px;top:417px;width:290px;height:28px;background:#5ccdb0"></div>
<div class="a mono" style="left:1041px;top:418px;width:286px;height:26px;background:#9cd8d8;border-top:3px solid #d8fcf8;border-left:3px solid #d8fcf8;border-right:3px solid #3c8c7c;border-bottom:3px solid #3c8c7c;font-size:14.6px;line-height:24px;text-align:center;color:#000;overflow:hidden">Close</div>
<div class="a" style="left:461px;top:215px;width:47px;height:19px;border-radius:0 0 5px 5px;border:1px solid #602020;background:linear-gradient(180deg,#e8a090 0%,#d87060 45%,#c03018 55%,#d05030 100%)"></div>
<div class="a" style="left:476px;top:216px;font-family:'Liberation Sans';font-weight:bold;font-size:15px;color:#fff;text-shadow:0 0 2px #400">x</div>
<div class="a" style="left:1283px;top:141px;width:47px;height:19px;border-radius:0 0 5px 5px;border:1px solid rgba(80,90,100,0.7);background:linear-gradient(180deg,rgba(200,230,240,0.35),rgba(120,160,180,0.3))"></div>
<div class="a" style="left:1299px;top:141px;font-family:'Liberation Sans';font-weight:bold;font-size:15px;color:#f0f0f0;text-shadow:0 0 2px #333">x</div>
<!-- BOTTOM BAR -->
<div class="a" style="left:0;top:773px;width:1433px;height:68px;background:#fffbd0"></div>
<div class="a" style="left:0;top:773px;width:1354px;height:1px;background:#000"></div>
<!-- btn1 -->
<div class="a" style="left:0;top:774px;width:27px;height:30px;background:#fffbd0;border:2px solid #c8c8a0"></div>
<svg class="a" style="left:2px;top:778px" width="21" height="22" viewBox="0 0 21 22"><rect x="1" y="1" width="19" height="20" fill="none" stroke="#000" stroke-width="1.6"/><path d="M5 5 L15 15 M5 5 L5 9 M5 5 L9 5 M15 15 L15 11 M15 15 L11 15 M4 4 L4 18 L17 18" fill="none" stroke="#000" stroke-width="1.3"/></svg>
<div class="a" style="left:27px;top:774px;width:2px;height:31px;background:#000"></div>
<!-- btn2 -->
<div class="a" style="left:29px;top:774px;width:30px;height:30px;background:#fffbd0;border:2px solid #c8c8a0"></div>
<svg class="a" style="left:33px;top:778px" width="22" height="22" viewBox="0 0 22 22"><rect x="1" y="1" width="20" height="20" fill="none" stroke="#000" stroke-width="1.6"/><path d="M3 18 L16 5 M3 18 L13 18 M9 7 L9 11 L11 11" fill="none" stroke="#000" stroke-width="1.3"/><text x="12" y="17" font-size="6" font-family="Liberation Sans" font-weight="bold">dx</text></svg>
<div class="a" style="left:0;top:804px;width:59px;height:2px;background:#fffbd0"></div>
<div class="a" style="left:59px;top:774px;width:2px;height:31px;background:#000"></div>
<!-- btn3 -->
<div class="a" style="left:61px;top:774px;width:28px;height:31px;background:#e8f0c8;border:3px solid #5aa898"></div>
<svg class="a" style="left:66px;top:779px" width="18" height="18" viewBox="0 0 18 18"><path d="M5 1 L17 1 L17 17 L1 17 L1 5 Z M9 1 L9 17 M1 9 L17 9" fill="none" stroke="#000" stroke-width="1.5"/></svg>
<div class="a" style="left:89px;top:774px;width:1px;height:31px;background:#000"></div>
<div class="a mono" style="left:93px;top:784px;font-size:12.3px;letter-spacing:-0.3px;color:#000;white-space:pre">X Y :</div>
<div class="a" style="left:137px;top:774px;width:2px;height:31px;background:#000"></div>
<!-- input -->
<div class="a" style="left:139px;top:774px;width:170px;height:30px;background:#fffbd0;border-top:3px solid #b8b898;border-left:3px solid #b8b898;border-right:3px solid #e8e8c8;border-bottom:3px solid #e8e8c8"></div>
<div class="a" style="left:147px;top:778px;width:1px;height:15px;border-left:1px dotted #000"></div>
<div class="a" style="left:309px;top:774px;width:2px;height:31px;background:#000"></div>
<!-- ! btn -->
<div class="a" style="left:311px;top:774px;width:32px;height:31px;background:#fffbd0;border:4px solid #5aa898"></div>
<div class="a" style="left:318px;top:780px;width:18px;height:19px;border:1.5px solid #000"></div>
<div class="a" style="left:326px;top:783px;width:2px;height:9px;background:#000"></div>
<div class="a" style="left:326px;top:794px;width:2px;height:2px;background:#000"></div>
<div class="a" style="left:343px;top:774px;width:2px;height:31px;background:#000"></div>
<div class="a mono" style="left:346px;top:784px;font-size:12.3px;letter-spacing:-0.38px;color:#000;white-space:pre">&lt;M1&gt; - Select first area corner</div>
<!-- inch -->
<div class="a" style="left:1354px;top:773px;width:2px;height:33px;background:#000"></div>
<div class="a" style="left:1356px;top:773px;width:77px;height:33px;background:#58c8a8"></div>
<div class="a mono" style="left:1362px;top:776px;width:70px;height:28px;background:#58c8a8;border-top:2px solid #b8f4e4;border-left:2px solid #b8f4e4;border-right:3px solid #2c7c68;border-bottom:3px solid #2c7c68;font-size:14.7px;line-height:26px;padding-left:5px;color:#000;overflow:hidden">Inch</div>
<div class="a" style="left:1413px;top:788px;width:12px;height:5px;background:#80c0b0;border-top:1px solid #c8f4ec;border-left:1px solid #c8f4ec;border-right:1px solid #2c7c68;border-bottom:1px solid #2c7c68"></div>
<!-- lower bar -->
<div class="a" style="left:0;top:805px;width:1433px;height:3px;background:#587876"></div>
<div class="a" style="left:0;top:808px;width:1433px;height:26px;background:#b0fafa;border-top:4px solid #d8fcfc;border-bottom:2px solid #5aa8a0"></div>
<div class="a" style="left:1430px;top:810px;width:2px;height:23px;background:#5aa8a0"></div>
<div class="a" style="left:0;top:834px;width:1433px;height:2px;background:#000"></div>
<div class="a" style="left:0;top:836px;width:1433px;height:5px;background:#fffbd0"></div>

</body></html>
